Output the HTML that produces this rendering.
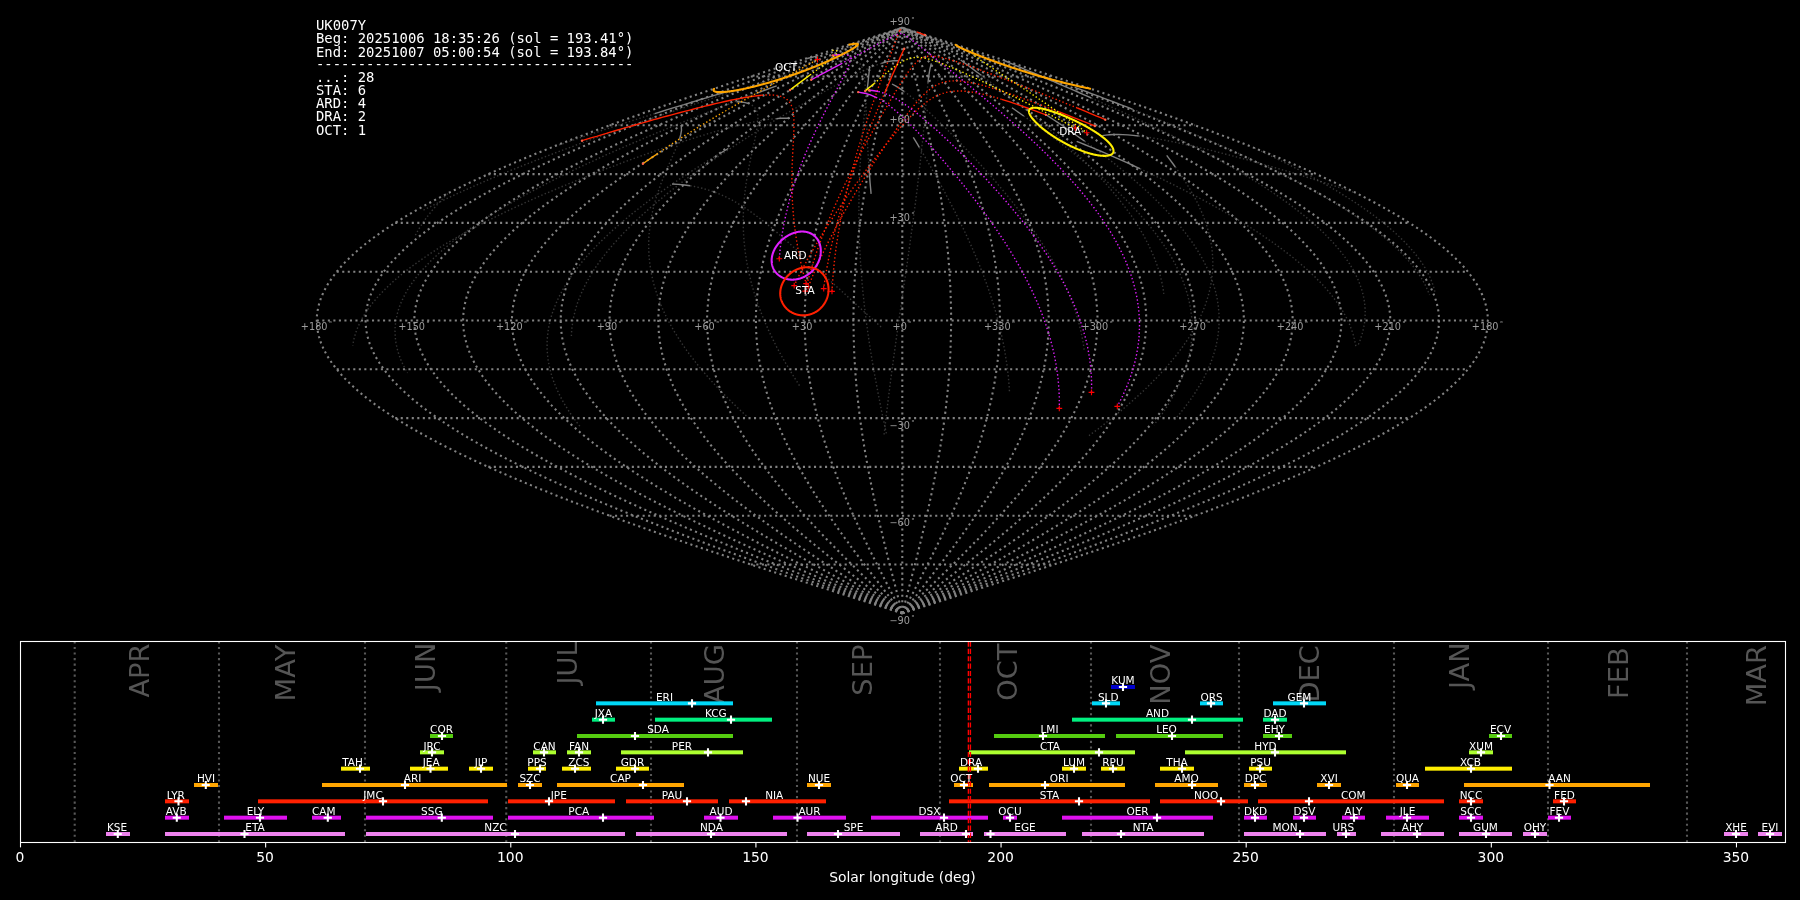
<!DOCTYPE html>
<html lang="en"><head><meta charset="utf-8"><title>UK007Y shower association</title>
<style>html,body{margin:0;padding:0;background:#000;overflow:hidden}svg{display:block;will-change:transform}</style></head>
<body><svg width="1800" height="900" viewBox="0 0 1800 900">
<rect width="1800" height="900" fill="#000"/>
<g id="sky" fill="none">
<g stroke="#828282" stroke-width="2.08" stroke-dasharray="2.08 3.44">
<path d="M902.3,613.3 L912.5,610.0 L922.7,606.8 L932.9,603.5 L943.1,600.3 L953.3,597.0 L963.5,593.8 L973.7,590.5 L983.8,587.2 L993.9,584.0 L1004.0,580.7 L1014.0,577.5 L1024.0,574.2 L1034.0,571.0 L1044.0,567.7 L1053.8,564.5 L1063.7,561.2 L1073.5,558.0 L1083.2,554.7 L1092.9,551.5 L1102.6,548.2 L1112.1,545.0 L1121.6,541.7 L1131.1,538.5 L1140.5,535.2 L1149.8,531.9 L1159.0,528.7 L1168.1,525.4 L1177.2,522.2 L1186.2,518.9 L1195.1,515.7 L1203.9,512.4 L1212.6,509.2 L1221.2,505.9 L1229.7,502.7 L1238.2,499.4 L1246.5,496.2 L1254.7,492.9 L1262.8,489.7 L1270.8,486.4 L1278.7,483.1 L1286.4,479.9 L1294.1,476.6 L1301.6,473.4 L1309.1,470.1 L1316.3,466.9 L1323.5,463.6 L1330.5,460.4 L1337.4,457.1 L1344.2,453.9 L1350.8,450.6 L1357.4,447.4 L1363.7,444.1 L1369.9,440.9 L1376.0,437.6 L1381.9,434.4 L1387.7,431.1 L1393.4,427.8 L1398.9,424.6 L1404.2,421.3 L1409.4,418.1 L1414.4,414.8 L1419.3,411.6 L1424.0,408.3 L1428.6,405.1 L1433.0,401.8 L1437.2,398.6 L1441.3,395.3 L1445.2,392.1 L1448.9,388.8 L1452.5,385.6 L1455.9,382.3 L1459.2,379.1 L1462.3,375.8 L1465.2,372.5 L1467.9,369.3 L1470.4,366.0 L1472.8,362.8 L1475.0,359.5 L1477.1,356.3 L1478.9,353.0 L1480.6,349.8 L1482.1,346.5 L1483.5,343.3 L1484.6,340.0 L1485.6,336.8 L1486.4,333.5 L1487.0,330.3 L1487.5,327.0 L1487.8,323.8 L1487.8,320.5 L1487.8,317.2 L1487.5,314.0 L1487.0,310.7 L1486.4,307.5 L1485.6,304.2 L1484.6,301.0 L1483.5,297.7 L1482.1,294.5 L1480.6,291.2 L1478.9,288.0 L1477.1,284.7 L1475.0,281.5 L1472.8,278.2 L1470.4,275.0 L1467.9,271.7 L1465.2,268.5 L1462.3,265.2 L1459.2,261.9 L1455.9,258.7 L1452.5,255.4 L1448.9,252.2 L1445.2,248.9 L1441.3,245.7 L1437.2,242.4 L1433.0,239.2 L1428.6,235.9 L1424.0,232.7 L1419.3,229.4 L1414.4,226.2 L1409.4,222.9 L1404.2,219.7 L1398.9,216.4 L1393.4,213.2 L1387.7,209.9 L1381.9,206.6 L1376.0,203.4 L1369.9,200.1 L1363.7,196.9 L1357.4,193.6 L1350.8,190.4 L1344.2,187.1 L1337.4,183.9 L1330.5,180.6 L1323.5,177.4 L1316.3,174.1 L1309.1,170.9 L1301.6,167.6 L1294.1,164.4 L1286.4,161.1 L1278.7,157.8 L1270.8,154.6 L1262.8,151.3 L1254.7,148.1 L1246.5,144.8 L1238.2,141.6 L1229.7,138.3 L1221.2,135.1 L1212.6,131.8 L1203.9,128.6 L1195.1,125.3 L1186.2,122.1 L1177.2,118.8 L1168.1,115.6 L1159.0,112.3 L1149.8,109.1 L1140.5,105.8 L1131.1,102.5 L1121.6,99.3 L1112.1,96.0 L1102.6,92.8 L1092.9,89.5 L1083.2,86.3 L1073.5,83.0 L1063.7,79.8 L1053.8,76.5 L1044.0,73.3 L1034.0,70.0 L1024.0,66.8 L1014.0,63.5 L1004.0,60.3 L993.9,57.0 L983.8,53.8 L973.7,50.5 L963.5,47.2 L953.3,44.0 L943.1,40.7 L932.9,37.5 L922.7,34.2 L912.5,31.0 L902.3,27.7"/>
<path d="M902.3,613.3 L911.7,610.0 L921.0,606.8 L930.4,603.5 L939.7,600.3 L949.1,597.0 L958.4,593.8 L967.7,590.5 L977.0,587.2 L986.3,584.0 L995.5,580.7 L1004.7,577.5 L1013.9,574.2 L1023.0,571.0 L1032.2,567.7 L1041.2,564.5 L1050.2,561.2 L1059.2,558.0 L1068.2,554.7 L1077.0,551.5 L1085.9,548.2 L1094.7,545.0 L1103.4,541.7 L1112.0,538.5 L1120.6,535.2 L1129.1,531.9 L1137.6,528.7 L1146.0,525.4 L1154.3,522.2 L1162.5,518.9 L1170.7,515.7 L1178.7,512.4 L1186.7,509.2 L1194.6,505.9 L1202.4,502.7 L1210.2,499.4 L1217.8,496.2 L1225.3,492.9 L1232.8,489.7 L1240.1,486.4 L1247.3,483.1 L1254.4,479.9 L1261.5,476.6 L1268.4,473.4 L1275.2,470.1 L1281.8,466.9 L1288.4,463.6 L1294.9,460.4 L1301.2,457.1 L1307.4,453.9 L1313.5,450.6 L1319.4,447.4 L1325.3,444.1 L1331.0,440.9 L1336.5,437.6 L1342.0,434.4 L1347.3,431.1 L1352.5,427.8 L1357.5,424.6 L1362.4,421.3 L1367.1,418.1 L1371.7,414.8 L1376.2,411.6 L1380.5,408.3 L1384.7,405.1 L1388.8,401.8 L1392.6,398.6 L1396.4,395.3 L1400.0,392.1 L1403.4,388.8 L1406.7,385.6 L1409.8,382.3 L1412.8,379.1 L1415.6,375.8 L1418.3,372.5 L1420.8,369.3 L1423.1,366.0 L1425.3,362.8 L1427.3,359.5 L1429.2,356.3 L1430.9,353.0 L1432.4,349.8 L1433.8,346.5 L1435.0,343.3 L1436.1,340.0 L1437.0,336.8 L1437.7,333.5 L1438.3,330.3 L1438.7,327.0 L1439.0,323.8 L1439.0,320.5 L1439.0,317.2 L1438.7,314.0 L1438.3,310.7 L1437.7,307.5 L1437.0,304.2 L1436.1,301.0 L1435.0,297.7 L1433.8,294.5 L1432.4,291.2 L1430.9,288.0 L1429.2,284.7 L1427.3,281.5 L1425.3,278.2 L1423.1,275.0 L1420.8,271.7 L1418.3,268.5 L1415.6,265.2 L1412.8,261.9 L1409.8,258.7 L1406.7,255.4 L1403.4,252.2 L1400.0,248.9 L1396.4,245.7 L1392.6,242.4 L1388.8,239.2 L1384.7,235.9 L1380.5,232.7 L1376.2,229.4 L1371.7,226.2 L1367.1,222.9 L1362.4,219.7 L1357.5,216.4 L1352.5,213.2 L1347.3,209.9 L1342.0,206.6 L1336.5,203.4 L1331.0,200.1 L1325.3,196.9 L1319.4,193.6 L1313.5,190.4 L1307.4,187.1 L1301.2,183.9 L1294.9,180.6 L1288.4,177.4 L1281.8,174.1 L1275.2,170.9 L1268.4,167.6 L1261.5,164.4 L1254.4,161.1 L1247.3,157.8 L1240.1,154.6 L1232.8,151.3 L1225.3,148.1 L1217.8,144.8 L1210.2,141.6 L1202.4,138.3 L1194.6,135.1 L1186.7,131.8 L1178.7,128.6 L1170.7,125.3 L1162.5,122.1 L1154.3,118.8 L1146.0,115.6 L1137.6,112.3 L1129.1,109.1 L1120.6,105.8 L1112.0,102.5 L1103.4,99.3 L1094.7,96.0 L1085.9,92.8 L1077.0,89.5 L1068.2,86.3 L1059.2,83.0 L1050.2,79.8 L1041.2,76.5 L1032.2,73.3 L1023.0,70.0 L1013.9,66.8 L1004.7,63.5 L995.5,60.3 L986.3,57.0 L977.0,53.8 L967.7,50.5 L958.4,47.2 L949.1,44.0 L939.7,40.7 L930.4,37.5 L921.0,34.2 L911.7,31.0 L902.3,27.7"/>
<path d="M902.3,613.3 L910.8,610.0 L919.3,606.8 L927.8,603.5 L936.3,600.3 L944.8,597.0 L953.3,593.8 L961.8,590.5 L970.2,587.2 L978.6,584.0 L987.0,580.7 L995.4,577.5 L1003.8,574.2 L1012.1,571.0 L1020.3,567.7 L1028.6,564.5 L1036.8,561.2 L1045.0,558.0 L1053.1,554.7 L1061.2,551.5 L1069.2,548.2 L1077.2,545.0 L1085.1,541.7 L1093.0,538.5 L1100.8,535.2 L1108.5,531.9 L1116.2,528.7 L1123.8,525.4 L1131.4,522.2 L1138.9,518.9 L1146.3,515.7 L1153.6,512.4 L1160.9,509.2 L1168.1,505.9 L1175.2,502.7 L1182.2,499.4 L1189.1,496.2 L1196.0,492.9 L1202.7,489.7 L1209.4,486.4 L1215.9,483.1 L1222.4,479.9 L1228.8,476.6 L1235.1,473.4 L1241.3,470.1 L1247.3,466.9 L1253.3,463.6 L1259.2,460.4 L1264.9,457.1 L1270.6,453.9 L1276.1,450.6 L1281.5,447.4 L1286.8,444.1 L1292.0,440.9 L1297.1,437.6 L1302.0,434.4 L1306.8,431.1 L1311.5,427.8 L1316.1,424.6 L1320.6,421.3 L1324.9,418.1 L1329.1,414.8 L1333.1,411.6 L1337.1,408.3 L1340.9,405.1 L1344.5,401.8 L1348.1,398.6 L1351.5,395.3 L1354.7,392.1 L1357.8,388.8 L1360.8,385.6 L1363.7,382.3 L1366.4,379.1 L1368.9,375.8 L1371.3,372.5 L1373.6,369.3 L1375.8,366.0 L1377.7,362.8 L1379.6,359.5 L1381.3,356.3 L1382.8,353.0 L1384.2,349.8 L1385.5,346.5 L1386.6,343.3 L1387.6,340.0 L1388.4,336.8 L1389.1,333.5 L1389.6,330.3 L1390.0,327.0 L1390.2,323.8 L1390.2,320.5 L1390.2,317.2 L1390.0,314.0 L1389.6,310.7 L1389.1,307.5 L1388.4,304.2 L1387.6,301.0 L1386.6,297.7 L1385.5,294.5 L1384.2,291.2 L1382.8,288.0 L1381.3,284.7 L1379.6,281.5 L1377.7,278.2 L1375.8,275.0 L1373.6,271.7 L1371.3,268.5 L1368.9,265.2 L1366.4,261.9 L1363.7,258.7 L1360.8,255.4 L1357.8,252.2 L1354.7,248.9 L1351.5,245.7 L1348.1,242.4 L1344.5,239.2 L1340.9,235.9 L1337.1,232.7 L1333.1,229.4 L1329.1,226.2 L1324.9,222.9 L1320.6,219.7 L1316.1,216.4 L1311.5,213.2 L1306.8,209.9 L1302.0,206.6 L1297.1,203.4 L1292.0,200.1 L1286.8,196.9 L1281.5,193.6 L1276.1,190.4 L1270.6,187.1 L1264.9,183.9 L1259.2,180.6 L1253.3,177.4 L1247.3,174.1 L1241.3,170.9 L1235.1,167.6 L1228.8,164.4 L1222.4,161.1 L1215.9,157.8 L1209.4,154.6 L1202.7,151.3 L1196.0,148.1 L1189.1,144.8 L1182.2,141.6 L1175.2,138.3 L1168.1,135.1 L1160.9,131.8 L1153.6,128.6 L1146.3,125.3 L1138.9,122.1 L1131.4,118.8 L1123.8,115.6 L1116.2,112.3 L1108.5,109.1 L1100.8,105.8 L1093.0,102.5 L1085.1,99.3 L1077.2,96.0 L1069.2,92.8 L1061.2,89.5 L1053.1,86.3 L1045.0,83.0 L1036.8,79.8 L1028.6,76.5 L1020.3,73.3 L1012.1,70.0 L1003.8,66.8 L995.4,63.5 L987.0,60.3 L978.6,57.0 L970.2,53.8 L961.8,50.5 L953.3,47.2 L944.8,44.0 L936.3,40.7 L927.8,37.5 L919.3,34.2 L910.8,31.0 L902.3,27.7"/>
<path d="M902.3,613.3 L910.0,610.0 L917.6,606.8 L925.3,603.5 L932.9,600.3 L940.6,597.0 L948.2,593.8 L955.8,590.5 L963.4,587.2 L971.0,584.0 L978.6,580.7 L986.1,577.5 L993.6,574.2 L1001.1,571.0 L1008.5,567.7 L1016.0,564.5 L1023.3,561.2 L1030.7,558.0 L1038.0,554.7 L1045.3,551.5 L1052.5,548.2 L1059.7,545.0 L1066.8,541.7 L1073.9,538.5 L1080.9,535.2 L1087.9,531.9 L1094.8,528.7 L1101.7,525.4 L1108.5,522.2 L1115.2,518.9 L1121.9,515.7 L1128.5,512.4 L1135.0,509.2 L1141.5,505.9 L1147.9,502.7 L1154.2,499.4 L1160.4,496.2 L1166.6,492.9 L1172.7,489.7 L1178.7,486.4 L1184.6,483.1 L1190.4,479.9 L1196.2,476.6 L1201.8,473.4 L1207.4,470.1 L1212.8,466.9 L1218.2,463.6 L1223.5,460.4 L1228.7,457.1 L1233.7,453.9 L1238.7,450.6 L1243.6,447.4 L1248.4,444.1 L1253.0,440.9 L1257.6,437.6 L1262.0,434.4 L1266.4,431.1 L1270.6,427.8 L1274.7,424.6 L1278.7,421.3 L1282.6,418.1 L1286.4,414.8 L1290.1,411.6 L1293.6,408.3 L1297.0,405.1 L1300.3,401.8 L1303.5,398.6 L1306.5,395.3 L1309.5,392.1 L1312.3,388.8 L1315.0,385.6 L1317.5,382.3 L1320.0,379.1 L1322.3,375.8 L1324.4,372.5 L1326.5,369.3 L1328.4,366.0 L1330.2,362.8 L1331.9,359.5 L1333.4,356.3 L1334.8,353.0 L1336.0,349.8 L1337.2,346.5 L1338.2,343.3 L1339.0,340.0 L1339.8,336.8 L1340.4,333.5 L1340.9,330.3 L1341.2,327.0 L1341.4,323.8 L1341.5,320.5 L1341.4,317.2 L1341.2,314.0 L1340.9,310.7 L1340.4,307.5 L1339.8,304.2 L1339.0,301.0 L1338.2,297.7 L1337.2,294.5 L1336.0,291.2 L1334.8,288.0 L1333.4,284.7 L1331.9,281.5 L1330.2,278.2 L1328.4,275.0 L1326.5,271.7 L1324.4,268.5 L1322.3,265.2 L1320.0,261.9 L1317.5,258.7 L1315.0,255.4 L1312.3,252.2 L1309.5,248.9 L1306.5,245.7 L1303.5,242.4 L1300.3,239.2 L1297.0,235.9 L1293.6,232.7 L1290.1,229.4 L1286.4,226.2 L1282.6,222.9 L1278.7,219.7 L1274.7,216.4 L1270.6,213.2 L1266.4,209.9 L1262.0,206.6 L1257.6,203.4 L1253.0,200.1 L1248.4,196.9 L1243.6,193.6 L1238.7,190.4 L1233.7,187.1 L1228.7,183.9 L1223.5,180.6 L1218.2,177.4 L1212.8,174.1 L1207.4,170.9 L1201.8,167.6 L1196.2,164.4 L1190.4,161.1 L1184.6,157.8 L1178.7,154.6 L1172.7,151.3 L1166.6,148.1 L1160.4,144.8 L1154.2,141.6 L1147.9,138.3 L1141.5,135.1 L1135.0,131.8 L1128.5,128.6 L1121.9,125.3 L1115.2,122.1 L1108.5,118.8 L1101.7,115.6 L1094.8,112.3 L1087.9,109.1 L1080.9,105.8 L1073.9,102.5 L1066.8,99.3 L1059.7,96.0 L1052.5,92.8 L1045.3,89.5 L1038.0,86.3 L1030.7,83.0 L1023.3,79.8 L1016.0,76.5 L1008.5,73.3 L1001.1,70.0 L993.6,66.8 L986.1,63.5 L978.6,60.3 L971.0,57.0 L963.4,53.8 L955.8,50.5 L948.2,47.2 L940.6,44.0 L932.9,40.7 L925.3,37.5 L917.6,34.2 L910.0,31.0 L902.3,27.7"/>
<path d="M902.3,613.3 L909.1,610.0 L915.9,606.8 L922.7,603.5 L929.5,600.3 L936.3,597.0 L943.1,593.8 L949.9,590.5 L956.6,587.2 L963.4,584.0 L970.1,580.7 L976.8,577.5 L983.5,574.2 L990.1,571.0 L996.7,567.7 L1003.3,564.5 L1009.9,561.2 L1016.4,558.0 L1022.9,554.7 L1029.4,551.5 L1035.8,548.2 L1042.2,545.0 L1048.5,541.7 L1054.8,538.5 L1061.1,535.2 L1067.3,531.9 L1073.4,528.7 L1079.5,525.4 L1085.6,522.2 L1091.6,518.9 L1097.5,515.7 L1103.4,512.4 L1109.2,509.2 L1114.9,505.9 L1120.6,502.7 L1126.2,499.4 L1131.7,496.2 L1137.2,492.9 L1142.6,489.7 L1148.0,486.4 L1153.2,483.1 L1158.4,479.9 L1163.5,476.6 L1168.5,473.4 L1173.5,470.1 L1178.3,466.9 L1183.1,463.6 L1187.8,460.4 L1192.4,457.1 L1196.9,453.9 L1201.3,450.6 L1205.7,447.4 L1209.9,444.1 L1214.1,440.9 L1218.1,437.6 L1222.1,434.4 L1225.9,431.1 L1229.7,427.8 L1233.3,424.6 L1236.9,421.3 L1240.4,418.1 L1243.7,414.8 L1247.0,411.6 L1250.1,408.3 L1253.2,405.1 L1256.1,401.8 L1258.9,398.6 L1261.6,395.3 L1264.2,392.1 L1266.7,388.8 L1269.1,385.6 L1271.4,382.3 L1273.6,379.1 L1275.6,375.8 L1277.5,372.5 L1279.4,369.3 L1281.1,366.0 L1282.7,362.8 L1284.1,359.5 L1285.5,356.3 L1286.7,353.0 L1287.9,349.8 L1288.9,346.5 L1289.8,343.3 L1290.5,340.0 L1291.2,336.8 L1291.7,333.5 L1292.1,330.3 L1292.4,327.0 L1292.6,323.8 L1292.7,320.5 L1292.6,317.2 L1292.4,314.0 L1292.1,310.7 L1291.7,307.5 L1291.2,304.2 L1290.5,301.0 L1289.8,297.7 L1288.9,294.5 L1287.9,291.2 L1286.7,288.0 L1285.5,284.7 L1284.1,281.5 L1282.7,278.2 L1281.1,275.0 L1279.4,271.7 L1277.5,268.5 L1275.6,265.2 L1273.6,261.9 L1271.4,258.7 L1269.1,255.4 L1266.7,252.2 L1264.2,248.9 L1261.6,245.7 L1258.9,242.4 L1256.1,239.2 L1253.2,235.9 L1250.1,232.7 L1247.0,229.4 L1243.7,226.2 L1240.4,222.9 L1236.9,219.7 L1233.3,216.4 L1229.7,213.2 L1225.9,209.9 L1222.1,206.6 L1218.1,203.4 L1214.1,200.1 L1209.9,196.9 L1205.7,193.6 L1201.3,190.4 L1196.9,187.1 L1192.4,183.9 L1187.8,180.6 L1183.1,177.4 L1178.3,174.1 L1173.5,170.9 L1168.5,167.6 L1163.5,164.4 L1158.4,161.1 L1153.2,157.8 L1148.0,154.6 L1142.6,151.3 L1137.2,148.1 L1131.7,144.8 L1126.2,141.6 L1120.6,138.3 L1114.9,135.1 L1109.2,131.8 L1103.4,128.6 L1097.5,125.3 L1091.6,122.1 L1085.6,118.8 L1079.5,115.6 L1073.4,112.3 L1067.3,109.1 L1061.1,105.8 L1054.8,102.5 L1048.5,99.3 L1042.2,96.0 L1035.8,92.8 L1029.4,89.5 L1022.9,86.3 L1016.4,83.0 L1009.9,79.8 L1003.3,76.5 L996.7,73.3 L990.1,70.0 L983.5,66.8 L976.8,63.5 L970.1,60.3 L963.4,57.0 L956.6,53.8 L949.9,50.5 L943.1,47.2 L936.3,44.0 L929.5,40.7 L922.7,37.5 L915.9,34.2 L909.1,31.0 L902.3,27.7"/>
<path d="M902.3,613.3 L908.3,610.0 L914.2,606.8 L920.2,603.5 L926.1,600.3 L932.1,597.0 L938.0,593.8 L943.9,590.5 L949.8,587.2 L955.7,584.0 L961.6,580.7 L967.5,577.5 L973.3,574.2 L979.1,571.0 L984.9,567.7 L990.7,564.5 L996.4,561.2 L1002.2,558.0 L1007.8,554.7 L1013.5,551.5 L1019.1,548.2 L1024.7,545.0 L1030.3,541.7 L1035.8,538.5 L1041.2,535.2 L1046.7,531.9 L1052.0,528.7 L1057.4,525.4 L1062.7,522.2 L1067.9,518.9 L1073.1,515.7 L1078.2,512.4 L1083.3,509.2 L1088.3,505.9 L1093.3,502.7 L1098.2,499.4 L1103.1,496.2 L1107.9,492.9 L1112.6,489.7 L1117.3,486.4 L1121.9,483.1 L1126.4,479.9 L1130.9,476.6 L1135.2,473.4 L1139.6,470.1 L1143.8,466.9 L1148.0,463.6 L1152.1,460.4 L1156.1,457.1 L1160.1,453.9 L1164.0,450.6 L1167.7,447.4 L1171.5,444.1 L1175.1,440.9 L1178.6,437.6 L1182.1,434.4 L1185.5,431.1 L1188.8,427.8 L1192.0,424.6 L1195.1,421.3 L1198.1,418.1 L1201.0,414.8 L1203.9,411.6 L1206.6,408.3 L1209.3,405.1 L1211.9,401.8 L1214.3,398.6 L1216.7,395.3 L1219.0,392.1 L1221.2,388.8 L1223.3,385.6 L1225.3,382.3 L1227.1,379.1 L1228.9,375.8 L1230.6,372.5 L1232.2,369.3 L1233.7,366.0 L1235.1,362.8 L1236.4,359.5 L1237.6,356.3 L1238.7,353.0 L1239.7,349.8 L1240.5,346.5 L1241.3,343.3 L1242.0,340.0 L1242.6,336.8 L1243.0,333.5 L1243.4,330.3 L1243.7,327.0 L1243.8,323.8 L1243.9,320.5 L1243.8,317.2 L1243.7,314.0 L1243.4,310.7 L1243.0,307.5 L1242.6,304.2 L1242.0,301.0 L1241.3,297.7 L1240.5,294.5 L1239.7,291.2 L1238.7,288.0 L1237.6,284.7 L1236.4,281.5 L1235.1,278.2 L1233.7,275.0 L1232.2,271.7 L1230.6,268.5 L1228.9,265.2 L1227.1,261.9 L1225.3,258.7 L1223.3,255.4 L1221.2,252.2 L1219.0,248.9 L1216.7,245.7 L1214.3,242.4 L1211.9,239.2 L1209.3,235.9 L1206.6,232.7 L1203.9,229.4 L1201.0,226.2 L1198.1,222.9 L1195.1,219.7 L1192.0,216.4 L1188.8,213.2 L1185.5,209.9 L1182.1,206.6 L1178.6,203.4 L1175.1,200.1 L1171.5,196.9 L1167.7,193.6 L1164.0,190.4 L1160.1,187.1 L1156.1,183.9 L1152.1,180.6 L1148.0,177.4 L1143.8,174.1 L1139.6,170.9 L1135.2,167.6 L1130.9,164.4 L1126.4,161.1 L1121.9,157.8 L1117.3,154.6 L1112.6,151.3 L1107.9,148.1 L1103.1,144.8 L1098.2,141.6 L1093.3,138.3 L1088.3,135.1 L1083.3,131.8 L1078.2,128.6 L1073.1,125.3 L1067.9,122.1 L1062.7,118.8 L1057.4,115.6 L1052.0,112.3 L1046.7,109.1 L1041.2,105.8 L1035.8,102.5 L1030.3,99.3 L1024.7,96.0 L1019.1,92.8 L1013.5,89.5 L1007.8,86.3 L1002.2,83.0 L996.4,79.8 L990.7,76.5 L984.9,73.3 L979.1,70.0 L973.3,66.8 L967.5,63.5 L961.6,60.3 L955.7,57.0 L949.8,53.8 L943.9,50.5 L938.0,47.2 L932.1,44.0 L926.1,40.7 L920.2,37.5 L914.2,34.2 L908.3,31.0 L902.3,27.7"/>
<path d="M902.3,613.3 L907.4,610.0 L912.5,606.8 L917.6,603.5 L922.7,600.3 L927.8,597.0 L932.9,593.8 L938.0,590.5 L943.0,587.2 L948.1,584.0 L953.1,580.7 L958.2,577.5 L963.2,574.2 L968.2,571.0 L973.1,567.7 L978.1,564.5 L983.0,561.2 L987.9,558.0 L992.8,554.7 L997.6,551.5 L1002.4,548.2 L1007.2,545.0 L1012.0,541.7 L1016.7,538.5 L1021.4,535.2 L1026.0,531.9 L1030.6,528.7 L1035.2,525.4 L1039.7,522.2 L1044.2,518.9 L1048.7,515.7 L1053.1,512.4 L1057.4,509.2 L1061.8,505.9 L1066.0,502.7 L1070.2,499.4 L1074.4,496.2 L1078.5,492.9 L1082.5,489.7 L1086.5,486.4 L1090.5,483.1 L1094.4,479.9 L1098.2,476.6 L1102.0,473.4 L1105.7,470.1 L1109.3,466.9 L1112.9,463.6 L1116.4,460.4 L1119.9,457.1 L1123.3,453.9 L1126.6,450.6 L1129.8,447.4 L1133.0,444.1 L1136.1,440.9 L1139.2,437.6 L1142.1,434.4 L1145.0,431.1 L1147.8,427.8 L1150.6,424.6 L1153.3,421.3 L1155.8,418.1 L1158.4,414.8 L1160.8,411.6 L1163.2,408.3 L1165.4,405.1 L1167.6,401.8 L1169.8,398.6 L1171.8,395.3 L1173.8,392.1 L1175.6,388.8 L1177.4,385.6 L1179.1,382.3 L1180.7,379.1 L1182.3,375.8 L1183.7,372.5 L1185.1,369.3 L1186.4,366.0 L1187.6,362.8 L1188.7,359.5 L1189.7,356.3 L1190.6,353.0 L1191.5,349.8 L1192.2,346.5 L1192.9,343.3 L1193.5,340.0 L1194.0,336.8 L1194.4,333.5 L1194.7,330.3 L1194.9,327.0 L1195.0,323.8 L1195.1,320.5 L1195.0,317.2 L1194.9,314.0 L1194.7,310.7 L1194.4,307.5 L1194.0,304.2 L1193.5,301.0 L1192.9,297.7 L1192.2,294.5 L1191.5,291.2 L1190.6,288.0 L1189.7,284.7 L1188.7,281.5 L1187.6,278.2 L1186.4,275.0 L1185.1,271.7 L1183.7,268.5 L1182.3,265.2 L1180.7,261.9 L1179.1,258.7 L1177.4,255.4 L1175.6,252.2 L1173.8,248.9 L1171.8,245.7 L1169.8,242.4 L1167.6,239.2 L1165.4,235.9 L1163.2,232.7 L1160.8,229.4 L1158.4,226.2 L1155.8,222.9 L1153.3,219.7 L1150.6,216.4 L1147.8,213.2 L1145.0,209.9 L1142.1,206.6 L1139.2,203.4 L1136.1,200.1 L1133.0,196.9 L1129.8,193.6 L1126.6,190.4 L1123.3,187.1 L1119.9,183.9 L1116.4,180.6 L1112.9,177.4 L1109.3,174.1 L1105.7,170.9 L1102.0,167.6 L1098.2,164.4 L1094.4,161.1 L1090.5,157.8 L1086.5,154.6 L1082.5,151.3 L1078.5,148.1 L1074.4,144.8 L1070.2,141.6 L1066.0,138.3 L1061.8,135.1 L1057.4,131.8 L1053.1,128.6 L1048.7,125.3 L1044.2,122.1 L1039.7,118.8 L1035.2,115.6 L1030.6,112.3 L1026.0,109.1 L1021.4,105.8 L1016.7,102.5 L1012.0,99.3 L1007.2,96.0 L1002.4,92.8 L997.6,89.5 L992.8,86.3 L987.9,83.0 L983.0,79.8 L978.1,76.5 L973.1,73.3 L968.2,70.0 L963.2,66.8 L958.2,63.5 L953.1,60.3 L948.1,57.0 L943.0,53.8 L938.0,50.5 L932.9,47.2 L927.8,44.0 L922.7,40.7 L917.6,37.5 L912.5,34.2 L907.4,31.0 L902.3,27.7"/>
<path d="M902.3,613.3 L906.6,610.0 L910.8,606.8 L915.1,603.5 L919.3,600.3 L923.6,597.0 L927.8,593.8 L932.0,590.5 L936.3,587.2 L940.5,584.0 L944.7,580.7 L948.9,577.5 L953.0,574.2 L957.2,571.0 L961.3,567.7 L965.4,564.5 L969.5,561.2 L973.6,558.0 L977.7,554.7 L981.7,551.5 L985.7,548.2 L989.7,545.0 L993.7,541.7 L997.6,538.5 L1001.5,535.2 L1005.4,531.9 L1009.3,528.7 L1013.1,525.4 L1016.8,522.2 L1020.6,518.9 L1024.3,515.7 L1028.0,512.4 L1031.6,509.2 L1035.2,505.9 L1038.7,502.7 L1042.2,499.4 L1045.7,496.2 L1049.1,492.9 L1052.5,489.7 L1055.8,486.4 L1059.1,483.1 L1062.4,479.9 L1065.6,476.6 L1068.7,473.4 L1071.8,470.1 L1074.8,466.9 L1077.8,463.6 L1080.7,460.4 L1083.6,457.1 L1086.4,453.9 L1089.2,450.6 L1091.9,447.4 L1094.6,444.1 L1097.1,440.9 L1099.7,437.6 L1102.2,434.4 L1104.6,431.1 L1106.9,427.8 L1109.2,424.6 L1111.4,421.3 L1113.6,418.1 L1115.7,414.8 L1117.7,411.6 L1119.7,408.3 L1121.6,405.1 L1123.4,401.8 L1125.2,398.6 L1126.9,395.3 L1128.5,392.1 L1130.1,388.8 L1131.6,385.6 L1133.0,382.3 L1134.3,379.1 L1135.6,375.8 L1136.8,372.5 L1138.0,369.3 L1139.0,366.0 L1140.0,362.8 L1140.9,359.5 L1141.8,356.3 L1142.6,353.0 L1143.3,349.8 L1143.9,346.5 L1144.5,343.3 L1144.9,340.0 L1145.3,336.8 L1145.7,333.5 L1145.9,330.3 L1146.1,327.0 L1146.2,323.8 L1146.3,320.5 L1146.2,317.2 L1146.1,314.0 L1145.9,310.7 L1145.7,307.5 L1145.3,304.2 L1144.9,301.0 L1144.5,297.7 L1143.9,294.5 L1143.3,291.2 L1142.6,288.0 L1141.8,284.7 L1140.9,281.5 L1140.0,278.2 L1139.0,275.0 L1138.0,271.7 L1136.8,268.5 L1135.6,265.2 L1134.3,261.9 L1133.0,258.7 L1131.6,255.4 L1130.1,252.2 L1128.5,248.9 L1126.9,245.7 L1125.2,242.4 L1123.4,239.2 L1121.6,235.9 L1119.7,232.7 L1117.7,229.4 L1115.7,226.2 L1113.6,222.9 L1111.4,219.7 L1109.2,216.4 L1106.9,213.2 L1104.6,209.9 L1102.2,206.6 L1099.7,203.4 L1097.1,200.1 L1094.6,196.9 L1091.9,193.6 L1089.2,190.4 L1086.4,187.1 L1083.6,183.9 L1080.7,180.6 L1077.8,177.4 L1074.8,174.1 L1071.8,170.9 L1068.7,167.6 L1065.6,164.4 L1062.4,161.1 L1059.1,157.8 L1055.8,154.6 L1052.5,151.3 L1049.1,148.1 L1045.7,144.8 L1042.2,141.6 L1038.7,138.3 L1035.2,135.1 L1031.6,131.8 L1028.0,128.6 L1024.3,125.3 L1020.6,122.1 L1016.8,118.8 L1013.1,115.6 L1009.3,112.3 L1005.4,109.1 L1001.5,105.8 L997.6,102.5 L993.7,99.3 L989.7,96.0 L985.7,92.8 L981.7,89.5 L977.7,86.3 L973.6,83.0 L969.5,79.8 L965.4,76.5 L961.3,73.3 L957.2,70.0 L953.0,66.8 L948.9,63.5 L944.7,60.3 L940.5,57.0 L936.3,53.8 L932.0,50.5 L927.8,47.2 L923.6,44.0 L919.3,40.7 L915.1,37.5 L910.8,34.2 L906.6,31.0 L902.3,27.7"/>
<path d="M902.3,613.3 L905.7,610.0 L909.1,606.8 L912.5,603.5 L915.9,600.3 L919.3,597.0 L922.7,593.8 L926.1,590.5 L929.5,587.2 L932.8,584.0 L936.2,580.7 L939.5,577.5 L942.9,574.2 L946.2,571.0 L949.5,567.7 L952.8,564.5 L956.1,561.2 L959.4,558.0 L962.6,554.7 L965.8,551.5 L969.1,548.2 L972.2,545.0 L975.4,541.7 L978.6,538.5 L981.7,535.2 L984.8,531.9 L987.9,528.7 L990.9,525.4 L993.9,522.2 L996.9,518.9 L999.9,515.7 L1002.8,512.4 L1005.7,509.2 L1008.6,505.9 L1011.4,502.7 L1014.3,499.4 L1017.0,496.2 L1019.8,492.9 L1022.5,489.7 L1025.1,486.4 L1027.8,483.1 L1030.3,479.9 L1032.9,476.6 L1035.4,473.4 L1037.9,470.1 L1040.3,466.9 L1042.7,463.6 L1045.0,460.4 L1047.3,457.1 L1049.6,453.9 L1051.8,450.6 L1054.0,447.4 L1056.1,444.1 L1058.2,440.9 L1060.2,437.6 L1062.2,434.4 L1064.1,431.1 L1066.0,427.8 L1067.8,424.6 L1069.6,421.3 L1071.3,418.1 L1073.0,414.8 L1074.6,411.6 L1076.2,408.3 L1077.7,405.1 L1079.2,401.8 L1080.6,398.6 L1082.0,395.3 L1083.3,392.1 L1084.5,388.8 L1085.7,385.6 L1086.8,382.3 L1087.9,379.1 L1089.0,375.8 L1089.9,372.5 L1090.8,369.3 L1091.7,366.0 L1092.5,362.8 L1093.2,359.5 L1093.9,356.3 L1094.5,353.0 L1095.1,349.8 L1095.6,346.5 L1096.0,343.3 L1096.4,340.0 L1096.7,336.8 L1097.0,333.5 L1097.2,330.3 L1097.4,327.0 L1097.5,323.8 L1097.5,320.5 L1097.5,317.2 L1097.4,314.0 L1097.2,310.7 L1097.0,307.5 L1096.7,304.2 L1096.4,301.0 L1096.0,297.7 L1095.6,294.5 L1095.1,291.2 L1094.5,288.0 L1093.9,284.7 L1093.2,281.5 L1092.5,278.2 L1091.7,275.0 L1090.8,271.7 L1089.9,268.5 L1089.0,265.2 L1087.9,261.9 L1086.8,258.7 L1085.7,255.4 L1084.5,252.2 L1083.3,248.9 L1082.0,245.7 L1080.6,242.4 L1079.2,239.2 L1077.7,235.9 L1076.2,232.7 L1074.6,229.4 L1073.0,226.2 L1071.3,222.9 L1069.6,219.7 L1067.8,216.4 L1066.0,213.2 L1064.1,209.9 L1062.2,206.6 L1060.2,203.4 L1058.2,200.1 L1056.1,196.9 L1054.0,193.6 L1051.8,190.4 L1049.6,187.1 L1047.3,183.9 L1045.0,180.6 L1042.7,177.4 L1040.3,174.1 L1037.9,170.9 L1035.4,167.6 L1032.9,164.4 L1030.3,161.1 L1027.8,157.8 L1025.1,154.6 L1022.5,151.3 L1019.8,148.1 L1017.0,144.8 L1014.3,141.6 L1011.4,138.3 L1008.6,135.1 L1005.7,131.8 L1002.8,128.6 L999.9,125.3 L996.9,122.1 L993.9,118.8 L990.9,115.6 L987.9,112.3 L984.8,109.1 L981.7,105.8 L978.6,102.5 L975.4,99.3 L972.2,96.0 L969.1,92.8 L965.8,89.5 L962.6,86.3 L959.4,83.0 L956.1,79.8 L952.8,76.5 L949.5,73.3 L946.2,70.0 L942.9,66.8 L939.5,63.5 L936.2,60.3 L932.8,57.0 L929.5,53.8 L926.1,50.5 L922.7,47.2 L919.3,44.0 L915.9,40.7 L912.5,37.5 L909.1,34.2 L905.7,31.0 L902.3,27.7"/>
<path d="M902.3,613.3 L904.9,610.0 L907.4,606.8 L910.0,603.5 L912.5,600.3 L915.1,597.0 L917.6,593.8 L920.1,590.5 L922.7,587.2 L925.2,584.0 L927.7,580.7 L930.2,577.5 L932.7,574.2 L935.2,571.0 L937.7,567.7 L940.2,564.5 L942.6,561.2 L945.1,558.0 L947.5,554.7 L950.0,551.5 L952.4,548.2 L954.8,545.0 L957.1,541.7 L959.5,538.5 L961.8,535.2 L964.2,531.9 L966.5,528.7 L968.8,525.4 L971.0,522.2 L973.3,518.9 L975.5,515.7 L977.7,512.4 L979.9,509.2 L982.0,505.9 L984.2,502.7 L986.3,499.4 L988.3,496.2 L990.4,492.9 L992.4,489.7 L994.4,486.4 L996.4,483.1 L998.3,479.9 L1000.3,476.6 L1002.1,473.4 L1004.0,470.1 L1005.8,466.9 L1007.6,463.6 L1009.4,460.4 L1011.1,457.1 L1012.8,453.9 L1014.4,450.6 L1016.1,447.4 L1017.7,444.1 L1019.2,440.9 L1020.7,437.6 L1022.2,434.4 L1023.7,431.1 L1025.1,427.8 L1026.4,424.6 L1027.8,421.3 L1029.1,418.1 L1030.3,414.8 L1031.6,411.6 L1032.7,408.3 L1033.9,405.1 L1035.0,401.8 L1036.0,398.6 L1037.0,395.3 L1038.0,392.1 L1039.0,388.8 L1039.9,385.6 L1040.7,382.3 L1041.5,379.1 L1042.3,375.8 L1043.0,372.5 L1043.7,369.3 L1044.3,366.0 L1044.9,362.8 L1045.5,359.5 L1046.0,356.3 L1046.5,353.0 L1046.9,349.8 L1047.3,346.5 L1047.6,343.3 L1047.9,340.0 L1048.1,336.8 L1048.3,333.5 L1048.5,330.3 L1048.6,327.0 L1048.7,323.8 L1048.7,320.5 L1048.7,317.2 L1048.6,314.0 L1048.5,310.7 L1048.3,307.5 L1048.1,304.2 L1047.9,301.0 L1047.6,297.7 L1047.3,294.5 L1046.9,291.2 L1046.5,288.0 L1046.0,284.7 L1045.5,281.5 L1044.9,278.2 L1044.3,275.0 L1043.7,271.7 L1043.0,268.5 L1042.3,265.2 L1041.5,261.9 L1040.7,258.7 L1039.9,255.4 L1039.0,252.2 L1038.0,248.9 L1037.0,245.7 L1036.0,242.4 L1035.0,239.2 L1033.9,235.9 L1032.7,232.7 L1031.6,229.4 L1030.3,226.2 L1029.1,222.9 L1027.8,219.7 L1026.4,216.4 L1025.1,213.2 L1023.7,209.9 L1022.2,206.6 L1020.7,203.4 L1019.2,200.1 L1017.7,196.9 L1016.1,193.6 L1014.4,190.4 L1012.8,187.1 L1011.1,183.9 L1009.4,180.6 L1007.6,177.4 L1005.8,174.1 L1004.0,170.9 L1002.1,167.6 L1000.3,164.4 L998.3,161.1 L996.4,157.8 L994.4,154.6 L992.4,151.3 L990.4,148.1 L988.3,144.8 L986.3,141.6 L984.2,138.3 L982.0,135.1 L979.9,131.8 L977.7,128.6 L975.5,125.3 L973.3,122.1 L971.0,118.8 L968.8,115.6 L966.5,112.3 L964.2,109.1 L961.8,105.8 L959.5,102.5 L957.1,99.3 L954.8,96.0 L952.4,92.8 L950.0,89.5 L947.5,86.3 L945.1,83.0 L942.6,79.8 L940.2,76.5 L937.7,73.3 L935.2,70.0 L932.7,66.8 L930.2,63.5 L927.7,60.3 L925.2,57.0 L922.7,53.8 L920.1,50.5 L917.6,47.2 L915.1,44.0 L912.5,40.7 L910.0,37.5 L907.4,34.2 L904.9,31.0 L902.3,27.7"/>
<path d="M902.3,613.3 L904.0,610.0 L905.7,606.8 L907.4,603.5 L909.1,600.3 L910.8,597.0 L912.5,593.8 L914.2,590.5 L915.9,587.2 L917.6,584.0 L919.2,580.7 L920.9,577.5 L922.6,574.2 L924.3,571.0 L925.9,567.7 L927.6,564.5 L929.2,561.2 L930.8,558.0 L932.5,554.7 L934.1,551.5 L935.7,548.2 L937.3,545.0 L938.9,541.7 L940.4,538.5 L942.0,535.2 L943.5,531.9 L945.1,528.7 L946.6,525.4 L948.1,522.2 L949.6,518.9 L951.1,515.7 L952.6,512.4 L954.0,509.2 L955.5,505.9 L956.9,502.7 L958.3,499.4 L959.7,496.2 L961.0,492.9 L962.4,489.7 L963.7,486.4 L965.0,483.1 L966.3,479.9 L967.6,476.6 L968.9,473.4 L970.1,470.1 L971.3,466.9 L972.5,463.6 L973.7,460.4 L974.8,457.1 L976.0,453.9 L977.1,450.6 L978.1,447.4 L979.2,444.1 L980.2,440.9 L981.3,437.6 L982.2,434.4 L983.2,431.1 L984.1,427.8 L985.1,424.6 L986.0,421.3 L986.8,418.1 L987.7,414.8 L988.5,411.6 L989.3,408.3 L990.0,405.1 L990.7,401.8 L991.5,398.6 L992.1,395.3 L992.8,392.1 L993.4,388.8 L994.0,385.6 L994.6,382.3 L995.1,379.1 L995.6,375.8 L996.1,372.5 L996.6,369.3 L997.0,366.0 L997.4,362.8 L997.8,359.5 L998.1,356.3 L998.4,353.0 L998.7,349.8 L998.9,346.5 L999.2,343.3 L999.4,340.0 L999.5,336.8 L999.7,333.5 L999.8,330.3 L999.8,327.0 L999.9,323.8 L999.9,320.5 L999.9,317.2 L999.8,314.0 L999.8,310.7 L999.7,307.5 L999.5,304.2 L999.4,301.0 L999.2,297.7 L998.9,294.5 L998.7,291.2 L998.4,288.0 L998.1,284.7 L997.8,281.5 L997.4,278.2 L997.0,275.0 L996.6,271.7 L996.1,268.5 L995.6,265.2 L995.1,261.9 L994.6,258.7 L994.0,255.4 L993.4,252.2 L992.8,248.9 L992.1,245.7 L991.5,242.4 L990.7,239.2 L990.0,235.9 L989.3,232.7 L988.5,229.4 L987.7,226.2 L986.8,222.9 L986.0,219.7 L985.1,216.4 L984.1,213.2 L983.2,209.9 L982.2,206.6 L981.3,203.4 L980.2,200.1 L979.2,196.9 L978.1,193.6 L977.1,190.4 L976.0,187.1 L974.8,183.9 L973.7,180.6 L972.5,177.4 L971.3,174.1 L970.1,170.9 L968.9,167.6 L967.6,164.4 L966.3,161.1 L965.0,157.8 L963.7,154.6 L962.4,151.3 L961.0,148.1 L959.7,144.8 L958.3,141.6 L956.9,138.3 L955.5,135.1 L954.0,131.8 L952.6,128.6 L951.1,125.3 L949.6,122.1 L948.1,118.8 L946.6,115.6 L945.1,112.3 L943.5,109.1 L942.0,105.8 L940.4,102.5 L938.9,99.3 L937.3,96.0 L935.7,92.8 L934.1,89.5 L932.5,86.3 L930.8,83.0 L929.2,79.8 L927.6,76.5 L925.9,73.3 L924.3,70.0 L922.6,66.8 L920.9,63.5 L919.2,60.3 L917.6,57.0 L915.9,53.8 L914.2,50.5 L912.5,47.2 L910.8,44.0 L909.1,40.7 L907.4,37.5 L905.7,34.2 L904.0,31.0 L902.3,27.7"/>
<path d="M902.3,613.3 L903.2,610.0 L904.0,606.8 L904.9,603.5 L905.7,600.3 L906.6,597.0 L907.4,593.8 L908.2,590.5 L909.1,587.2 L909.9,584.0 L910.8,580.7 L911.6,577.5 L912.4,574.2 L913.3,571.0 L914.1,567.7 L914.9,564.5 L915.7,561.2 L916.6,558.0 L917.4,554.7 L918.2,551.5 L919.0,548.2 L919.8,545.0 L920.6,541.7 L921.4,538.5 L922.1,535.2 L922.9,531.9 L923.7,528.7 L924.5,525.4 L925.2,522.2 L926.0,518.9 L926.7,515.7 L927.4,512.4 L928.2,509.2 L928.9,505.9 L929.6,502.7 L930.3,499.4 L931.0,496.2 L931.7,492.9 L932.3,489.7 L933.0,486.4 L933.7,483.1 L934.3,479.9 L935.0,476.6 L935.6,473.4 L936.2,470.1 L936.8,466.9 L937.4,463.6 L938.0,460.4 L938.6,457.1 L939.1,453.9 L939.7,450.6 L940.2,447.4 L940.8,444.1 L941.3,440.9 L941.8,437.6 L942.3,434.4 L942.8,431.1 L943.2,427.8 L943.7,424.6 L944.1,421.3 L944.6,418.1 L945.0,414.8 L945.4,411.6 L945.8,408.3 L946.2,405.1 L946.5,401.8 L946.9,398.6 L947.2,395.3 L947.5,392.1 L947.9,388.8 L948.2,385.6 L948.4,382.3 L948.7,379.1 L949.0,375.8 L949.2,372.5 L949.4,369.3 L949.6,366.0 L949.8,362.8 L950.0,359.5 L950.2,356.3 L950.4,353.0 L950.5,349.8 L950.6,346.5 L950.7,343.3 L950.8,340.0 L950.9,336.8 L951.0,333.5 L951.0,330.3 L951.1,327.0 L951.1,323.8 L951.1,320.5 L951.1,317.2 L951.1,314.0 L951.0,310.7 L951.0,307.5 L950.9,304.2 L950.8,301.0 L950.7,297.7 L950.6,294.5 L950.5,291.2 L950.4,288.0 L950.2,284.7 L950.0,281.5 L949.8,278.2 L949.6,275.0 L949.4,271.7 L949.2,268.5 L949.0,265.2 L948.7,261.9 L948.4,258.7 L948.2,255.4 L947.9,252.2 L947.5,248.9 L947.2,245.7 L946.9,242.4 L946.5,239.2 L946.2,235.9 L945.8,232.7 L945.4,229.4 L945.0,226.2 L944.6,222.9 L944.1,219.7 L943.7,216.4 L943.2,213.2 L942.8,209.9 L942.3,206.6 L941.8,203.4 L941.3,200.1 L940.8,196.9 L940.2,193.6 L939.7,190.4 L939.1,187.1 L938.6,183.9 L938.0,180.6 L937.4,177.4 L936.8,174.1 L936.2,170.9 L935.6,167.6 L935.0,164.4 L934.3,161.1 L933.7,157.8 L933.0,154.6 L932.3,151.3 L931.7,148.1 L931.0,144.8 L930.3,141.6 L929.6,138.3 L928.9,135.1 L928.2,131.8 L927.4,128.6 L926.7,125.3 L926.0,122.1 L925.2,118.8 L924.5,115.6 L923.7,112.3 L922.9,109.1 L922.1,105.8 L921.4,102.5 L920.6,99.3 L919.8,96.0 L919.0,92.8 L918.2,89.5 L917.4,86.3 L916.6,83.0 L915.7,79.8 L914.9,76.5 L914.1,73.3 L913.3,70.0 L912.4,66.8 L911.6,63.5 L910.8,60.3 L909.9,57.0 L909.1,53.8 L908.2,50.5 L907.4,47.2 L906.6,44.0 L905.7,40.7 L904.9,37.5 L904.0,34.2 L903.2,31.0 L902.3,27.7"/>
<path d="M902.3,613.3 L902.3,610.0 L902.3,606.8 L902.3,603.5 L902.3,600.3 L902.3,597.0 L902.3,593.8 L902.3,590.5 L902.3,587.2 L902.3,584.0 L902.3,580.7 L902.3,577.5 L902.3,574.2 L902.3,571.0 L902.3,567.7 L902.3,564.5 L902.3,561.2 L902.3,558.0 L902.3,554.7 L902.3,551.5 L902.3,548.2 L902.3,545.0 L902.3,541.7 L902.3,538.5 L902.3,535.2 L902.3,531.9 L902.3,528.7 L902.3,525.4 L902.3,522.2 L902.3,518.9 L902.3,515.7 L902.3,512.4 L902.3,509.2 L902.3,505.9 L902.3,502.7 L902.3,499.4 L902.3,496.2 L902.3,492.9 L902.3,489.7 L902.3,486.4 L902.3,483.1 L902.3,479.9 L902.3,476.6 L902.3,473.4 L902.3,470.1 L902.3,466.9 L902.3,463.6 L902.3,460.4 L902.3,457.1 L902.3,453.9 L902.3,450.6 L902.3,447.4 L902.3,444.1 L902.3,440.9 L902.3,437.6 L902.3,434.4 L902.3,431.1 L902.3,427.8 L902.3,424.6 L902.3,421.3 L902.3,418.1 L902.3,414.8 L902.3,411.6 L902.3,408.3 L902.3,405.1 L902.3,401.8 L902.3,398.6 L902.3,395.3 L902.3,392.1 L902.3,388.8 L902.3,385.6 L902.3,382.3 L902.3,379.1 L902.3,375.8 L902.3,372.5 L902.3,369.3 L902.3,366.0 L902.3,362.8 L902.3,359.5 L902.3,356.3 L902.3,353.0 L902.3,349.8 L902.3,346.5 L902.3,343.3 L902.3,340.0 L902.3,336.8 L902.3,333.5 L902.3,330.3 L902.3,327.0 L902.3,323.8 L902.3,320.5 L902.3,317.2 L902.3,314.0 L902.3,310.7 L902.3,307.5 L902.3,304.2 L902.3,301.0 L902.3,297.7 L902.3,294.5 L902.3,291.2 L902.3,288.0 L902.3,284.7 L902.3,281.5 L902.3,278.2 L902.3,275.0 L902.3,271.7 L902.3,268.5 L902.3,265.2 L902.3,261.9 L902.3,258.7 L902.3,255.4 L902.3,252.2 L902.3,248.9 L902.3,245.7 L902.3,242.4 L902.3,239.2 L902.3,235.9 L902.3,232.7 L902.3,229.4 L902.3,226.2 L902.3,222.9 L902.3,219.7 L902.3,216.4 L902.3,213.2 L902.3,209.9 L902.3,206.6 L902.3,203.4 L902.3,200.1 L902.3,196.9 L902.3,193.6 L902.3,190.4 L902.3,187.1 L902.3,183.9 L902.3,180.6 L902.3,177.4 L902.3,174.1 L902.3,170.9 L902.3,167.6 L902.3,164.4 L902.3,161.1 L902.3,157.8 L902.3,154.6 L902.3,151.3 L902.3,148.1 L902.3,144.8 L902.3,141.6 L902.3,138.3 L902.3,135.1 L902.3,131.8 L902.3,128.6 L902.3,125.3 L902.3,122.1 L902.3,118.8 L902.3,115.6 L902.3,112.3 L902.3,109.1 L902.3,105.8 L902.3,102.5 L902.3,99.3 L902.3,96.0 L902.3,92.8 L902.3,89.5 L902.3,86.3 L902.3,83.0 L902.3,79.8 L902.3,76.5 L902.3,73.3 L902.3,70.0 L902.3,66.8 L902.3,63.5 L902.3,60.3 L902.3,57.0 L902.3,53.8 L902.3,50.5 L902.3,47.2 L902.3,44.0 L902.3,40.7 L902.3,37.5 L902.3,34.2 L902.3,31.0 L902.3,27.7"/>
<path d="M902.3,613.3 L901.4,610.0 L900.6,606.8 L899.7,603.5 L898.9,600.3 L898.0,597.0 L897.2,593.8 L896.4,590.5 L895.5,587.2 L894.7,584.0 L893.8,580.7 L893.0,577.5 L892.2,574.2 L891.3,571.0 L890.5,567.7 L889.7,564.5 L888.9,561.2 L888.0,558.0 L887.2,554.7 L886.4,551.5 L885.6,548.2 L884.8,545.0 L884.0,541.7 L883.2,538.5 L882.5,535.2 L881.7,531.9 L880.9,528.7 L880.1,525.4 L879.4,522.2 L878.6,518.9 L877.9,515.7 L877.2,512.4 L876.4,509.2 L875.7,505.9 L875.0,502.7 L874.3,499.4 L873.6,496.2 L872.9,492.9 L872.3,489.7 L871.6,486.4 L870.9,483.1 L870.3,479.9 L869.6,476.6 L869.0,473.4 L868.4,470.1 L867.8,466.9 L867.2,463.6 L866.6,460.4 L866.0,457.1 L865.5,453.9 L864.9,450.6 L864.4,447.4 L863.8,444.1 L863.3,440.9 L862.8,437.6 L862.3,434.4 L861.8,431.1 L861.4,427.8 L860.9,424.6 L860.5,421.3 L860.0,418.1 L859.6,414.8 L859.2,411.6 L858.8,408.3 L858.4,405.1 L858.1,401.8 L857.7,398.6 L857.4,395.3 L857.1,392.1 L856.7,388.8 L856.4,385.6 L856.2,382.3 L855.9,379.1 L855.6,375.8 L855.4,372.5 L855.2,369.3 L855.0,366.0 L854.8,362.8 L854.6,359.5 L854.4,356.3 L854.2,353.0 L854.1,349.8 L854.0,346.5 L853.9,343.3 L853.8,340.0 L853.7,336.8 L853.6,333.5 L853.6,330.3 L853.5,327.0 L853.5,323.8 L853.5,320.5 L853.5,317.2 L853.5,314.0 L853.6,310.7 L853.6,307.5 L853.7,304.2 L853.8,301.0 L853.9,297.7 L854.0,294.5 L854.1,291.2 L854.2,288.0 L854.4,284.7 L854.6,281.5 L854.8,278.2 L855.0,275.0 L855.2,271.7 L855.4,268.5 L855.6,265.2 L855.9,261.9 L856.2,258.7 L856.4,255.4 L856.7,252.2 L857.1,248.9 L857.4,245.7 L857.7,242.4 L858.1,239.2 L858.4,235.9 L858.8,232.7 L859.2,229.4 L859.6,226.2 L860.0,222.9 L860.5,219.7 L860.9,216.4 L861.4,213.2 L861.8,209.9 L862.3,206.6 L862.8,203.4 L863.3,200.1 L863.8,196.9 L864.4,193.6 L864.9,190.4 L865.5,187.1 L866.0,183.9 L866.6,180.6 L867.2,177.4 L867.8,174.1 L868.4,170.9 L869.0,167.6 L869.6,164.4 L870.3,161.1 L870.9,157.8 L871.6,154.6 L872.3,151.3 L872.9,148.1 L873.6,144.8 L874.3,141.6 L875.0,138.3 L875.7,135.1 L876.4,131.8 L877.2,128.6 L877.9,125.3 L878.6,122.1 L879.4,118.8 L880.1,115.6 L880.9,112.3 L881.7,109.1 L882.5,105.8 L883.2,102.5 L884.0,99.3 L884.8,96.0 L885.6,92.8 L886.4,89.5 L887.2,86.3 L888.0,83.0 L888.9,79.8 L889.7,76.5 L890.5,73.3 L891.3,70.0 L892.2,66.8 L893.0,63.5 L893.8,60.3 L894.7,57.0 L895.5,53.8 L896.4,50.5 L897.2,47.2 L898.0,44.0 L898.9,40.7 L899.7,37.5 L900.6,34.2 L901.4,31.0 L902.3,27.7"/>
<path d="M902.3,613.3 L900.6,610.0 L898.9,606.8 L897.2,603.5 L895.5,600.3 L893.8,597.0 L892.1,593.8 L890.4,590.5 L888.7,587.2 L887.0,584.0 L885.4,580.7 L883.7,577.5 L882.0,574.2 L880.3,571.0 L878.7,567.7 L877.0,564.5 L875.4,561.2 L873.8,558.0 L872.1,554.7 L870.5,551.5 L868.9,548.2 L867.3,545.0 L865.7,541.7 L864.2,538.5 L862.6,535.2 L861.1,531.9 L859.5,528.7 L858.0,525.4 L856.5,522.2 L855.0,518.9 L853.5,515.7 L852.0,512.4 L850.6,509.2 L849.1,505.9 L847.7,502.7 L846.3,499.4 L844.9,496.2 L843.6,492.9 L842.2,489.7 L840.9,486.4 L839.6,483.1 L838.3,479.9 L837.0,476.6 L835.7,473.4 L834.5,470.1 L833.3,466.9 L832.1,463.6 L830.9,460.4 L829.8,457.1 L828.6,453.9 L827.5,450.6 L826.5,447.4 L825.4,444.1 L824.4,440.9 L823.3,437.6 L822.4,434.4 L821.4,431.1 L820.5,427.8 L819.5,424.6 L818.6,421.3 L817.8,418.1 L816.9,414.8 L816.1,411.6 L815.3,408.3 L814.6,405.1 L813.9,401.8 L813.1,398.6 L812.5,395.3 L811.8,392.1 L811.2,388.8 L810.6,385.6 L810.0,382.3 L809.5,379.1 L809.0,375.8 L808.5,372.5 L808.0,369.3 L807.6,366.0 L807.2,362.8 L806.8,359.5 L806.5,356.3 L806.2,353.0 L805.9,349.8 L805.7,346.5 L805.4,343.3 L805.2,340.0 L805.1,336.8 L804.9,333.5 L804.8,330.3 L804.8,327.0 L804.7,323.8 L804.7,320.5 L804.7,317.2 L804.8,314.0 L804.8,310.7 L804.9,307.5 L805.1,304.2 L805.2,301.0 L805.4,297.7 L805.7,294.5 L805.9,291.2 L806.2,288.0 L806.5,284.7 L806.8,281.5 L807.2,278.2 L807.6,275.0 L808.0,271.7 L808.5,268.5 L809.0,265.2 L809.5,261.9 L810.0,258.7 L810.6,255.4 L811.2,252.2 L811.8,248.9 L812.5,245.7 L813.1,242.4 L813.9,239.2 L814.6,235.9 L815.3,232.7 L816.1,229.4 L816.9,226.2 L817.8,222.9 L818.6,219.7 L819.5,216.4 L820.5,213.2 L821.4,209.9 L822.4,206.6 L823.3,203.4 L824.4,200.1 L825.4,196.9 L826.5,193.6 L827.5,190.4 L828.6,187.1 L829.8,183.9 L830.9,180.6 L832.1,177.4 L833.3,174.1 L834.5,170.9 L835.7,167.6 L837.0,164.4 L838.3,161.1 L839.6,157.8 L840.9,154.6 L842.2,151.3 L843.6,148.1 L844.9,144.8 L846.3,141.6 L847.7,138.3 L849.1,135.1 L850.6,131.8 L852.0,128.6 L853.5,125.3 L855.0,122.1 L856.5,118.8 L858.0,115.6 L859.5,112.3 L861.1,109.1 L862.6,105.8 L864.2,102.5 L865.7,99.3 L867.3,96.0 L868.9,92.8 L870.5,89.5 L872.1,86.3 L873.8,83.0 L875.4,79.8 L877.0,76.5 L878.7,73.3 L880.3,70.0 L882.0,66.8 L883.7,63.5 L885.4,60.3 L887.0,57.0 L888.7,53.8 L890.4,50.5 L892.1,47.2 L893.8,44.0 L895.5,40.7 L897.2,37.5 L898.9,34.2 L900.6,31.0 L902.3,27.7"/>
<path d="M902.3,613.3 L899.7,610.0 L897.2,606.8 L894.6,603.5 L892.1,600.3 L889.5,597.0 L887.0,593.8 L884.5,590.5 L881.9,587.2 L879.4,584.0 L876.9,580.7 L874.4,577.5 L871.9,574.2 L869.4,571.0 L866.9,567.7 L864.4,564.5 L862.0,561.2 L859.5,558.0 L857.1,554.7 L854.6,551.5 L852.2,548.2 L849.8,545.0 L847.5,541.7 L845.1,538.5 L842.8,535.2 L840.4,531.9 L838.1,528.7 L835.8,525.4 L833.6,522.2 L831.3,518.9 L829.1,515.7 L826.9,512.4 L824.7,509.2 L822.6,505.9 L820.4,502.7 L818.3,499.4 L816.3,496.2 L814.2,492.9 L812.2,489.7 L810.2,486.4 L808.2,483.1 L806.3,479.9 L804.3,476.6 L802.5,473.4 L800.6,470.1 L798.8,466.9 L797.0,463.6 L795.2,460.4 L793.5,457.1 L791.8,453.9 L790.2,450.6 L788.5,447.4 L786.9,444.1 L785.4,440.9 L783.9,437.6 L782.4,434.4 L780.9,431.1 L779.5,427.8 L778.2,424.6 L776.8,421.3 L775.5,418.1 L774.3,414.8 L773.0,411.6 L771.9,408.3 L770.7,405.1 L769.6,401.8 L768.6,398.6 L767.6,395.3 L766.6,392.1 L765.6,388.8 L764.7,385.6 L763.9,382.3 L763.1,379.1 L762.3,375.8 L761.6,372.5 L760.9,369.3 L760.3,366.0 L759.7,362.8 L759.1,359.5 L758.6,356.3 L758.1,353.0 L757.7,349.8 L757.3,346.5 L757.0,343.3 L756.7,340.0 L756.5,336.8 L756.3,333.5 L756.1,330.3 L756.0,327.0 L755.9,323.8 L755.9,320.5 L755.9,317.2 L756.0,314.0 L756.1,310.7 L756.3,307.5 L756.5,304.2 L756.7,301.0 L757.0,297.7 L757.3,294.5 L757.7,291.2 L758.1,288.0 L758.6,284.7 L759.1,281.5 L759.7,278.2 L760.3,275.0 L760.9,271.7 L761.6,268.5 L762.3,265.2 L763.1,261.9 L763.9,258.7 L764.7,255.4 L765.6,252.2 L766.6,248.9 L767.6,245.7 L768.6,242.4 L769.6,239.2 L770.7,235.9 L771.9,232.7 L773.0,229.4 L774.3,226.2 L775.5,222.9 L776.8,219.7 L778.2,216.4 L779.5,213.2 L780.9,209.9 L782.4,206.6 L783.9,203.4 L785.4,200.1 L786.9,196.9 L788.5,193.6 L790.2,190.4 L791.8,187.1 L793.5,183.9 L795.2,180.6 L797.0,177.4 L798.8,174.1 L800.6,170.9 L802.5,167.6 L804.3,164.4 L806.3,161.1 L808.2,157.8 L810.2,154.6 L812.2,151.3 L814.2,148.1 L816.3,144.8 L818.3,141.6 L820.4,138.3 L822.6,135.1 L824.7,131.8 L826.9,128.6 L829.1,125.3 L831.3,122.1 L833.6,118.8 L835.8,115.6 L838.1,112.3 L840.4,109.1 L842.8,105.8 L845.1,102.5 L847.5,99.3 L849.8,96.0 L852.2,92.8 L854.6,89.5 L857.1,86.3 L859.5,83.0 L862.0,79.8 L864.4,76.5 L866.9,73.3 L869.4,70.0 L871.9,66.8 L874.4,63.5 L876.9,60.3 L879.4,57.0 L881.9,53.8 L884.5,50.5 L887.0,47.2 L889.5,44.0 L892.1,40.7 L894.6,37.5 L897.2,34.2 L899.7,31.0 L902.3,27.7"/>
<path d="M902.3,613.3 L898.9,610.0 L895.5,606.8 L892.1,603.5 L888.7,600.3 L885.3,597.0 L881.9,593.8 L878.5,590.5 L875.1,587.2 L871.8,584.0 L868.4,580.7 L865.1,577.5 L861.7,574.2 L858.4,571.0 L855.1,567.7 L851.8,564.5 L848.5,561.2 L845.2,558.0 L842.0,554.7 L838.8,551.5 L835.5,548.2 L832.4,545.0 L829.2,541.7 L826.0,538.5 L822.9,535.2 L819.8,531.9 L816.7,528.7 L813.7,525.4 L810.7,522.2 L807.7,518.9 L804.7,515.7 L801.8,512.4 L798.9,509.2 L796.0,505.9 L793.2,502.7 L790.3,499.4 L787.6,496.2 L784.8,492.9 L782.1,489.7 L779.5,486.4 L776.8,483.1 L774.3,479.9 L771.7,476.6 L769.2,473.4 L766.7,470.1 L764.3,466.9 L761.9,463.6 L759.6,460.4 L757.3,457.1 L755.0,453.9 L752.8,450.6 L750.6,447.4 L748.5,444.1 L746.4,440.9 L744.4,437.6 L742.4,434.4 L740.5,431.1 L738.6,427.8 L736.8,424.6 L735.0,421.3 L733.3,418.1 L731.6,414.8 L730.0,411.6 L728.4,408.3 L726.9,405.1 L725.4,401.8 L724.0,398.6 L722.6,395.3 L721.3,392.1 L720.1,388.8 L718.9,385.6 L717.8,382.3 L716.7,379.1 L715.6,375.8 L714.7,372.5 L713.8,369.3 L712.9,366.0 L712.1,362.8 L711.4,359.5 L710.7,356.3 L710.1,353.0 L709.5,349.8 L709.0,346.5 L708.6,343.3 L708.2,340.0 L707.9,336.8 L707.6,333.5 L707.4,330.3 L707.2,327.0 L707.1,323.8 L707.1,320.5 L707.1,317.2 L707.2,314.0 L707.4,310.7 L707.6,307.5 L707.9,304.2 L708.2,301.0 L708.6,297.7 L709.0,294.5 L709.5,291.2 L710.1,288.0 L710.7,284.7 L711.4,281.5 L712.1,278.2 L712.9,275.0 L713.8,271.7 L714.7,268.5 L715.6,265.2 L716.7,261.9 L717.8,258.7 L718.9,255.4 L720.1,252.2 L721.3,248.9 L722.6,245.7 L724.0,242.4 L725.4,239.2 L726.9,235.9 L728.4,232.7 L730.0,229.4 L731.6,226.2 L733.3,222.9 L735.0,219.7 L736.8,216.4 L738.6,213.2 L740.5,209.9 L742.4,206.6 L744.4,203.4 L746.4,200.1 L748.5,196.9 L750.6,193.6 L752.8,190.4 L755.0,187.1 L757.3,183.9 L759.6,180.6 L761.9,177.4 L764.3,174.1 L766.7,170.9 L769.2,167.6 L771.7,164.4 L774.3,161.1 L776.8,157.8 L779.5,154.6 L782.1,151.3 L784.8,148.1 L787.6,144.8 L790.3,141.6 L793.2,138.3 L796.0,135.1 L798.9,131.8 L801.8,128.6 L804.7,125.3 L807.7,122.1 L810.7,118.8 L813.7,115.6 L816.7,112.3 L819.8,109.1 L822.9,105.8 L826.0,102.5 L829.2,99.3 L832.4,96.0 L835.5,92.8 L838.8,89.5 L842.0,86.3 L845.2,83.0 L848.5,79.8 L851.8,76.5 L855.1,73.3 L858.4,70.0 L861.7,66.8 L865.1,63.5 L868.4,60.3 L871.8,57.0 L875.1,53.8 L878.5,50.5 L881.9,47.2 L885.3,44.0 L888.7,40.7 L892.1,37.5 L895.5,34.2 L898.9,31.0 L902.3,27.7"/>
<path d="M902.3,613.3 L898.0,610.0 L893.8,606.8 L889.5,603.5 L885.3,600.3 L881.0,597.0 L876.8,593.8 L872.6,590.5 L868.3,587.2 L864.1,584.0 L859.9,580.7 L855.7,577.5 L851.6,574.2 L847.4,571.0 L843.3,567.7 L839.2,564.5 L835.1,561.2 L831.0,558.0 L826.9,554.7 L822.9,551.5 L818.9,548.2 L814.9,545.0 L810.9,541.7 L807.0,538.5 L803.1,535.2 L799.2,531.9 L795.3,528.7 L791.5,525.4 L787.8,522.2 L784.0,518.9 L780.3,515.7 L776.6,512.4 L773.0,509.2 L769.4,505.9 L765.9,502.7 L762.4,499.4 L758.9,496.2 L755.5,492.9 L752.1,489.7 L748.8,486.4 L745.5,483.1 L742.2,479.9 L739.0,476.6 L735.9,473.4 L732.8,470.1 L729.8,466.9 L726.8,463.6 L723.9,460.4 L721.0,457.1 L718.2,453.9 L715.4,450.6 L712.7,447.4 L710.0,444.1 L707.5,440.9 L704.9,437.6 L702.4,434.4 L700.0,431.1 L697.7,427.8 L695.4,424.6 L693.2,421.3 L691.0,418.1 L688.9,414.8 L686.9,411.6 L684.9,408.3 L683.0,405.1 L681.2,401.8 L679.4,398.6 L677.7,395.3 L676.1,392.1 L674.5,388.8 L673.0,385.6 L671.6,382.3 L670.3,379.1 L669.0,375.8 L667.8,372.5 L666.6,369.3 L665.6,366.0 L664.6,362.8 L663.7,359.5 L662.8,356.3 L662.0,353.0 L661.3,349.8 L660.7,346.5 L660.1,343.3 L659.7,340.0 L659.3,336.8 L658.9,333.5 L658.7,330.3 L658.5,327.0 L658.4,323.8 L658.3,320.5 L658.4,317.2 L658.5,314.0 L658.7,310.7 L658.9,307.5 L659.3,304.2 L659.7,301.0 L660.1,297.7 L660.7,294.5 L661.3,291.2 L662.0,288.0 L662.8,284.7 L663.7,281.5 L664.6,278.2 L665.6,275.0 L666.6,271.7 L667.8,268.5 L669.0,265.2 L670.3,261.9 L671.6,258.7 L673.0,255.4 L674.5,252.2 L676.1,248.9 L677.7,245.7 L679.4,242.4 L681.2,239.2 L683.0,235.9 L684.9,232.7 L686.9,229.4 L688.9,226.2 L691.0,222.9 L693.2,219.7 L695.4,216.4 L697.7,213.2 L700.0,209.9 L702.4,206.6 L704.9,203.4 L707.5,200.1 L710.0,196.9 L712.7,193.6 L715.4,190.4 L718.2,187.1 L721.0,183.9 L723.9,180.6 L726.8,177.4 L729.8,174.1 L732.8,170.9 L735.9,167.6 L739.0,164.4 L742.2,161.1 L745.5,157.8 L748.8,154.6 L752.1,151.3 L755.5,148.1 L758.9,144.8 L762.4,141.6 L765.9,138.3 L769.4,135.1 L773.0,131.8 L776.6,128.6 L780.3,125.3 L784.0,122.1 L787.8,118.8 L791.5,115.6 L795.3,112.3 L799.2,109.1 L803.1,105.8 L807.0,102.5 L810.9,99.3 L814.9,96.0 L818.9,92.8 L822.9,89.5 L826.9,86.3 L831.0,83.0 L835.1,79.8 L839.2,76.5 L843.3,73.3 L847.4,70.0 L851.6,66.8 L855.7,63.5 L859.9,60.3 L864.1,57.0 L868.3,53.8 L872.6,50.5 L876.8,47.2 L881.0,44.0 L885.3,40.7 L889.5,37.5 L893.8,34.2 L898.0,31.0 L902.3,27.7"/>
<path d="M902.3,613.3 L897.2,610.0 L892.1,606.8 L887.0,603.5 L881.9,600.3 L876.8,597.0 L871.7,593.8 L866.6,590.5 L861.6,587.2 L856.5,584.0 L851.5,580.7 L846.4,577.5 L841.4,574.2 L836.4,571.0 L831.5,567.7 L826.5,564.5 L821.6,561.2 L816.7,558.0 L811.8,554.7 L807.0,551.5 L802.2,548.2 L797.4,545.0 L792.6,541.7 L787.9,538.5 L783.2,535.2 L778.6,531.9 L774.0,528.7 L769.4,525.4 L764.9,522.2 L760.4,518.9 L755.9,515.7 L751.5,512.4 L747.2,509.2 L742.8,505.9 L738.6,502.7 L734.4,499.4 L730.2,496.2 L726.1,492.9 L722.1,489.7 L718.1,486.4 L714.1,483.1 L710.2,479.9 L706.4,476.6 L702.6,473.4 L698.9,470.1 L695.3,466.9 L691.7,463.6 L688.2,460.4 L684.7,457.1 L681.3,453.9 L678.0,450.6 L674.8,447.4 L671.6,444.1 L668.5,440.9 L665.4,437.6 L662.5,434.4 L659.6,431.1 L656.8,427.8 L654.0,424.6 L651.3,421.3 L648.8,418.1 L646.2,414.8 L643.8,411.6 L641.4,408.3 L639.2,405.1 L637.0,401.8 L634.8,398.6 L632.8,395.3 L630.8,392.1 L629.0,388.8 L627.2,385.6 L625.5,382.3 L623.9,379.1 L622.3,375.8 L620.9,372.5 L619.5,369.3 L618.2,366.0 L617.0,362.8 L615.9,359.5 L614.9,356.3 L614.0,353.0 L613.1,349.8 L612.4,346.5 L611.7,343.3 L611.1,340.0 L610.6,336.8 L610.2,333.5 L609.9,330.3 L609.7,327.0 L609.6,323.8 L609.5,320.5 L609.6,317.2 L609.7,314.0 L609.9,310.7 L610.2,307.5 L610.6,304.2 L611.1,301.0 L611.7,297.7 L612.4,294.5 L613.1,291.2 L614.0,288.0 L614.9,284.7 L615.9,281.5 L617.0,278.2 L618.2,275.0 L619.5,271.7 L620.9,268.5 L622.3,265.2 L623.9,261.9 L625.5,258.7 L627.2,255.4 L629.0,252.2 L630.8,248.9 L632.8,245.7 L634.8,242.4 L637.0,239.2 L639.2,235.9 L641.4,232.7 L643.8,229.4 L646.2,226.2 L648.8,222.9 L651.3,219.7 L654.0,216.4 L656.8,213.2 L659.6,209.9 L662.5,206.6 L665.4,203.4 L668.5,200.1 L671.6,196.9 L674.8,193.6 L678.0,190.4 L681.3,187.1 L684.7,183.9 L688.2,180.6 L691.7,177.4 L695.3,174.1 L698.9,170.9 L702.6,167.6 L706.4,164.4 L710.2,161.1 L714.1,157.8 L718.1,154.6 L722.1,151.3 L726.1,148.1 L730.2,144.8 L734.4,141.6 L738.6,138.3 L742.8,135.1 L747.2,131.8 L751.5,128.6 L755.9,125.3 L760.4,122.1 L764.9,118.8 L769.4,115.6 L774.0,112.3 L778.6,109.1 L783.2,105.8 L787.9,102.5 L792.6,99.3 L797.4,96.0 L802.2,92.8 L807.0,89.5 L811.8,86.3 L816.7,83.0 L821.6,79.8 L826.5,76.5 L831.5,73.3 L836.4,70.0 L841.4,66.8 L846.4,63.5 L851.5,60.3 L856.5,57.0 L861.6,53.8 L866.6,50.5 L871.7,47.2 L876.8,44.0 L881.9,40.7 L887.0,37.5 L892.1,34.2 L897.2,31.0 L902.3,27.7"/>
<path d="M902.3,613.3 L896.3,610.0 L890.4,606.8 L884.4,603.5 L878.5,600.3 L872.5,597.0 L866.6,593.8 L860.7,590.5 L854.8,587.2 L848.9,584.0 L843.0,580.7 L837.1,577.5 L831.3,574.2 L825.5,571.0 L819.7,567.7 L813.9,564.5 L808.2,561.2 L802.4,558.0 L796.8,554.7 L791.1,551.5 L785.5,548.2 L779.9,545.0 L774.3,541.7 L768.8,538.5 L763.4,535.2 L757.9,531.9 L752.6,528.7 L747.2,525.4 L741.9,522.2 L736.7,518.9 L731.5,515.7 L726.4,512.4 L721.3,509.2 L716.3,505.9 L711.3,502.7 L706.4,499.4 L701.5,496.2 L696.7,492.9 L692.0,489.7 L687.3,486.4 L682.7,483.1 L678.2,479.9 L673.7,476.6 L669.4,473.4 L665.0,470.1 L660.8,466.9 L656.6,463.6 L652.5,460.4 L648.5,457.1 L644.5,453.9 L640.6,450.6 L636.9,447.4 L633.1,444.1 L629.5,440.9 L626.0,437.6 L622.5,434.4 L619.1,431.1 L615.8,427.8 L612.6,424.6 L609.5,421.3 L606.5,418.1 L603.6,414.8 L600.7,411.6 L598.0,408.3 L595.3,405.1 L592.7,401.8 L590.3,398.6 L587.9,395.3 L585.6,392.1 L583.4,388.8 L581.3,385.6 L579.3,382.3 L577.5,379.1 L575.7,375.8 L574.0,372.5 L572.4,369.3 L570.9,366.0 L569.5,362.8 L568.2,359.5 L567.0,356.3 L565.9,353.0 L564.9,349.8 L564.1,346.5 L563.3,343.3 L562.6,340.0 L562.0,336.8 L561.6,333.5 L561.2,330.3 L560.9,327.0 L560.8,323.8 L560.7,320.5 L560.8,317.2 L560.9,314.0 L561.2,310.7 L561.6,307.5 L562.0,304.2 L562.6,301.0 L563.3,297.7 L564.1,294.5 L564.9,291.2 L565.9,288.0 L567.0,284.7 L568.2,281.5 L569.5,278.2 L570.9,275.0 L572.4,271.7 L574.0,268.5 L575.7,265.2 L577.5,261.9 L579.3,258.7 L581.3,255.4 L583.4,252.2 L585.6,248.9 L587.9,245.7 L590.3,242.4 L592.7,239.2 L595.3,235.9 L598.0,232.7 L600.7,229.4 L603.6,226.2 L606.5,222.9 L609.5,219.7 L612.6,216.4 L615.8,213.2 L619.1,209.9 L622.5,206.6 L626.0,203.4 L629.5,200.1 L633.1,196.9 L636.9,193.6 L640.6,190.4 L644.5,187.1 L648.5,183.9 L652.5,180.6 L656.6,177.4 L660.8,174.1 L665.0,170.9 L669.4,167.6 L673.7,164.4 L678.2,161.1 L682.7,157.8 L687.3,154.6 L692.0,151.3 L696.7,148.1 L701.5,144.8 L706.4,141.6 L711.3,138.3 L716.3,135.1 L721.3,131.8 L726.4,128.6 L731.5,125.3 L736.7,122.1 L741.9,118.8 L747.2,115.6 L752.6,112.3 L757.9,109.1 L763.4,105.8 L768.8,102.5 L774.3,99.3 L779.9,96.0 L785.5,92.8 L791.1,89.5 L796.8,86.3 L802.4,83.0 L808.2,79.8 L813.9,76.5 L819.7,73.3 L825.5,70.0 L831.3,66.8 L837.1,63.5 L843.0,60.3 L848.9,57.0 L854.8,53.8 L860.7,50.5 L866.6,47.2 L872.5,44.0 L878.5,40.7 L884.4,37.5 L890.4,34.2 L896.3,31.0 L902.3,27.7"/>
<path d="M902.3,613.3 L895.5,610.0 L888.7,606.8 L881.9,603.5 L875.1,600.3 L868.3,597.0 L861.5,593.8 L854.7,590.5 L848.0,587.2 L841.2,584.0 L834.5,580.7 L827.8,577.5 L821.1,574.2 L814.5,571.0 L807.9,567.7 L801.3,564.5 L794.7,561.2 L788.2,558.0 L781.7,554.7 L775.2,551.5 L768.8,548.2 L762.4,545.0 L756.1,541.7 L749.8,538.5 L743.5,535.2 L737.3,531.9 L731.2,528.7 L725.1,525.4 L719.0,522.2 L713.0,518.9 L707.1,515.7 L701.2,512.4 L695.4,509.2 L689.7,505.9 L684.0,502.7 L678.4,499.4 L672.9,496.2 L667.4,492.9 L662.0,489.7 L656.6,486.4 L651.4,483.1 L646.2,479.9 L641.1,476.6 L636.1,473.4 L631.1,470.1 L626.3,466.9 L621.5,463.6 L616.8,460.4 L612.2,457.1 L607.7,453.9 L603.3,450.6 L598.9,447.4 L594.7,444.1 L590.5,440.9 L586.5,437.6 L582.5,434.4 L578.7,431.1 L574.9,427.8 L571.3,424.6 L567.7,421.3 L564.2,418.1 L560.9,414.8 L557.6,411.6 L554.5,408.3 L551.4,405.1 L548.5,401.8 L545.7,398.6 L543.0,395.3 L540.4,392.1 L537.9,388.8 L535.5,385.6 L533.2,382.3 L531.0,379.1 L529.0,375.8 L527.1,372.5 L525.2,369.3 L523.5,366.0 L521.9,362.8 L520.5,359.5 L519.1,356.3 L517.9,353.0 L516.7,349.8 L515.7,346.5 L514.8,343.3 L514.1,340.0 L513.4,336.8 L512.9,333.5 L512.5,330.3 L512.2,327.0 L512.0,323.8 L511.9,320.5 L512.0,317.2 L512.2,314.0 L512.5,310.7 L512.9,307.5 L513.4,304.2 L514.1,301.0 L514.8,297.7 L515.7,294.5 L516.7,291.2 L517.9,288.0 L519.1,284.7 L520.5,281.5 L521.9,278.2 L523.5,275.0 L525.2,271.7 L527.1,268.5 L529.0,265.2 L531.0,261.9 L533.2,258.7 L535.5,255.4 L537.9,252.2 L540.4,248.9 L543.0,245.7 L545.7,242.4 L548.5,239.2 L551.4,235.9 L554.5,232.7 L557.6,229.4 L560.9,226.2 L564.2,222.9 L567.7,219.7 L571.3,216.4 L574.9,213.2 L578.7,209.9 L582.5,206.6 L586.5,203.4 L590.5,200.1 L594.7,196.9 L598.9,193.6 L603.3,190.4 L607.7,187.1 L612.2,183.9 L616.8,180.6 L621.5,177.4 L626.3,174.1 L631.1,170.9 L636.1,167.6 L641.1,164.4 L646.2,161.1 L651.4,157.8 L656.6,154.6 L662.0,151.3 L667.4,148.1 L672.9,144.8 L678.4,141.6 L684.0,138.3 L689.7,135.1 L695.4,131.8 L701.2,128.6 L707.1,125.3 L713.0,122.1 L719.0,118.8 L725.1,115.6 L731.2,112.3 L737.3,109.1 L743.5,105.8 L749.8,102.5 L756.1,99.3 L762.4,96.0 L768.8,92.8 L775.2,89.5 L781.7,86.3 L788.2,83.0 L794.7,79.8 L801.3,76.5 L807.9,73.3 L814.5,70.0 L821.1,66.8 L827.8,63.5 L834.5,60.3 L841.2,57.0 L848.0,53.8 L854.7,50.5 L861.5,47.2 L868.3,44.0 L875.1,40.7 L881.9,37.5 L888.7,34.2 L895.5,31.0 L902.3,27.7"/>
<path d="M902.3,613.3 L894.6,610.0 L887.0,606.8 L879.3,603.5 L871.7,600.3 L864.0,597.0 L856.4,593.8 L848.8,590.5 L841.2,587.2 L833.6,584.0 L826.0,580.7 L818.5,577.5 L811.0,574.2 L803.5,571.0 L796.1,567.7 L788.6,564.5 L781.3,561.2 L773.9,558.0 L766.6,554.7 L759.3,551.5 L752.1,548.2 L744.9,545.0 L737.8,541.7 L730.7,538.5 L723.7,535.2 L716.7,531.9 L709.8,528.7 L702.9,525.4 L696.1,522.2 L689.4,518.9 L682.7,515.7 L676.1,512.4 L669.6,509.2 L663.1,505.9 L656.7,502.7 L650.4,499.4 L644.2,496.2 L638.0,492.9 L631.9,489.7 L625.9,486.4 L620.0,483.1 L614.2,479.9 L608.4,476.6 L602.8,473.4 L597.2,470.1 L591.8,466.9 L586.4,463.6 L581.1,460.4 L575.9,457.1 L570.9,453.9 L565.9,450.6 L561.0,447.4 L556.2,444.1 L551.6,440.9 L547.0,437.6 L542.6,434.4 L538.2,431.1 L534.0,427.8 L529.9,424.6 L525.9,421.3 L522.0,418.1 L518.2,414.8 L514.5,411.6 L511.0,408.3 L507.6,405.1 L504.3,401.8 L501.1,398.6 L498.1,395.3 L495.1,392.1 L492.3,388.8 L489.6,385.6 L487.1,382.3 L484.6,379.1 L482.3,375.8 L480.2,372.5 L478.1,369.3 L476.2,366.0 L474.4,362.8 L472.7,359.5 L471.2,356.3 L469.8,353.0 L468.6,349.8 L467.4,346.5 L466.4,343.3 L465.6,340.0 L464.8,336.8 L464.2,333.5 L463.7,330.3 L463.4,327.0 L463.2,323.8 L463.1,320.5 L463.2,317.2 L463.4,314.0 L463.7,310.7 L464.2,307.5 L464.8,304.2 L465.6,301.0 L466.4,297.7 L467.4,294.5 L468.6,291.2 L469.8,288.0 L471.2,284.7 L472.7,281.5 L474.4,278.2 L476.2,275.0 L478.1,271.7 L480.2,268.5 L482.3,265.2 L484.6,261.9 L487.1,258.7 L489.6,255.4 L492.3,252.2 L495.1,248.9 L498.1,245.7 L501.1,242.4 L504.3,239.2 L507.6,235.9 L511.0,232.7 L514.5,229.4 L518.2,226.2 L522.0,222.9 L525.9,219.7 L529.9,216.4 L534.0,213.2 L538.2,209.9 L542.6,206.6 L547.0,203.4 L551.6,200.1 L556.2,196.9 L561.0,193.6 L565.9,190.4 L570.9,187.1 L575.9,183.9 L581.1,180.6 L586.4,177.4 L591.8,174.1 L597.2,170.9 L602.8,167.6 L608.4,164.4 L614.2,161.1 L620.0,157.8 L625.9,154.6 L631.9,151.3 L638.0,148.1 L644.2,144.8 L650.4,141.6 L656.7,138.3 L663.1,135.1 L669.6,131.8 L676.1,128.6 L682.7,125.3 L689.4,122.1 L696.1,118.8 L702.9,115.6 L709.8,112.3 L716.7,109.1 L723.7,105.8 L730.7,102.5 L737.8,99.3 L744.9,96.0 L752.1,92.8 L759.3,89.5 L766.6,86.3 L773.9,83.0 L781.3,79.8 L788.6,76.5 L796.1,73.3 L803.5,70.0 L811.0,66.8 L818.5,63.5 L826.0,60.3 L833.6,57.0 L841.2,53.8 L848.8,50.5 L856.4,47.2 L864.0,44.0 L871.7,40.7 L879.3,37.5 L887.0,34.2 L894.6,31.0 L902.3,27.7"/>
<path d="M902.3,613.3 L893.8,610.0 L885.3,606.8 L876.8,603.5 L868.3,600.3 L859.8,597.0 L851.3,593.8 L842.8,590.5 L834.4,587.2 L826.0,584.0 L817.6,580.7 L809.2,577.5 L800.8,574.2 L792.5,571.0 L784.3,567.7 L776.0,564.5 L767.8,561.2 L759.6,558.0 L751.5,554.7 L743.4,551.5 L735.4,548.2 L727.4,545.0 L719.5,541.7 L711.6,538.5 L703.8,535.2 L696.1,531.9 L688.4,528.7 L680.8,525.4 L673.2,522.2 L665.7,518.9 L658.3,515.7 L651.0,512.4 L643.7,509.2 L636.5,505.9 L629.4,502.7 L622.4,499.4 L615.5,496.2 L608.6,492.9 L601.9,489.7 L595.2,486.4 L588.7,483.1 L582.2,479.9 L575.8,476.6 L569.5,473.4 L563.3,470.1 L557.3,466.9 L551.3,463.6 L545.4,460.4 L539.7,457.1 L534.0,453.9 L528.5,450.6 L523.1,447.4 L517.8,444.1 L512.6,440.9 L507.5,437.6 L502.6,434.4 L497.8,431.1 L493.1,427.8 L488.5,424.6 L484.0,421.3 L479.7,418.1 L475.5,414.8 L471.5,411.6 L467.5,408.3 L463.7,405.1 L460.1,401.8 L456.5,398.6 L453.1,395.3 L449.9,392.1 L446.8,388.8 L443.8,385.6 L440.9,382.3 L438.2,379.1 L435.7,375.8 L433.3,372.5 L431.0,369.3 L428.8,366.0 L426.9,362.8 L425.0,359.5 L423.3,356.3 L421.8,353.0 L420.4,349.8 L419.1,346.5 L418.0,343.3 L417.0,340.0 L416.2,336.8 L415.5,333.5 L415.0,330.3 L414.6,327.0 L414.4,323.8 L414.3,320.5 L414.4,317.2 L414.6,314.0 L415.0,310.7 L415.5,307.5 L416.2,304.2 L417.0,301.0 L418.0,297.7 L419.1,294.5 L420.4,291.2 L421.8,288.0 L423.3,284.7 L425.0,281.5 L426.9,278.2 L428.8,275.0 L431.0,271.7 L433.3,268.5 L435.7,265.2 L438.2,261.9 L440.9,258.7 L443.8,255.4 L446.8,252.2 L449.9,248.9 L453.1,245.7 L456.5,242.4 L460.1,239.2 L463.7,235.9 L467.5,232.7 L471.5,229.4 L475.5,226.2 L479.7,222.9 L484.0,219.7 L488.5,216.4 L493.1,213.2 L497.8,209.9 L502.6,206.6 L507.5,203.4 L512.6,200.1 L517.8,196.9 L523.1,193.6 L528.5,190.4 L534.0,187.1 L539.7,183.9 L545.4,180.6 L551.3,177.4 L557.3,174.1 L563.3,170.9 L569.5,167.6 L575.8,164.4 L582.2,161.1 L588.7,157.8 L595.2,154.6 L601.9,151.3 L608.6,148.1 L615.5,144.8 L622.4,141.6 L629.4,138.3 L636.5,135.1 L643.7,131.8 L651.0,128.6 L658.3,125.3 L665.7,122.1 L673.2,118.8 L680.8,115.6 L688.4,112.3 L696.1,109.1 L703.8,105.8 L711.6,102.5 L719.5,99.3 L727.4,96.0 L735.4,92.8 L743.4,89.5 L751.5,86.3 L759.6,83.0 L767.8,79.8 L776.0,76.5 L784.3,73.3 L792.5,70.0 L800.8,66.8 L809.2,63.5 L817.6,60.3 L826.0,57.0 L834.4,53.8 L842.8,50.5 L851.3,47.2 L859.8,44.0 L868.3,40.7 L876.8,37.5 L885.3,34.2 L893.8,31.0 L902.3,27.7"/>
<path d="M902.3,613.3 L892.9,610.0 L883.6,606.8 L874.2,603.5 L864.9,600.3 L855.5,597.0 L846.2,593.8 L836.9,590.5 L827.6,587.2 L818.3,584.0 L809.1,580.7 L799.9,577.5 L790.7,574.2 L781.6,571.0 L772.4,567.7 L763.4,564.5 L754.4,561.2 L745.4,558.0 L736.4,554.7 L727.6,551.5 L718.7,548.2 L709.9,545.0 L701.2,541.7 L692.6,538.5 L684.0,535.2 L675.5,531.9 L667.0,528.7 L658.6,525.4 L650.3,522.2 L642.1,518.9 L633.9,515.7 L625.9,512.4 L617.9,509.2 L610.0,505.9 L602.2,502.7 L594.4,499.4 L586.8,496.2 L579.3,492.9 L571.8,489.7 L564.5,486.4 L557.3,483.1 L550.2,479.9 L543.1,476.6 L536.2,473.4 L529.4,470.1 L522.8,466.9 L516.2,463.6 L509.7,460.4 L503.4,457.1 L497.2,453.9 L491.1,450.6 L485.2,447.4 L479.3,444.1 L473.6,440.9 L468.1,437.6 L462.6,434.4 L457.3,431.1 L452.1,427.8 L447.1,424.6 L442.2,421.3 L437.5,418.1 L432.9,414.8 L428.4,411.6 L424.1,408.3 L419.9,405.1 L415.8,401.8 L412.0,398.6 L408.2,395.3 L404.6,392.1 L401.2,388.8 L397.9,385.6 L394.8,382.3 L391.8,379.1 L389.0,375.8 L386.3,372.5 L383.8,369.3 L381.5,366.0 L379.3,362.8 L377.3,359.5 L375.4,356.3 L373.7,353.0 L372.2,349.8 L370.8,346.5 L369.6,343.3 L368.5,340.0 L367.6,336.8 L366.9,333.5 L366.3,330.3 L365.9,327.0 L365.6,323.8 L365.6,320.5 L365.6,317.2 L365.9,314.0 L366.3,310.7 L366.9,307.5 L367.6,304.2 L368.5,301.0 L369.6,297.7 L370.8,294.5 L372.2,291.2 L373.7,288.0 L375.4,284.7 L377.3,281.5 L379.3,278.2 L381.5,275.0 L383.8,271.7 L386.3,268.5 L389.0,265.2 L391.8,261.9 L394.8,258.7 L397.9,255.4 L401.2,252.2 L404.6,248.9 L408.2,245.7 L412.0,242.4 L415.8,239.2 L419.9,235.9 L424.1,232.7 L428.4,229.4 L432.9,226.2 L437.5,222.9 L442.2,219.7 L447.1,216.4 L452.1,213.2 L457.3,209.9 L462.6,206.6 L468.1,203.4 L473.6,200.1 L479.3,196.9 L485.2,193.6 L491.1,190.4 L497.2,187.1 L503.4,183.9 L509.7,180.6 L516.2,177.4 L522.8,174.1 L529.4,170.9 L536.2,167.6 L543.1,164.4 L550.2,161.1 L557.3,157.8 L564.5,154.6 L571.8,151.3 L579.3,148.1 L586.8,144.8 L594.4,141.6 L602.2,138.3 L610.0,135.1 L617.9,131.8 L625.9,128.6 L633.9,125.3 L642.1,122.1 L650.3,118.8 L658.6,115.6 L667.0,112.3 L675.5,109.1 L684.0,105.8 L692.6,102.5 L701.2,99.3 L709.9,96.0 L718.7,92.8 L727.6,89.5 L736.4,86.3 L745.4,83.0 L754.4,79.8 L763.4,76.5 L772.4,73.3 L781.6,70.0 L790.7,66.8 L799.9,63.5 L809.1,60.3 L818.3,57.0 L827.6,53.8 L836.9,50.5 L846.2,47.2 L855.5,44.0 L864.9,40.7 L874.2,37.5 L883.6,34.2 L892.9,31.0 L902.3,27.7"/>
<path d="M902.3,613.3 L892.1,610.0 L881.9,606.8 L871.7,603.5 L861.5,600.3 L851.3,597.0 L841.1,593.8 L830.9,590.5 L820.8,587.2 L810.7,584.0 L800.6,580.7 L790.6,577.5 L780.6,574.2 L770.6,571.0 L760.6,567.7 L750.8,564.5 L740.9,561.2 L731.1,558.0 L721.4,554.7 L711.7,551.5 L702.0,548.2 L692.5,545.0 L683.0,541.7 L673.5,538.5 L664.1,535.2 L654.8,531.9 L645.6,528.7 L636.5,525.4 L627.4,522.2 L618.4,518.9 L609.5,515.7 L600.7,512.4 L592.0,509.2 L583.4,505.9 L574.9,502.7 L566.4,499.4 L558.1,496.2 L549.9,492.9 L541.8,489.7 L533.8,486.4 L525.9,483.1 L518.2,479.9 L510.5,476.6 L503.0,473.4 L495.5,470.1 L488.3,466.9 L481.1,463.6 L474.1,460.4 L467.2,457.1 L460.4,453.9 L453.8,450.6 L447.2,447.4 L440.9,444.1 L434.7,440.9 L428.6,437.6 L422.7,434.4 L416.9,431.1 L411.2,427.8 L405.7,424.6 L400.4,421.3 L395.2,418.1 L390.2,414.8 L385.3,411.6 L380.6,408.3 L376.0,405.1 L371.6,401.8 L367.4,398.6 L363.3,395.3 L359.4,392.1 L355.7,388.8 L352.1,385.6 L348.7,382.3 L345.4,379.1 L342.3,375.8 L339.4,372.5 L336.7,369.3 L334.2,366.0 L331.8,362.8 L329.6,359.5 L327.5,356.3 L325.7,353.0 L324.0,349.8 L322.5,346.5 L321.1,343.3 L320.0,340.0 L319.0,336.8 L318.2,333.5 L317.6,330.3 L317.1,327.0 L316.8,323.8 L316.8,320.5 L316.8,317.2 L317.1,314.0 L317.6,310.7 L318.2,307.5 L319.0,304.2 L320.0,301.0 L321.1,297.7 L322.5,294.5 L324.0,291.2 L325.7,288.0 L327.5,284.7 L329.6,281.5 L331.8,278.2 L334.2,275.0 L336.7,271.7 L339.4,268.5 L342.3,265.2 L345.4,261.9 L348.7,258.7 L352.1,255.4 L355.7,252.2 L359.4,248.9 L363.3,245.7 L367.4,242.4 L371.6,239.2 L376.0,235.9 L380.6,232.7 L385.3,229.4 L390.2,226.2 L395.2,222.9 L400.4,219.7 L405.7,216.4 L411.2,213.2 L416.9,209.9 L422.7,206.6 L428.6,203.4 L434.7,200.1 L440.9,196.9 L447.2,193.6 L453.8,190.4 L460.4,187.1 L467.2,183.9 L474.1,180.6 L481.1,177.4 L488.3,174.1 L495.5,170.9 L503.0,167.6 L510.5,164.4 L518.2,161.1 L525.9,157.8 L533.8,154.6 L541.8,151.3 L549.9,148.1 L558.1,144.8 L566.4,141.6 L574.9,138.3 L583.4,135.1 L592.0,131.8 L600.7,128.6 L609.5,125.3 L618.4,122.1 L627.4,118.8 L636.5,115.6 L645.6,112.3 L654.8,109.1 L664.1,105.8 L673.5,102.5 L683.0,99.3 L692.5,96.0 L702.0,92.8 L711.7,89.5 L721.4,86.3 L731.1,83.0 L740.9,79.8 L750.8,76.5 L760.6,73.3 L770.6,70.0 L780.6,66.8 L790.6,63.5 L800.6,60.3 L810.7,57.0 L820.8,53.8 L830.9,50.5 L841.1,47.2 L851.3,44.0 L861.5,40.7 L871.7,37.5 L881.9,34.2 L892.1,31.0 L902.3,27.7"/>
<path d="M750.8,564.5 L1053.8,564.5"/>
<path d="M609.5,515.7 L1195.1,515.7"/>
<path d="M488.3,466.9 L1316.3,466.9"/>
<path d="M395.2,418.1 L1409.4,418.1"/>
<path d="M336.7,369.3 L1467.9,369.3"/>
<path d="M316.8,320.5 L1487.8,320.5"/>
<path d="M336.7,271.7 L1467.9,271.7"/>
<path d="M395.2,222.9 L1409.4,222.9"/>
<path d="M488.3,174.1 L1316.3,174.1"/>
<path d="M609.5,125.3 L1195.1,125.3"/>
<path d="M750.8,76.5 L1053.8,76.5"/>
</g>
<g id="spor">
<path d="M654.7,113.6 L650.1,115.1 L645.4,116.5 L640.8,118.0 L636.2,119.4 L631.6,120.9 L627.0,122.4 L622.3,123.9 L617.7,125.4 L613.1,126.8 L608.6,128.3 L604.0,129.8 L599.4,131.3 L594.8,132.8 L590.3,134.3 L585.8,135.9 L581.2,137.4 L576.7,138.9 L572.2,140.4 L567.7,141.9 L563.3,143.5 L558.8,145.0 L554.4,146.5" stroke="#808080" stroke-opacity="0.42" stroke-width="1.39" stroke-dasharray="1.39 2.29"/>
<path d="M1254.5,148.0 L1257.8,149.6 L1261.1,151.1 L1264.3,152.7 L1267.5,154.2 L1270.7,155.7 L1273.9,157.3 L1277.1,158.8 L1280.2,160.4 L1283.3,161.9 L1286.4,163.5 L1289.5,165.0 L1292.6,166.6 L1295.6,168.1 L1298.6,169.7 L1301.6,171.3 L1304.5,172.8 L1307.4,174.4 L1310.3,175.9 L1313.2,177.5 L1316.1,179.1 L1318.9,180.6 L1321.7,182.2 L1324.4,183.8 L1327.2,185.3 L1329.9,186.9 L1332.6,188.5 L1335.2,190.0 L1337.8,191.6 L1340.4,193.2 L1343.0,194.8 L1345.5,196.3 L1348.0,197.9 L1350.5,199.5 L1352.9,201.1 L1355.3,202.6 L1357.7,204.2 L1360.1,205.8 L1362.4,207.4 L1364.7,209.0 L1366.9,210.5 L1369.1,212.1 L1371.3,213.7 L1373.5,215.3 L1375.6,216.9 L1377.7,218.4 L1379.7,220.0 L1381.8,221.6 L1383.7,223.2 L1385.7,224.8 L1387.6,226.4 L1389.5,228.0 L1391.3,229.5 L1393.2,231.1 L1394.9,232.7 L1396.7,234.3 L1398.4,235.9 L1400.1,237.5 L1401.7,239.1 L1403.3,240.7 L1404.9,242.2 L1406.4,243.8 L1407.9,245.4 L1409.3,247.0 L1410.8,248.6 L1412.1,250.2 L1413.5,251.8 L1414.8,253.4 L1416.1,255.0 L1417.3,256.6 L1418.5,258.2 L1419.7,259.8 L1420.8,261.3 L1421.9,262.9 L1422.9,264.5 L1423.9,266.1 L1424.9,267.7 L1425.8,269.3 L1426.7,270.9 L1427.6,272.5 L1428.4,274.1 L1429.2,275.7 L1429.9,277.3 L1430.6,278.9 L1431.3,280.5 L1431.9,282.1 L1432.5,283.7 L1433.0,285.3 L1433.6,286.9 L1434.0,288.4 L1434.5,290.0 L1434.8,291.6" stroke="#808080" stroke-opacity="0.42" stroke-width="1.39" stroke-dasharray="1.39 2.29"/>
<path d="M756.7,93.3 L752.9,94.8 L749.0,96.2 L745.2,97.7 L741.3,99.2 L737.5,100.6 L733.6,102.1 L729.7,103.6 L725.9,105.1 L722.0,106.6 L718.2,108.1 L714.3,109.7 L710.4,111.2 L706.6,112.7 L702.8,114.2 L698.9,115.7 L695.1,117.3 L691.3,118.8 L687.4,120.3 L683.6,121.9 L679.8,123.4 L676.0,125.0 L672.3,126.5 L668.5,128.1 L664.7,129.6 L661.0,131.2 L657.3,132.7 L653.6,134.3 L649.8,135.9 L646.2,137.4 L642.5,139.0 L638.8,140.6 L635.2,142.1 L631.5,143.7 L627.9,145.3 L624.3,146.8 L620.8,148.4 L617.2,150.0 L613.6,151.6 L610.1,153.1 L606.6,154.7 L603.1,156.3 L599.7,157.9 L596.2,159.5 L592.8,161.1 L589.4,162.6 L586.0,164.2 L582.6,165.8 L579.3,167.4 L575.9,169.0 L572.6,170.6 L569.4,172.2 L566.1,173.7 L562.9,175.3 L559.7,176.9 L556.5,178.5 L553.3,180.1 L550.2,181.7 L547.1,183.3 L544.0,184.9 L540.9,186.5 L537.9,188.1 L534.9,189.7 L531.9,191.3 L528.9,192.9 L526.0,194.5 L523.1,196.1 L520.2,197.7 L517.4,199.3 L514.6,200.9 L511.8,202.5 L509.0,204.1 L506.3,205.7 L503.5,207.3 L500.9,208.9 L498.2,210.5 L495.6,212.1 L493.0,213.7 L490.4,215.3 L487.9,216.9 L485.4,218.5 L482.9,220.1 L480.5,221.7 L478.1,223.3 L475.7,224.9 L473.4,226.5 L471.0,228.1 L468.8,229.7 L466.5,231.3 L464.3,232.9 L462.1,234.5 L459.9,236.1 L457.8,237.7 L455.7,239.3 L453.7,241.0 L451.6,242.6 L449.7,244.2 L447.7,245.8 L445.8,247.4 L443.9,249.0 L442.0,250.6 L440.2,252.2 L438.4,253.8 L436.7,255.4 L434.9,257.0 L433.3,258.6 L431.6,260.2 L430.0,261.9 L428.4,263.5 L426.9,265.1 L425.4,266.7 L423.9,268.3 L422.4,269.9 L421.0,271.5 L419.7,273.1 L418.3,274.7 L417.1,276.3 L415.8,277.9 L414.6,279.6 L413.4,281.2 L412.2,282.8 L411.1,284.4 L410.0,286.0 L409.0,287.6 L408.0,289.2 L407.0,290.8 L406.1,292.4 L405.2,294.0 L404.4,295.7 L403.5,297.3 L402.8,298.9 L402.0,300.5 L401.3,302.1 L400.6,303.7 L400.0,305.3 L399.4,306.9 L398.9,308.5 L398.3,310.2 L397.9,311.8 L397.4,313.4 L397.0,315.0 L396.7,316.6 L396.3,318.2 L396.0,319.8 L395.8,321.4 L395.6,323.0 L395.4,324.7 L395.2,326.3 L395.1,327.9 L395.1,329.5 L395.0,331.1 L395.1,332.7 L395.1,334.3 L395.2,335.9 L395.3,337.5 L395.5,339.2 L395.7,340.8 L395.9,342.4 L396.2,344.0 L396.5,345.6 L396.9,347.2 L397.2,348.8 L397.7,350.4 L398.1,352.0 L398.6,353.6 L399.2,355.3 L399.8,356.9 L400.4,358.5 L401.0,360.1 L401.7,361.7 L402.4,363.3 L403.2,364.9 L404.0,366.5 L404.8,368.1 L405.7,369.7 L406.6,371.4 L407.6,373.0" stroke="#808080" stroke-opacity="0.42" stroke-width="1.39" stroke-dasharray="1.39 2.29"/>
<path d="M748.5,103.5 L749.4,103.9 L750.3,104.2 L751.1,104.6 L751.9,105.1 L752.6,105.6 L753.2,106.1 L753.8,106.6 L754.3,107.2 L754.8,107.7 L755.3,108.4 L755.7,109.0 L756.1,109.7 L756.4,110.4 L756.7,111.1 L757.0,111.8 L757.2,112.6 L757.4,113.4 L757.5,114.2 L757.7,115.0 L757.8,115.8 L757.8,116.7 L757.9,117.6 L757.9,118.5 L757.9,119.4 L757.9,120.4 L757.8,121.3 L757.7,122.3 L757.7,123.3 L757.6,124.3 L757.4,125.3 L757.3,126.4 L757.2,127.4 L757.0,128.5 L756.8,129.6 L756.6,130.7 L756.4,131.8 L756.2,132.9 L756.0,134.1 L755.8,135.2 L755.5,136.3 L755.3,137.5 L755.0,138.7 L754.8,139.9 L754.5,141.1 L754.3,142.3 L754.0,143.5 L753.7,144.7 L753.5,145.9 L753.2,147.2 L752.9,148.4 L752.6,149.7 L752.3,150.9 L752.1,152.2 L751.8,153.5 L751.5,154.8 L751.2,156.1 L750.9,157.4 L750.6,158.7 L750.4,160.0 L750.1,161.3 L749.8,162.6 L749.6,163.9 L749.3,165.3 L749.0,166.6 L748.8,168.0 L748.5,169.3 L748.2,170.7 L748.0,172.0 L747.8,173.4 L747.5,174.7 L747.3,176.1 L747.0,177.5 L746.8,178.9 L746.6,180.2 L746.4,181.6 L746.2,183.0 L746.0,184.4 L745.8,185.8 L745.6,187.2 L745.4,188.6 L745.2,190.0 L745.1,191.4 L744.9,192.8 L744.7,194.2 L744.6,195.7 L744.4,197.1 L744.3,198.5 L744.2,199.9 L744.1,201.3 L744.0,202.8 L743.9,204.2 L743.8,205.6 L743.7,207.1 L743.6,208.5 L743.5,210.0 L743.5,211.4 L743.4,212.9 L743.4,214.3 L743.3,215.8 L743.3,217.2 L743.3,218.7 L743.3,220.1 L743.3,221.6 L743.3,223.0 L743.3,224.5 L743.3,226.0 L743.3,227.4 L743.4,228.9 L743.4,230.3 L743.5,231.8 L743.6,233.3 L743.6,234.8 L743.7,236.2 L743.8,237.7 L743.9,239.2 L744.0,240.6 L744.2,242.1 L744.3,243.6 L744.5,245.1 L744.6,246.6 L744.8,248.0 L744.9,249.5 L745.1,251.0 L745.3,252.5 L745.5,254.0 L745.7,255.5 L746.0,257.0 L746.2,258.4 L746.4,259.9 L746.7,261.4 L747.0,262.9 L747.2,264.4 L747.5,265.9 L747.8,267.4 L748.1,268.9 L748.4,270.4 L748.7,271.9 L749.1,273.4 L749.4,274.9 L749.7,276.4 L750.1,277.8 L750.5,279.3 L750.8,280.8 L751.2,282.3 L751.6,283.8 L752.0,285.3 L752.5,286.8 L752.9,288.3 L753.3,289.8 L753.8,291.3 L754.2,292.8 L754.7,294.3 L755.2,295.8 L755.6,297.3 L756.1,298.8 L756.6,300.4 L757.1,301.9 L757.7,303.4 L758.2,304.9 L758.7,306.4 L759.3,307.9 L759.9,309.4 L760.4,310.9 L761.0,312.4 L761.6,313.9 L762.2,315.4 L762.8,316.9 L763.4,318.4 L764.0,319.9 L764.7,321.4 L765.3,322.9 L765.9,324.4 L766.6,325.9 L767.3,327.4 L767.9,328.9 L768.6,330.4 L769.3,331.9 L770.0,333.4 L770.7,334.9 L771.5,336.4 L772.2,337.9 L772.9,339.4 L773.7,341.0 L774.4,342.5 L775.2,344.0 L776.0,345.5 L776.7,347.0 L777.5,348.5 L778.3,350.0 L779.1,351.5 L779.9,353.0 L780.7,354.5 L781.6,356.0 L782.4,357.5 L783.3,359.0 L784.1,360.5 L785.0,362.0 L785.8,363.5 L786.7,364.9 L787.6,366.4 L788.5,367.9 L789.4,369.4 L790.3,370.9 L791.2,372.4 L792.1,373.9 L793.0,375.4 L793.9,376.9 L794.9,378.4 L795.8,379.9 L796.8,381.4 L797.7,382.9 L798.7,384.3 L799.6,385.8 L800.6,387.3" stroke="#808080" stroke-opacity="0.42" stroke-width="1.39" stroke-dasharray="1.39 2.29"/>
<path d="M679.6,138.9 L679.3,139.8 L679.0,140.8 L678.6,141.8 L678.2,142.7 L677.9,143.7 L677.5,144.7 L677.1,145.8 L676.7,146.8 L676.2,147.8 L675.8,148.9 L675.3,149.9 L674.9,151.0 L674.4,152.1 L673.9,153.2 L673.4,154.3 L672.9,155.4 L672.4,156.5 L671.9,157.7 L671.4,158.8 L670.9,159.9 L670.4,161.1 L669.9,162.3 L669.4,163.4 L668.9,164.6 L668.3,165.8 L667.8,167.0 L667.3,168.2 L666.8,169.4 L666.3,170.6 L665.7,171.8 L665.2,173.1 L664.7,174.3 L664.2,175.5 L663.7,176.8 L663.2,178.0 L662.7,179.3 L662.2,180.6 L661.7,181.8 L661.2,183.1 L660.7,184.4 L660.3,185.7 L659.8,187.0 L659.3,188.3 L658.9,189.6 L658.4,190.9 L658.0,192.2 L657.5,193.5 L657.1,194.8 L656.7,196.1 L656.3,197.4 L655.9,198.8 L655.5,200.1 L655.1,201.4 L654.7,202.8 L654.4,204.1 L654.0,205.4 L653.7,206.8 L653.3,208.1 L653.0,209.5 L652.7,210.9 L652.4,212.2 L652.1,213.6 L651.8,214.9 L651.6,216.3 L651.3,217.7 L651.0,219.0 L650.8,220.4 L650.6,221.8 L650.4,223.2 L650.2,224.6 L650.0,226.0 L649.8,227.3 L649.6,228.7 L649.5,230.1 L649.4,231.5 L649.2,232.9 L649.1,234.3 L649.0,235.7 L648.9,237.1 L648.9,238.5 L648.8,239.9 L648.7,241.3 L648.7,242.7 L648.7,244.1 L648.7,245.5 L648.7,247.0 L648.7,248.4 L648.7,249.8 L648.8,251.2 L648.9,252.6 L648.9,254.0 L649.0,255.5 L649.1,256.9 L649.2,258.3 L649.4,259.7 L649.5,261.2 L649.7,262.6 L649.9,264.0 L650.1,265.4 L650.3,266.9 L650.5,268.3 L650.7,269.7 L651.0,271.2 L651.2,272.6 L651.5,274.0 L651.8,275.5 L652.1,276.9 L652.4,278.3 L652.8,279.8 L653.1,281.2 L653.5,282.7 L653.8,284.1 L654.2,285.5 L654.7,287.0 L655.1,288.4 L655.5,289.9 L656.0,291.3 L656.4,292.8 L656.9,294.2 L657.4,295.6 L657.9,297.1 L658.4,298.5 L659.0,300.0 L659.5,301.4 L660.1,302.9 L660.7,304.3 L661.3,305.8 L661.9,307.2 L662.5,308.6 L663.2,310.1 L663.8,311.5 L664.5,313.0 L665.2,314.4 L665.9,315.9 L666.6,317.3 L667.3,318.8 L668.1,320.2 L668.8,321.7 L669.6,323.1 L670.4,324.6 L671.2,326.0 L672.0,327.5 L672.8,328.9 L673.7,330.4 L674.5,331.8 L675.4,333.3 L676.3,334.7 L677.2,336.1 L678.1,337.6 L679.0,339.0 L679.9,340.5 L680.9,341.9 L681.8,343.4 L682.8,344.8 L683.8,346.3 L684.8,347.7 L685.8,349.1 L686.8,350.6 L687.9,352.0 L688.9,353.5 L690.0,354.9 L691.1,356.4 L692.2,357.8 L693.3,359.2 L694.4,360.7 L695.5,362.1 L696.7,363.5 L697.8,365.0 L699.0,366.4 L700.1,367.9 L701.3,369.3 L702.5,370.7 L703.7,372.2 L705.0,373.6 L706.2,375.0 L707.4,376.4 L708.7,377.9 L710.0,379.3 L711.2,380.7 L712.5,382.2 L713.8,383.6 L715.1,385.0 L716.5,386.4 L717.8,387.8 L719.1,389.3 L720.5,390.7 L721.8,392.1 L723.2,393.5 L724.6,394.9 L726.0,396.3 L727.4,397.7 L728.8,399.2 L730.2,400.6 L731.6,402.0 L733.1,403.4 L734.5,404.8 L736.0,406.2 L737.4,407.6 L738.9,409.0 L740.4,410.4 L741.9,411.7 L743.3,413.1 L744.8,414.5 L746.4,415.9 L747.9,417.3" stroke="#808080" stroke-opacity="0.42" stroke-width="1.39" stroke-dasharray="1.39 2.29"/>
<path d="M776.3,118.6 L774.5,118.8 L772.6,119.0 L770.7,119.2 L768.7,119.4 L766.7,119.7 L764.7,120.0 L762.7,120.4 L760.6,120.7 L758.5,121.1 L756.3,121.5 L754.1,121.9 L751.9,122.4 L749.7,122.8 L747.4,123.3 L745.1,123.9 L742.7,124.4 L740.3,125.0 L737.9,125.6 L735.5,126.2 L733.0,126.8 L730.5,127.4 L728.0,128.1 L725.4,128.8 L722.8,129.5 L720.2,130.2 L717.6,131.0 L714.9,131.7 L712.2,132.5 L709.5,133.3 L706.7,134.1 L704.0,135.0 L701.2,135.8 L698.4,136.7 L695.5,137.6 L692.7,138.5 L689.8,139.4 L686.9,140.3 L684.0,141.2 L681.1,142.2 L678.2,143.2 L675.2,144.1 L672.2,145.1 L669.2,146.1 L666.2,147.1 L663.2,148.2 L660.2,149.2 L657.2,150.3 L654.1,151.3 L651.1,152.4 L648.0,153.5 L644.9,154.6 L641.8,155.7 L638.8,156.8 L635.7,157.9 L632.6,159.0 L629.5,160.1 L626.3,161.3 L623.2,162.4 L620.1,163.6 L617.0,164.8 L613.9,166.0 L610.8,167.1 L607.6,168.3 L604.5,169.5 L601.4,170.7 L598.3,171.9 L595.2,173.2 L592.1,174.4 L588.9,175.6 L585.8,176.9 L582.7,178.1 L579.6,179.3 L576.5,180.6 L573.5,181.9 L570.4,183.1 L567.3,184.4 L564.2,185.7 L561.2,186.9 L558.1,188.2 L555.1,189.5 L552.1,190.8 L549.1,192.1 L546.0,193.4 L543.0,194.7 L540.1,196.0 L537.1,197.3 L534.1,198.7 L531.2,200.0 L528.2,201.3 L525.3,202.6 L522.4,204.0 L519.5,205.3 L516.6,206.7 L513.8,208.0 L510.9,209.3 L508.1,210.7 L505.3,212.0 L502.5,213.4 L499.7,214.8 L496.9,216.1 L494.2,217.5 L491.5,218.8 L488.7,220.2 L486.1,221.6 L483.4,223.0 L480.7,224.3 L478.1,225.7 L475.5,227.1 L472.9,228.5 L470.3,229.9 L467.8,231.2 L465.3,232.6 L462.8,234.0 L460.3,235.4 L457.8,236.8 L455.4,238.2 L453.0,239.6 L450.6,241.0 L448.2,242.4 L445.9,243.8 L443.5,245.2 L441.3,246.6 L439.0,248.0 L436.7,249.4 L434.5,250.9 L432.3,252.3 L430.2,253.7 L428.0,255.1 L425.9,256.5 L423.8,257.9 L421.7,259.4 L419.7,260.8 L417.7,262.2 L415.7,263.6 L413.8,265.0 L411.8,266.5 L409.9,267.9 L408.1,269.3 L406.2,270.7 L404.4,272.2 L402.6,273.6 L400.9,275.0 L399.2,276.5 L397.5,277.9 L395.8,279.3 L394.1,280.8 L392.5,282.2 L391.0,283.6 L389.4,285.1 L387.9,286.5 L386.4,287.9 L384.9,289.4 L383.5,290.8 L382.1,292.3 L380.7,293.7 L379.4,295.1 L378.1,296.6 L376.8,298.0 L375.6,299.5 L374.4,300.9 L373.2,302.3 L372.0,303.8 L370.9,305.2 L369.8,306.7 L368.8,308.1 L367.8,309.5 L366.8,311.0 L365.8,312.4 L364.9,313.9 L364.0,315.3 L363.1,316.8 L362.3,318.2 L361.5,319.6 L360.8,321.1 L360.0,322.5 L359.3,324.0 L358.7,325.4 L358.0,326.9 L357.4,328.3 L356.9,329.7 L356.3,331.2 L355.8,332.6 L355.3,334.1 L354.9,335.5 L354.5,337.0 L354.1,338.4 L353.8,339.8 L353.5,341.3 L353.2,342.7 L353.0,344.2 L352.8,345.6" stroke="#808080" stroke-opacity="0.42" stroke-width="1.39" stroke-dasharray="1.39 2.29"/>
<path d="M720.7,153.0 L718.2,154.5 L715.8,156.0 L713.3,157.5 L710.9,159.0 L708.4,160.5 L706.0,162.0 L703.6,163.6 L701.2,165.1 L698.8,166.6 L696.4,168.1 L694.0,169.6 L691.6,171.2 L689.3,172.7 L687.0,174.2 L684.6,175.8 L682.3,177.3 L680.0,178.8 L677.7,180.4 L675.5,181.9 L673.2,183.4 L671.0,185.0 L668.7,186.5 L666.5,188.1 L664.3,189.6 L662.1,191.1 L659.9,192.7 L657.8,194.2 L655.7,195.8 L653.5,197.3 L651.4,198.9 L649.3,200.4 L647.3,202.0 L645.2,203.5 L643.2,205.1 L641.1,206.7 L639.1,208.2 L637.1,209.8 L635.2,211.3 L633.2,212.9 L631.3,214.4 L629.3,216.0 L627.5,217.6 L625.6,219.1 L623.7,220.7 L621.9,222.3 L620.0,223.8 L618.2,225.4 L616.5,227.0 L614.7,228.5 L612.9,230.1 L611.2,231.7 L609.5,233.2 L607.8,234.8 L606.2,236.4 L604.5,237.9 L602.9,239.5 L601.3,241.1 L599.7,242.6 L598.2,244.2 L596.6,245.8 L595.1,247.4 L593.6,248.9 L592.1,250.5 L590.7,252.1 L589.2,253.6 L587.8,255.2 L586.4,256.8 L585.1,258.4 L583.7,259.9 L582.4,261.5 L581.1,263.1 L579.9,264.7 L578.6,266.3 L577.4,267.8 L576.2,269.4 L575.0,271.0 L573.8,272.6 L572.7,274.1 L571.6,275.7 L570.5,277.3 L569.4,278.9 L568.4,280.5 L567.4,282.0 L566.4,283.6 L565.4,285.2 L564.5,286.8 L563.6,288.4 L562.7,289.9 L561.8,291.5 L561.0,293.1 L560.1,294.7 L559.3,296.3 L558.6,297.8 L557.8,299.4 L557.1,301.0 L556.4,302.6 L555.7,304.2 L555.1,305.7 L554.5,307.3 L553.9,308.9 L553.3,310.5 L552.7,312.1 L552.2,313.6 L551.7,315.2 L551.2,316.8 L550.8,318.4 L550.4,320.0 L550.0,321.5 L549.6,323.1 L549.3,324.7 L548.9,326.3 L548.6,327.9 L548.4,329.5 L548.1,331.0 L547.9,332.6 L547.7,334.2 L547.6,335.8 L547.4,337.4 L547.3,338.9 L547.2,340.5 L547.1,342.1 L547.1,343.7 L547.1,345.3 L547.1,346.8 L547.1,348.4 L547.2,350.0 L547.3,351.6 L547.4,353.2 L547.5,354.7 L547.7,356.3 L547.9,357.9 L548.1,359.5 L548.3,361.1 L548.6,362.6 L548.9,364.2 L549.2,365.8 L549.6,367.4 L549.9,369.0 L550.3,370.5 L550.7,372.1 L551.2,373.7 L551.6,375.3 L552.1,376.8 L552.6,378.4 L553.2,380.0 L553.7,381.6 L554.3,383.1 L555.0,384.7 L555.6,386.3 L556.3,387.9 L556.9,389.4 L557.7,391.0 L558.4,392.6 L559.2,394.2 L559.9,395.7 L560.8,397.3 L561.6,398.9 L562.4,400.4 L563.3,402.0 L564.2,403.6 L565.2,405.2 L566.1,406.7 L567.1,408.3 L568.1,409.9 L569.1,411.4 L570.1,413.0 L571.2,414.6 L572.3,416.1 L573.4,417.7 L574.6,419.3 L575.7,420.8 L576.9,422.4 L578.1,423.9 L579.3,425.5 L580.6,427.1" stroke="#808080" stroke-opacity="0.42" stroke-width="1.39" stroke-dasharray="1.39 2.29"/>
<path d="M690.2,185.8 L691.6,186.0 L693.0,186.3 L694.3,186.5 L695.7,186.8 L697.0,187.1 L698.3,187.4 L699.7,187.7 L701.0,188.0 L702.3,188.3 L703.6,188.6 L704.8,189.0 L706.1,189.3 L707.4,189.7 L708.6,190.1 L709.8,190.5 L711.1,190.9 L712.3,191.3 L713.5,191.8 L714.7,192.2 L715.9,192.6 L717.1,193.1 L718.3,193.6 L719.5,194.1 L720.6,194.6 L721.8,195.1 L722.9,195.6 L724.1,196.1 L725.2,196.6 L726.4,197.2 L727.5,197.7 L728.6,198.3 L729.7,198.9 L730.8,199.4 L732.0,200.0 L733.1,200.6 L734.2,201.2 L735.3,201.9 L736.3,202.5 L737.4,203.1 L738.5,203.8 L739.6,204.4 L740.7,205.1 L741.7,205.8 L742.8,206.4 L743.9,207.1 L745.0,207.8 L746.0,208.5 L747.1,209.3 L748.1,210.0 L749.2,210.7 L750.2,211.4 L751.3,212.2 L752.4,212.9 L753.4,213.7 L754.5,214.5 L755.5,215.2 L756.5,216.0 L757.6,216.8 L758.6,217.6 L759.7,218.4 L760.7,219.2 L761.8,220.0 L762.8,220.8 L763.9,221.7 L764.9,222.5 L765.9,223.3 L767.0,224.2 L768.0,225.0 L769.1,225.9 L770.1,226.7 L771.2,227.6 L772.2,228.5 L773.3,229.4 L774.3,230.2 L775.4,231.1 L776.4,232.0 L777.5,232.9 L778.5,233.8 L779.6,234.7 L780.6,235.6 L781.7,236.6 L782.8,237.5 L783.8,238.4 L784.9,239.4 L785.9,240.3 L787.0,241.2 L788.1,242.2 L789.1,243.1 L790.2,244.1 L791.3,245.0 L792.4,246.0 L793.4,247.0 L794.5,247.9 L795.6,248.9 L796.7,249.9 L797.8,250.9 L798.8,251.9 L799.9,252.8 L801.0,253.8 L802.1,254.8 L803.2,255.8 L804.3,256.8 L805.4,257.8 L806.5,258.8 L807.6,259.9 L808.7,260.9 L809.8,261.9 L810.9,262.9 L812.1,263.9 L813.2,265.0 L814.3,266.0 L815.4,267.0 L816.5,268.0 L817.7,269.1 L818.8,270.1 L819.9,271.2 L821.1,272.2 L822.2,273.2 L823.3,274.3 L824.5,275.3 L825.6,276.4 L826.7,277.4 L827.9,278.5 L829.0,279.6 L830.2,280.6 L831.3,281.7 L832.5,282.7 L833.7,283.8 L834.8,284.9 L836.0,285.9 L837.1,287.0 L838.3,288.1 L839.5,289.1 L840.6,290.2 L841.8,291.3 L843.0,292.4 L844.2,293.4 L845.3,294.5 L846.5,295.6 L847.7,296.7 L848.9,297.8 L850.1,298.8 L851.2,299.9 L852.4,301.0 L853.6,302.1 L854.8,303.2 L856.0,304.3 L857.2,305.4 L858.4,306.4 L859.6,307.5 L860.8,308.6 L862.0,309.7 L863.2,310.8 L864.4,311.9 L865.6,313.0 L866.8,314.1 L868.0,315.2 L869.2,316.3 L870.4,317.3 L871.6,318.4 L872.8,319.5 L874.1,320.6 L875.3,321.7 L876.5,322.8 L877.7,323.9 L878.9,325.0 L880.1,326.1 L881.3,327.2 L882.6,328.3" stroke="#808080" stroke-opacity="0.42" stroke-width="1.39" stroke-dasharray="1.39 2.29"/>
<path d="M867.3,88.7 L867.1,90.2 L866.9,91.7 L866.8,93.2 L866.6,94.7 L866.4,96.3 L866.2,97.8 L866.0,99.3 L865.9,100.8 L865.7,102.4 L865.5,103.9 L865.3,105.5 L865.2,107.0 L865.0,108.6 L864.8,110.1 L864.6,111.7 L864.5,113.2 L864.3,114.8 L864.1,116.4 L864.0,117.9 L863.8,119.5 L863.6,121.1 L863.5,122.7 L863.3,124.2 L863.2,125.8 L863.0,127.4 L862.9,129.0 L862.7,130.5 L862.6,132.1 L862.4,133.7 L862.3,135.3 L862.1,136.9 L862.0,138.5 L861.9,140.1 L861.7,141.6 L861.6,143.2 L861.5,144.8 L861.4,146.4 L861.2,148.0 L861.1,149.6 L861.0,151.2 L860.9,152.8 L860.8,154.4 L860.7,156.0 L860.6,157.6 L860.5,159.2 L860.4,160.8 L860.3,162.4 L860.2,164.0 L860.1,165.6 L860.0,167.2 L859.9,168.8 L859.9,170.4 L859.8,172.0 L859.7,173.6 L859.6,175.2 L859.6,176.8 L859.5,178.4 L859.5,180.0 L859.4,181.6 L859.3,183.2 L859.3,184.8 L859.2,186.5 L859.2,188.1 L859.2,189.7 L859.1,191.3 L859.1,192.9 L859.0,194.5 L859.0,196.1 L859.0,197.7 L859.0,199.3 L858.9,200.9 L858.9,202.5 L858.9,204.2 L858.9,205.8 L858.9,207.4 L858.9,209.0 L858.9,210.6 L858.9,212.2 L858.9,213.8 L858.9,215.4 L858.9,217.1 L858.9,218.7 L858.9,220.3 L859.0,221.9 L859.0,223.5 L859.0,225.1 L859.1,226.7 L859.1,228.3 L859.1,230.0 L859.2,231.6 L859.2,233.2 L859.3,234.8 L859.3,236.4 L859.4,238.0 L859.4,239.6 L859.5,241.3 L859.5,242.9 L859.6,244.5 L859.7,246.1 L859.7,247.7 L859.8,249.3 L859.9,251.0 L860.0,252.6 L860.1,254.2 L860.2,255.8 L860.3,257.4 L860.3,259.0 L860.4,260.6 L860.5,262.3 L860.7,263.9 L860.8,265.5 L860.9,267.1 L861.0,268.7 L861.1,270.3 L861.2,272.0 L861.3,273.6 L861.5,275.2 L861.6,276.8 L861.7,278.4 L861.9,280.1 L862.0,281.7 L862.1,283.3 L862.3,284.9 L862.4,286.5 L862.6,288.1 L862.7,289.8 L862.9,291.4 L863.1,293.0 L863.2,294.6 L863.4,296.2 L863.6,297.8 L863.7,299.5 L863.9,301.1 L864.1,302.7 L864.3,304.3 L864.4,305.9 L864.6,307.5 L864.8,309.2 L865.0,310.8 L865.2,312.4 L865.4,314.0 L865.6,315.6 L865.8,317.3 L866.0,318.9 L866.2,320.5 L866.4,322.1 L866.6,323.7 L866.8,325.3 L867.1,327.0 L867.3,328.6 L867.5,330.2 L867.7,331.8 L868.0,333.4 L868.2,335.1 L868.4,336.7 L868.7,338.3 L868.9,339.9 L869.1,341.5 L869.4,343.1 L869.6,344.8 L869.9,346.4 L870.1,348.0 L870.4,349.6 L870.6,351.2 L870.9,352.8 L871.2,354.5 L871.4,356.1 L871.7,357.7 L872.0,359.3 L872.2,360.9 L872.5,362.5 L872.8,364.2 L873.1,365.8 L873.3,367.4 L873.6,369.0 L873.9,370.6 L874.2,372.3 L874.5,373.9 L874.8,375.5 L875.1,377.1 L875.4,378.7 L875.7,380.3 L876.0,381.9 L876.3,383.6 L876.6,385.2 L876.9,386.8 L877.2,388.4 L877.5,390.0 L877.8,391.6 L878.1,393.3 L878.4,394.9 L878.7,396.5 L879.0,398.1 L879.4,399.7 L879.7,401.3 L880.0,403.0 L880.3,404.6 L880.6,406.2 L881.0,407.8 L881.3,409.4 L881.6,411.0 L882.0,412.6 L882.3,414.3 L882.6,415.9 L883.0,417.5 L883.3,419.1 L883.6,420.7 L884.0,422.3 L884.3,423.9 L884.7,425.5 L885.0,427.2 L885.4,428.8 L885.7,430.4 L886.1,432.0 L886.4,433.6" stroke="#808080" stroke-opacity="0.42" stroke-width="1.39" stroke-dasharray="1.39 2.29"/>
<path d="M881.3,63.3 L879.4,64.0 L877.5,64.7 L875.5,65.4 L873.5,66.3 L871.5,67.1 L869.4,68.0 L867.3,69.0 L865.2,70.0 L863.0,71.1 L860.8,72.1 L858.6,73.2 L856.3,74.4 L854.0,75.5 L851.7,76.7 L849.4,77.9 L847.1,79.2 L844.7,80.4 L842.3,81.7 L839.9,83.0 L837.5,84.3 L835.1,85.7 L832.6,87.0 L830.2,88.4 L827.7,89.7 L825.2,91.1 L822.8,92.5 L820.3,93.9 L817.8,95.3 L815.3,96.8 L812.8,98.2 L810.2,99.6 L807.7,101.1 L805.2,102.5 L802.7,104.0 L800.2,105.5 L797.6,106.9 L795.1,108.4 L792.6,109.9 L790.1,111.4 L787.5,112.9 L785.0,114.4 L782.5,115.9 L780.0,117.4 L777.5,118.9 L774.9,120.4 L772.4,121.9 L769.9,123.5 L767.4,125.0 L764.9,126.5 L762.5,128.0 L760.0,129.6 L757.5,131.1 L755.0,132.6 L752.6,134.2 L750.1,135.7 L747.7,137.3 L745.2,138.8 L742.8,140.4 L740.4,141.9 L738.0,143.5 L735.6,145.0 L733.2,146.6 L730.8,148.2 L728.4,149.7 L726.0,151.3 L723.7,152.8 L721.3,154.4 L719.0,156.0 L716.7,157.6 L714.4,159.1 L712.1,160.7 L709.8,162.3 L707.5,163.8 L705.3,165.4 L703.0,167.0 L700.8,168.6 L698.6,170.1 L696.4,171.7 L694.2,173.3 L692.0,174.9 L689.8,176.5 L687.7,178.0 L685.5,179.6 L683.4,181.2 L681.3,182.8 L679.2,184.4 L677.1,186.0 L675.1,187.6 L673.0,189.1 L671.0,190.7 L669.0,192.3 L667.0,193.9 L665.0,195.5 L663.1,197.1 L661.1,198.7 L659.2,200.3 L657.3,201.9 L655.4,203.4 L653.5,205.0 L651.6,206.6 L649.8,208.2 L648.0,209.8 L646.2,211.4 L644.4,213.0 L642.6,214.6 L640.9,216.2 L639.1,217.8 L637.4,219.4 L635.7,221.0 L634.1,222.6 L632.4,224.2 L630.8,225.8 L629.2,227.4 L627.6,229.0 L626.0,230.6 L624.4,232.2 L622.9,233.8 L621.4,235.4 L619.9,237.0 L618.4,238.6 L617.0,240.2 L615.6,241.8 L614.1,243.4 L612.8,245.0 L611.4,246.6 L610.0,248.2 L608.7,249.8 L607.4,251.4 L606.1,253.0 L604.9,254.6 L603.6,256.2 L602.4,257.8 L601.2,259.4 L600.0,261.0 L598.9,262.6 L597.8,264.2 L596.7,265.8 L595.6,267.4 L594.5,269.0 L593.5,270.6 L592.5,272.2 L591.5,273.8 L590.5,275.4 L589.6,277.0 L588.7,278.7 L587.8,280.3 L586.9,281.9 L586.0,283.5 L585.2,285.1 L584.4,286.7 L583.6,288.3 L582.9,289.9 L582.1,291.5 L581.4,293.1 L580.7,294.7 L580.1,296.3 L579.4,297.9 L578.8,299.5 L578.2,301.1 L577.6,302.7 L577.1,304.3 L576.6,305.9 L576.1,307.5 L575.6,309.2 L575.2,310.8 L574.8,312.4 L574.4,314.0 L574.0,315.6 L573.6,317.2 L573.3,318.8 L573.0,320.4 L572.7,322.0 L572.5,323.6 L572.3,325.2 L572.1,326.8 L571.9,328.4 L571.7,330.0 L571.6,331.6 L571.5,333.2 L571.4,334.9 L571.4,336.5 L571.3,338.1" stroke="#808080" stroke-opacity="0.42" stroke-width="1.39" stroke-dasharray="1.39 2.29"/>
<path d="M928.0,82.7 L927.8,84.1 L927.7,85.6 L927.6,87.0 L927.4,88.5 L927.3,89.9 L927.1,91.4 L927.0,92.9 L926.9,94.4 L926.7,95.9 L926.6,97.4 L926.4,98.9 L926.3,100.4 L926.2,101.9 L926.0,103.4 L925.9,104.9 L925.8,106.5 L925.6,108.0 L925.5,109.5 L925.4,111.1 L925.2,112.6 L925.1,114.2 L924.9,115.7 L924.8,117.3 L924.6,118.8 L924.5,120.4 L924.4,121.9 L924.2,123.5 L924.1,125.1 L923.9,126.6 L923.8,128.2 L923.6,129.8 L923.5,131.3 L923.3,132.9 L923.2,134.5 L923.0,136.0 L922.8,137.6 L922.7,139.2 L922.5,140.8 L922.4,142.4 L922.2,143.9 L922.0,145.5 L921.9,147.1 L921.7,148.7 L921.5,150.3 L921.4,151.9 L921.2,153.5 L921.0,155.0 L920.9,156.6 L920.7,158.2 L920.5,159.8 L920.3,161.4 L920.2,163.0 L920.0,164.6 L919.8,166.2 L919.6,167.8 L919.4,169.4 L919.3,171.0 L919.1,172.6 L918.9,174.2 L918.7,175.8 L918.5,177.4 L918.3,179.0 L918.1,180.6 L917.9,182.2 L917.8,183.8 L917.6,185.4 L917.4,187.0 L917.2,188.6 L917.0,190.2 L916.8,191.8 L916.6,193.4 L916.4,195.0 L916.2,196.6 L916.0,198.2 L915.8,199.8 L915.6,201.4 L915.4,203.0 L915.2,204.6 L915.0,206.2 L914.8,207.8 L914.5,209.4 L914.3,211.0 L914.1,212.7 L913.9,214.3 L913.7,215.9 L913.5,217.5 L913.3,219.1 L913.1,220.7 L912.8,222.3 L912.6,223.9 L912.4,225.5 L912.2,227.1 L912.0,228.7 L911.8,230.4 L911.5,232.0 L911.3,233.6 L911.1,235.2 L910.9,236.8 L910.7,238.4 L910.4,240.0 L910.2,241.6 L910.0,243.2 L909.8,244.9 L909.5,246.5 L909.3,248.1 L909.1,249.7 L908.9,251.3 L908.6,252.9 L908.4,254.5 L908.2,256.1 L907.9,257.7 L907.7,259.4 L907.5,261.0 L907.3,262.6 L907.0,264.2 L906.8,265.8 L906.6,267.4 L906.3,269.0 L906.1,270.7 L905.9,272.3 L905.6,273.9 L905.4,275.5 L905.2,277.1 L904.9,278.7 L904.7,280.3 L904.5,281.9 L904.2,283.6 L904.0,285.2 L903.8,286.8 L903.5,288.4 L903.3,290.0 L903.1,291.6 L902.8,293.2 L902.6,294.9 L902.4,296.5 L902.1,298.1 L901.9,299.7 L901.7,301.3 L901.4,302.9 L901.2,304.5 L901.0,306.2 L900.7,307.8 L900.5,309.4 L900.3,311.0 L900.0,312.6 L899.8,314.2 L899.6,315.9 L899.3,317.5 L899.1,319.1 L898.9,320.7 L898.6,322.3 L898.4,323.9 L898.2,325.5 L898.0,327.2 L897.7,328.8 L897.5,330.4 L897.3,332.0 L897.0,333.6 L896.8,335.2 L896.6,336.8 L896.3,338.5 L896.1,340.1 L895.9,341.7 L895.7,343.3 L895.4,344.9 L895.2,346.5 L895.0,348.1 L894.8,349.8 L894.5,351.4 L894.3,353.0 L894.1,354.6 L893.9,356.2 L893.6,357.8 L893.4,359.4 L893.2,361.1 L893.0,362.7 L892.8,364.3 L892.5,365.9 L892.3,367.5 L892.1,369.1 L891.9,370.7 L891.7,372.4 L891.5,374.0 L891.3,375.6 L891.0,377.2 L890.8,378.8 L890.6,380.4 L890.4,382.0 L890.2,383.6 L890.0,385.3 L889.8,386.9 L889.6,388.5 L889.4,390.1 L889.2,391.7 L889.0,393.3 L888.8,394.9 L888.6,396.5 L888.4,398.2 L888.2,399.8 L888.0,401.4 L887.8,403.0 L887.6,404.6 L887.4,406.2 L887.2,407.8 L887.0,409.4 L886.8,411.0 L886.6,412.6 L886.4,414.3 L886.2,415.9 L886.0,417.5 L885.8,419.1 L885.7,420.7 L885.5,422.3 L885.3,423.9 L885.1,425.5 L884.9,427.1 L884.7,428.7 L884.6,430.3 L884.4,432.0 L884.2,433.6 L884.0,435.2" stroke="#808080" stroke-opacity="0.42" stroke-width="1.39" stroke-dasharray="1.39 2.29"/>
<path d="M904.0,91.3 L905.3,92.3 L906.7,93.3 L908.0,94.3 L909.4,95.3 L910.7,96.4 L912.1,97.5 L913.5,98.6 L914.8,99.7 L916.2,100.8 L917.5,102.0 L918.9,103.2 L920.3,104.4 L921.7,105.6 L923.0,106.8 L924.4,108.0 L925.8,109.3 L927.2,110.5 L928.6,111.8 L929.9,113.1 L931.3,114.4 L932.7,115.7 L934.1,117.0 L935.5,118.3 L936.9,119.7 L938.3,121.0 L939.7,122.4 L941.1,123.7 L942.5,125.1 L943.9,126.5 L945.3,127.8 L946.7,129.2 L948.1,130.6 L949.5,132.0 L950.9,133.4 L952.3,134.8 L953.7,136.2 L955.1,137.7 L956.5,139.1 L957.9,140.5 L959.3,142.0 L960.7,143.4 L962.1,144.8 L963.5,146.3 L964.8,147.8 L966.2,149.2 L967.6,150.7 L969.0,152.1 L970.4,153.6 L971.7,155.1 L973.1,156.6 L974.5,158.0 L975.9,159.5 L977.2,161.0 L978.6,162.5 L979.9,164.0 L981.3,165.5 L982.6,167.0 L984.0,168.5 L985.3,170.0 L986.7,171.5 L988.0,173.0 L989.3,174.5 L990.6,176.0 L992.0,177.5 L993.3,179.0 L994.6,180.5 L995.9,182.0 L997.2,183.5 L998.5,185.1 L999.8,186.6 L1001.0,188.1 L1002.3,189.6 L1003.6,191.2 L1004.8,192.7 L1006.1,194.2 L1007.4,195.7 L1008.6,197.3 L1009.8,198.8 L1011.1,200.3 L1012.3,201.9 L1013.5,203.4 L1014.7,205.0 L1015.9,206.5 L1017.1,208.0 L1018.3,209.6 L1019.5,211.1 L1020.6,212.7 L1021.8,214.2 L1023.0,215.7 L1024.1,217.3 L1025.3,218.8 L1026.4,220.4 L1027.5,221.9 L1028.6,223.5 L1029.7,225.0 L1030.8,226.6 L1031.9,228.1 L1033.0,229.7 L1034.1,231.2 L1035.1,232.8 L1036.2,234.3 L1037.2,235.9 L1038.3,237.5 L1039.3,239.0 L1040.3,240.6 L1041.3,242.1 L1042.3,243.7 L1043.3,245.2 L1044.3,246.8 L1045.3,248.4 L1046.2,249.9 L1047.2,251.5 L1048.1,253.0 L1049.1,254.6 L1050.0,256.2 L1050.9,257.7 L1051.8,259.3 L1052.7,260.9 L1053.6,262.4 L1054.4,264.0 L1055.3,265.6 L1056.1,267.1 L1057.0,268.7 L1057.8,270.2 L1058.6,271.8 L1059.4,273.4 L1060.2,274.9 L1061.0,276.5 L1061.7,278.1 L1062.5,279.6 L1063.3,281.2 L1064.0,282.8 L1064.7,284.3 L1065.4,285.9 L1066.1,287.5 L1066.8,289.1 L1067.5,290.6 L1068.2,292.2 L1068.8,293.8 L1069.5,295.3 L1070.1,296.9 L1070.7,298.5 L1071.3,300.0 L1071.9,301.6 L1072.5,303.2 L1073.1,304.7 L1073.6,306.3 L1074.2,307.9 L1074.7,309.5 L1075.2,311.0 L1075.7,312.6 L1076.2,314.2 L1076.7,315.7 L1077.2,317.3 L1077.7,318.9 L1078.1,320.4 L1078.6,322.0 L1079.0,323.6 L1079.4,325.2 L1079.8,326.7 L1080.2,328.3 L1080.5,329.9 L1080.9,331.4 L1081.3,333.0 L1081.6,334.6 L1081.9,336.1 L1082.2,337.7 L1082.5,339.3 L1082.8,340.9 L1083.1,342.4 L1083.3,344.0 L1083.6,345.6 L1083.8,347.1 L1084.0,348.7 L1084.2,350.3" stroke="#808080" stroke-opacity="0.42" stroke-width="1.39" stroke-dasharray="1.39 2.29"/>
<path d="M919.3,147.3 L920.2,148.8 L921.1,150.3 L921.9,151.7 L922.8,153.2 L923.7,154.7 L924.5,156.2 L925.4,157.7 L926.3,159.2 L927.1,160.7 L928.0,162.2 L928.9,163.7 L929.7,165.2 L930.6,166.7 L931.5,168.2 L932.3,169.8 L933.2,171.3 L934.0,172.8 L934.9,174.3 L935.8,175.8 L936.6,177.4 L937.4,178.9 L938.3,180.4 L939.1,181.9 L940.0,183.5 L940.8,185.0 L941.7,186.5 L942.5,188.1 L943.3,189.6 L944.2,191.2 L945.0,192.7 L945.8,194.2 L946.6,195.8 L947.5,197.3 L948.3,198.9 L949.1,200.4 L949.9,202.0 L950.7,203.5 L951.5,205.1 L952.3,206.6 L953.1,208.2 L953.9,209.7 L954.7,211.3 L955.5,212.8 L956.3,214.4 L957.0,215.9 L957.8,217.5 L958.6,219.0 L959.4,220.6 L960.1,222.1 L960.9,223.7 L961.6,225.3 L962.4,226.8 L963.2,228.4 L963.9,229.9 L964.6,231.5 L965.4,233.1 L966.1,234.6 L966.8,236.2 L967.6,237.8 L968.3,239.3 L969.0,240.9 L969.7,242.5 L970.4,244.0 L971.1,245.6 L971.8,247.2 L972.5,248.7 L973.2,250.3 L973.9,251.9 L974.5,253.4 L975.2,255.0 L975.9,256.6 L976.5,258.1 L977.2,259.7 L977.8,261.3 L978.5,262.9 L979.1,264.4 L979.8,266.0 L980.4,267.6 L981.0,269.2 L981.6,270.7 L982.2,272.3 L982.9,273.9 L983.5,275.4 L984.0,277.0 L984.6,278.6 L985.2,280.2 L985.8,281.7 L986.4,283.3 L986.9,284.9 L987.5,286.5 L988.0,288.0 L988.6,289.6 L989.1,291.2 L989.7,292.8 L990.2,294.3 L990.7,295.9 L991.2,297.5 L991.7,299.1 L992.2,300.7 L992.7,302.2 L993.2,303.8 L993.7,305.4 L994.2,307.0 L994.7,308.5 L995.1,310.1 L995.6,311.7 L996.0,313.3 L996.5,314.8 L996.9,316.4 L997.3,318.0 L997.8,319.6 L998.2,321.2 L998.6,322.7 L999.0,324.3 L999.4,325.9 L999.8,327.5 L1000.2,329.0 L1000.5,330.6 L1000.9,332.2 L1001.3,333.8 L1001.6,335.4 L1002.0,336.9 L1002.3,338.5 L1002.6,340.1 L1003.0,341.7 L1003.3,343.2 L1003.6,344.8 L1003.9,346.4 L1004.2,348.0 L1004.5,349.5 L1004.8,351.1 L1005.0,352.7 L1005.3,354.3 L1005.6,355.8 L1005.8,357.4 L1006.1,359.0 L1006.3,360.6 L1006.5,362.1 L1006.8,363.7 L1007.0,365.3 L1007.2,366.9 L1007.4,368.4 L1007.6,370.0 L1007.8,371.6 L1007.9,373.2 L1008.1,374.7 L1008.3,376.3 L1008.4,377.9 L1008.6,379.4 L1008.7,381.0 L1008.9,382.6 L1009.0,384.2 L1009.1,385.7 L1009.2,387.3 L1009.3,388.9 L1009.4,390.4 L1009.5,392.0" stroke="#808080" stroke-opacity="0.42" stroke-width="1.39" stroke-dasharray="1.39 2.29"/>
<path d="M981.3,75.3 L983.4,76.9 L985.5,78.4 L987.6,80.0 L989.7,81.6 L991.8,83.2 L993.9,84.8 L996.0,86.4 L998.0,87.9 L1000.1,89.5 L1002.2,91.1 L1004.3,92.7 L1006.3,94.3 L1008.4,95.9 L1010.5,97.5 L1012.5,99.1 L1014.6,100.7 L1016.6,102.3 L1018.6,103.9 L1020.7,105.6 L1022.7,107.2 L1024.7,108.8 L1026.7,110.4 L1028.7,112.0 L1030.7,113.6 L1032.6,115.2 L1034.6,116.8 L1036.6,118.4 L1038.5,120.0 L1040.4,121.7 L1042.4,123.3 L1044.3,124.9 L1046.2,126.5 L1048.1,128.1 L1050.0,129.7 L1051.9,131.4 L1053.7,133.0 L1055.6,134.6 L1057.4,136.2 L1059.3,137.8 L1061.1,139.4 L1062.9,141.1 L1064.7,142.7 L1066.5,144.3 L1068.3,145.9 L1070.0,147.5 L1071.8,149.2 L1073.5,150.8 L1075.2,152.4 L1077.0,154.0 L1078.7,155.6 L1080.3,157.3 L1082.0,158.9 L1083.7,160.5 L1085.3,162.1 L1087.0,163.8 L1088.6,165.4 L1090.2,167.0 L1091.8,168.6 L1093.3,170.2 L1094.9,171.9 L1096.5,173.5 L1098.0,175.1 L1099.5,176.7 L1101.0,178.4 L1102.5,180.0 L1104.0,181.6 L1105.4,183.2 L1106.9,184.9 L1108.3,186.5 L1109.7,188.1 L1111.1,189.7 L1112.5,191.4 L1113.9,193.0 L1115.2,194.6 L1116.5,196.2 L1117.9,197.9 L1119.2,199.5 L1120.4,201.1 L1121.7,202.7 L1123.0,204.4 L1124.2,206.0 L1125.4,207.6 L1126.6,209.2 L1127.8,210.9 L1129.0,212.5 L1130.1,214.1 L1131.3,215.7 L1132.4,217.4 L1133.5,219.0 L1134.5,220.6 L1135.6,222.2 L1136.6,223.9 L1137.7,225.5 L1138.7,227.1 L1139.7,228.7 L1140.6,230.4 L1141.6,232.0 L1142.5,233.6 L1143.5,235.2 L1144.4,236.9 L1145.2,238.5 L1146.1,240.1 L1146.9,241.8 L1147.8,243.4 L1148.6,245.0 L1149.4,246.6 L1150.1,248.3 L1150.9,249.9 L1151.6,251.5 L1152.3,253.1 L1153.0,254.8 L1153.7,256.4 L1154.4,258.0 L1155.0,259.6 L1155.6,261.3 L1156.2,262.9 L1156.8,264.5 L1157.3,266.2 L1157.9,267.8 L1158.4,269.4 L1158.9,271.0 L1159.4,272.7 L1159.8,274.3 L1160.3,275.9 L1160.7,277.5 L1161.1,279.2 L1161.5,280.8 L1161.9,282.4 L1162.2,284.1 L1162.5,285.7 L1162.8,287.3 L1163.1,288.9 L1163.4,290.6 L1163.6,292.2 L1163.8,293.8" stroke="#808080" stroke-opacity="0.42" stroke-width="1.39" stroke-dasharray="1.39 2.29"/>
<path d="M1023.7,116.0 L1026.0,117.6 L1028.2,119.2 L1030.5,120.8 L1032.8,122.5 L1035.0,124.1 L1037.2,125.7 L1039.5,127.3 L1041.7,128.9 L1043.9,130.6 L1046.1,132.2 L1048.2,133.8 L1050.4,135.4 L1052.6,137.0 L1054.7,138.7 L1056.9,140.3 L1059.0,141.9 L1061.1,143.5 L1063.2,145.1 L1065.3,146.8 L1067.4,148.4 L1069.5,150.0 L1071.5,151.6 L1073.5,153.2 L1075.6,154.9 L1077.6,156.5 L1079.6,158.1 L1081.6,159.7 L1083.6,161.4 L1085.5,163.0 L1087.5,164.6 L1089.4,166.2 L1091.3,167.9 L1093.2,169.5 L1095.1,171.1 L1097.0,172.7 L1098.9,174.4 L1100.7,176.0 L1102.6,177.6 L1104.4,179.2 L1106.2,180.9 L1108.0,182.5 L1109.7,184.1 L1111.5,185.7 L1113.2,187.4 L1115.0,189.0 L1116.7,190.6 L1118.4,192.2 L1120.1,193.9 L1121.7,195.5 L1123.4,197.1 L1125.0,198.7 L1126.6,200.4 L1128.2,202.0 L1129.8,203.6 L1131.3,205.2 L1132.9,206.9 L1134.4,208.5 L1135.9,210.1 L1137.4,211.7 L1138.9,213.4 L1140.3,215.0 L1141.7,216.6 L1143.2,218.3 L1144.6,219.9 L1145.9,221.5 L1147.3,223.1 L1148.6,224.8 L1150.0,226.4 L1151.3,228.0 L1152.5,229.6 L1153.8,231.3 L1155.1,232.9 L1156.3,234.5 L1157.5,236.2 L1158.7,237.8 L1159.9,239.4 L1161.0,241.0 L1162.1,242.7 L1163.3,244.3 L1164.3,245.9 L1165.4,247.5 L1166.5,249.2 L1167.5,250.8 L1168.5,252.4 L1169.5,254.1 L1170.5,255.7 L1171.4,257.3 L1172.4,258.9 L1173.3,260.6 L1174.1,262.2 L1175.0,263.8 L1175.9,265.4 L1176.7,267.1 L1177.5,268.7 L1178.3,270.3 L1179.0,272.0 L1179.8,273.6 L1180.5,275.2 L1181.2,276.8 L1181.9,278.5 L1182.5,280.1 L1183.2,281.7 L1183.8,283.3 L1184.4,285.0 L1184.9,286.6 L1185.5,288.2 L1186.0,289.9 L1186.5,291.5 L1187.0,293.1 L1187.5,294.7 L1187.9,296.4 L1188.3,298.0 L1188.7,299.6 L1189.1,301.3 L1189.5,302.9 L1189.8,304.5 L1190.1,306.1 L1190.4,307.8 L1190.7,309.4 L1190.9,311.0 L1191.1,312.7 L1191.3,314.3 L1191.5,315.9 L1191.7,317.5 L1191.8,319.2 L1191.9,320.8 L1192.0,322.4 L1192.1,324.0 L1192.1,325.7 L1192.1,327.3 L1192.1,328.9 L1192.1,330.6 L1192.1,332.2 L1192.0,333.8 L1191.9,335.4 L1191.8,337.1 L1191.7,338.7 L1191.5,340.3 L1191.3,342.0 L1191.1,343.6 L1190.9,345.2 L1190.7,346.8 L1190.4,348.5 L1190.1,350.1 L1189.8,351.7 L1189.5,353.3 L1189.1,355.0 L1188.8,356.6 L1188.4,358.2 L1188.0,359.9 L1187.5,361.5 L1187.1,363.1 L1186.6,364.7 L1186.1,366.4 L1185.6,368.0 L1185.0,369.6 L1184.4,371.3 L1183.8,372.9 L1183.2,374.5 L1182.6,376.1 L1181.9,377.8 L1181.3,379.4 L1180.6,381.0 L1179.9,382.6 L1179.1,384.3 L1178.4,385.9 L1177.6,387.5 L1176.8,389.2 L1175.9,390.8 L1175.1,392.4 L1174.2,394.0 L1173.4,395.7 L1172.4,397.3 L1171.5,398.9 L1170.6,400.5 L1169.6,402.2 L1168.6,403.8 L1167.6,405.4 L1166.6,407.1 L1165.5,408.7 L1164.5,410.3 L1163.4,411.9 L1162.3,413.6 L1161.1,415.2 L1160.0,416.8 L1158.8,418.4 L1157.6,420.1 L1156.4,421.7 L1155.2,423.3 L1154.0,425.0" stroke="#808080" stroke-opacity="0.42" stroke-width="1.39" stroke-dasharray="1.39 2.29"/>
<path d="M1091.3,98.0 L1094.8,99.6 L1098.3,101.1 L1101.9,102.7 L1105.4,104.3 L1108.9,105.8 L1112.3,107.4 L1115.8,109.0 L1119.3,110.6 L1122.7,112.2 L1126.2,113.7 L1129.6,115.3 L1133.0,116.9 L1136.4,118.5 L1139.8,120.1 L1143.2,121.7 L1146.6,123.3 L1149.9,124.9 L1153.3,126.5 L1156.6,128.1 L1159.9,129.7 L1163.2,131.3 L1166.4,132.8 L1169.7,134.4 L1172.9,136.0 L1176.1,137.6 L1179.3,139.3 L1182.5,140.9 L1185.6,142.5 L1188.8,144.1 L1191.9,145.7 L1195.0,147.3 L1198.1,148.9 L1201.1,150.5 L1204.2,152.1 L1207.2,153.7 L1210.2,155.3 L1213.1,156.9 L1216.1,158.5 L1219.0,160.1 L1221.9,161.7 L1224.8,163.3 L1227.6,165.0 L1230.5,166.6 L1233.3,168.2 L1236.1,169.8 L1238.8,171.4 L1241.6,173.0 L1244.3,174.6 L1247.0,176.2 L1249.6,177.9 L1252.3,179.5 L1254.9,181.1 L1257.5,182.7 L1260.0,184.3 L1262.5,185.9 L1265.1,187.5 L1267.5,189.2 L1270.0,190.8 L1272.4,192.4 L1274.8,194.0 L1277.2,195.6 L1279.5,197.2 L1281.8,198.9 L1284.1,200.5 L1286.4,202.1 L1288.6,203.7 L1290.8,205.3 L1293.0,206.9 L1295.1,208.6 L1297.2,210.2 L1299.3,211.8 L1301.3,213.4 L1303.4,215.0 L1305.4,216.6 L1307.3,218.3 L1309.2,219.9 L1311.1,221.5 L1313.0,223.1 L1314.9,224.7 L1316.7,226.4 L1318.4,228.0 L1320.2,229.6 L1321.9,231.2 L1323.6,232.8 L1325.2,234.5 L1326.8,236.1 L1328.4,237.7 L1330.0,239.3 L1331.5,240.9 L1333.0,242.6 L1334.5,244.2 L1335.9,245.8 L1337.3,247.4 L1338.6,249.0 L1340.0,250.7 L1341.3,252.3 L1342.5,253.9 L1343.8,255.5 L1344.9,257.1 L1346.1,258.8 L1347.2,260.4 L1348.3,262.0 L1349.4,263.6 L1350.4,265.3 L1351.4,266.9 L1352.4,268.5 L1353.3,270.1 L1354.2,271.7 L1355.0,273.4 L1355.9,275.0 L1356.6,276.6 L1357.4,278.2 L1358.1,279.8 L1358.8,281.5 L1359.4,283.1 L1360.1,284.7 L1360.6,286.3 L1361.2,288.0 L1361.7,289.6 L1362.2,291.2 L1362.6,292.8 L1363.0,294.4 L1363.4,296.1 L1363.7,297.7 L1364.0,299.3 L1364.3,300.9 L1364.5,302.5 L1364.7,304.2 L1364.9,305.8 L1365.0,307.4 L1365.1,309.0 L1365.2,310.7 L1365.2,312.3 L1365.2,313.9 L1365.1,315.5 L1365.0,317.1 L1364.9,318.8 L1364.8,320.4 L1364.6,322.0 L1364.4,323.6 L1364.1,325.3 L1363.8,326.9 L1363.5,328.5 L1363.1,330.1 L1362.7,331.7 L1362.3,333.4 L1361.8,335.0 L1361.3,336.6 L1360.8,338.2 L1360.2,339.9 L1359.6,341.5 L1359.0,343.1 L1358.3,344.7 L1357.6,346.3" stroke="#808080" stroke-opacity="0.42" stroke-width="1.39" stroke-dasharray="1.39 2.29"/>
<path d="M1132.7,109.3 L1136.9,110.9 L1141.0,112.6 L1145.2,114.2 L1149.3,115.8 L1153.4,117.4 L1157.5,119.1 L1161.5,120.7 L1165.6,122.3 L1169.6,123.9 L1173.6,125.6 L1177.6,127.2 L1181.5,128.8 L1185.5,130.5 L1189.4,132.1 L1193.3,133.7 L1197.2,135.3 L1201.0,137.0 L1204.9,138.6 L1208.7,140.2 L1212.4,141.9 L1216.2,143.5 L1219.9,145.1 L1223.7,146.8 L1227.3,148.4 L1231.0,150.0 L1234.6,151.6 L1238.3,153.3 L1241.8,154.9 L1245.4,156.5 L1248.9,158.2 L1252.4,159.8 L1255.9,161.4 L1259.4,163.0 L1262.8,164.7 L1266.2,166.3 L1269.6,167.9 L1272.9,169.6 L1276.2,171.2 L1279.5,172.8 L1282.8,174.5 L1286.0,176.1 L1289.2,177.7 L1292.4,179.3 L1295.5,181.0 L1298.6,182.6 L1301.7,184.2 L1304.8,185.9 L1307.8,187.5 L1310.8,189.1 L1313.7,190.8 L1316.7,192.4 L1319.6,194.0 L1322.4,195.6 L1325.3,197.3 L1328.1,198.9 L1330.8,200.5 L1333.6,202.2 L1336.3,203.8 L1338.9,205.4 L1341.6,207.1 L1344.2,208.7 L1346.7,210.3 L1349.3,211.9 L1351.8,213.6 L1354.2,215.2 L1356.6,216.8 L1359.0,218.5 L1361.4,220.1 L1363.7,221.7 L1366.0,223.4 L1368.3,225.0 L1370.5,226.6 L1372.7,228.2 L1374.8,229.9 L1376.9,231.5 L1379.0,233.1 L1381.0,234.8 L1383.0,236.4 L1385.0,238.0 L1386.9,239.7 L1388.8,241.3 L1390.7,242.9 L1392.5,244.5 L1394.3,246.2 L1396.0,247.8 L1397.7,249.4 L1399.4,251.1 L1401.0,252.7 L1402.6,254.3 L1404.1,256.0 L1405.6,257.6 L1407.1,259.2 L1408.6,260.9 L1410.0,262.5 L1411.3,264.1 L1412.6,265.7 L1413.9,267.4 L1415.1,269.0 L1416.3,270.6 L1417.5,272.3 L1418.6,273.9 L1419.7,275.5 L1420.8,277.2 L1421.8,278.8 L1422.7,280.4 L1423.6,282.0 L1424.5,283.7 L1425.4,285.3 L1426.2,286.9 L1426.9,288.6 L1427.7,290.2 L1428.3,291.8 L1429.0,293.5 L1429.6,295.1" stroke="#808080" stroke-opacity="0.42" stroke-width="1.39" stroke-dasharray="1.39 2.29"/>
<path d="M1138.7,136.0 L1140.8,136.3 L1143.0,136.6 L1145.2,136.9 L1147.4,137.2 L1149.7,137.5 L1152.1,137.9 L1154.4,138.3 L1156.8,138.7 L1159.3,139.1 L1161.8,139.6 L1164.3,140.1 L1166.8,140.5 L1169.4,141.1 L1172.0,141.6 L1174.7,142.1 L1177.4,142.7 L1180.1,143.3 L1182.9,143.9 L1185.7,144.5 L1188.5,145.1 L1191.4,145.7 L1194.3,146.4 L1197.2,147.1 L1200.2,147.8 L1203.1,148.5 L1206.2,149.2 L1209.2,150.0 L1212.3,150.7 L1215.3,151.5 L1218.5,152.3 L1221.6,153.1 L1224.8,153.9 L1227.9,154.7 L1231.1,155.5 L1234.4,156.4 L1237.6,157.3 L1240.9,158.1 L1244.2,159.0 L1247.5,159.9 L1250.8,160.8 L1254.1,161.7 L1257.5,162.7 L1260.8,163.6 L1264.2,164.6 L1267.6,165.5 L1271.0,166.5 L1274.4,167.5 L1277.8,168.5 L1281.3,169.5 L1284.7,170.5 L1288.1,171.5 L1291.6,172.6 L1295.1,173.6 L1298.5,174.6 L1302.0,175.7 L1305.5,176.8 L1309.0,177.8 L1312.4,178.9 L1315.9,180.0 L1319.4,181.1 L1322.9,182.2 L1326.4,183.3 L1329.9,184.4 L1333.4,185.6 L1336.8,186.7 L1340.3,187.8 L1343.8,189.0 L1347.3,190.1 L1350.7,191.3 L1354.2,192.4" stroke="#808080" stroke-opacity="0.42" stroke-width="1.39" stroke-dasharray="1.39 2.29"/>
<path d="M447.7,193.6 L446.6,194.8 L445.4,195.9 L444.2,197.1 L443.1,198.3 L442.0,199.5 L440.8,200.7 L439.7,201.9 L438.6,203.1 L437.5,204.3 L436.4,205.5 L435.4,206.8 L434.3,208.0 L433.3,209.2 L432.2,210.4 L431.2,211.7 L430.2,212.9 L429.2,214.2 L428.2,215.4 L427.3,216.7 L426.3,217.9 L425.4,219.2 L424.5,220.5 L423.6,221.7 L422.7,223.0 L421.9,224.3 L421.0,225.6 L420.2,226.8 L419.4,228.1 L418.6,229.4 L417.9,230.7 L417.1,232.0 L416.4,233.3 L415.7,234.6 L415.0,235.9 L414.3,237.2" stroke="#808080" stroke-opacity="0.42" stroke-width="1.39" stroke-dasharray="1.39 2.29"/>
<path d="M1084.7,141.3 L1087.0,142.9 L1089.2,144.6 L1091.4,146.2 L1093.7,147.8 L1095.9,149.5 L1098.0,151.1 L1100.2,152.7 L1102.4,154.3 L1104.5,156.0 L1106.6,157.6 L1108.8,159.2 L1110.9,160.9 L1112.9,162.5 L1115.0,164.1 L1117.0,165.8 L1119.1,167.4 L1121.1,169.0 L1123.1,170.7 L1125.1,172.3 L1127.0,173.9 L1129.0,175.6 L1130.9,177.2 L1132.8,178.8 L1134.7,180.4 L1136.6,182.1 L1138.4,183.7 L1140.3,185.3 L1142.1,187.0 L1143.9,188.6 L1145.7,190.2 L1147.5,191.9 L1149.2,193.5 L1150.9,195.1 L1152.6,196.8 L1154.3,198.4 L1156.0,200.0 L1157.6,201.7 L1159.3,203.3 L1160.9,204.9 L1162.5,206.5 L1164.1,208.2 L1165.6,209.8 L1167.1,211.4 L1168.7,213.1 L1170.1,214.7 L1171.6,216.3 L1173.1,218.0 L1174.5,219.6 L1175.9,221.2 L1177.3,222.9 L1178.7,224.5 L1180.0,226.1 L1181.3,227.8 L1182.6,229.4 L1183.9,231.0 L1185.2,232.6 L1186.4,234.3 L1187.6,235.9 L1188.8,237.5 L1190.0,239.2 L1191.1,240.8 L1192.3,242.4 L1193.4,244.1 L1194.5,245.7 L1195.5,247.3 L1196.6,249.0 L1197.6,250.6 L1198.6,252.2 L1199.5,253.9 L1200.5,255.5 L1201.4,257.1 L1202.3,258.7 L1203.2,260.4 L1204.1,262.0 L1204.9,263.6 L1205.7,265.3 L1206.5,266.9 L1207.2,268.5 L1208.0,270.2 L1208.7,271.8 L1209.4,273.4 L1210.1,275.1 L1210.7,276.7 L1211.3,278.3 L1211.9,280.0 L1212.5,281.6 L1213.1,283.2 L1213.6,284.8 L1214.1,286.5 L1214.6,288.1 L1215.0,289.7 L1215.5,291.4 L1215.9,293.0 L1216.3,294.6 L1216.6,296.3 L1217.0,297.9 L1217.3,299.5 L1217.6,301.2 L1217.8,302.8 L1218.1,304.4 L1218.3,306.1 L1218.5,307.7 L1218.6,309.3 L1218.8,310.9 L1218.9,312.6 L1219.0,314.2 L1219.1,315.8 L1219.1,317.5 L1219.1,319.1 L1219.1,320.7 L1219.1,322.4 L1219.0,324.0 L1219.0,325.6 L1218.9,327.3 L1218.7,328.9 L1218.6,330.5 L1218.4,332.2 L1218.2,333.8 L1218.0,335.4 L1217.8,337.0 L1217.5,338.7 L1217.2,340.3 L1216.9,341.9 L1216.5,343.6 L1216.2,345.2 L1215.8,346.8 L1215.4,348.5 L1214.9,350.1 L1214.5,351.7 L1214.0,353.4 L1213.5,355.0 L1212.9,356.6 L1212.4,358.3 L1211.8,359.9 L1211.2,361.5 L1210.6,363.1 L1209.9,364.8 L1209.2,366.4 L1208.5,368.0 L1207.8,369.7 L1207.1,371.3 L1206.3,372.9 L1205.5,374.6 L1204.7,376.2 L1203.9,377.8 L1203.0,379.5 L1202.1,381.1 L1201.2,382.7 L1200.3,384.4 L1199.3,386.0 L1198.3,387.6 L1197.3,389.2 L1196.3,390.9 L1195.3,392.5 L1194.2,394.1 L1193.1,395.8 L1192.0,397.4 L1190.9,399.0 L1189.7,400.7 L1188.5,402.3 L1187.3,403.9 L1186.1,405.6 L1184.9,407.2 L1183.6,408.8 L1182.3,410.5 L1181.0,412.1 L1179.7,413.7 L1178.3,415.3 L1177.0,417.0 L1175.6,418.6 L1174.2,420.2" stroke="#808080" stroke-opacity="0.42" stroke-width="1.39" stroke-dasharray="1.39 2.29"/>
<path d="M1140.0,168.7 L1142.7,170.0 L1145.5,171.2 L1148.2,172.5 L1150.9,173.8 L1153.7,175.1 L1156.4,176.4 L1159.1,177.7 L1161.8,179.0 L1164.5,180.3 L1167.2,181.7 L1169.9,183.0 L1172.5,184.3 L1175.2,185.6 L1177.9,187.0 L1180.5,188.3 L1183.2,189.7 L1185.8,191.0 L1188.4,192.4 L1191.0,193.7 L1193.6,195.1 L1196.2,196.4 L1198.8,197.8 L1201.4,199.2 L1203.9,200.5 L1206.5,201.9 L1209.0,203.3 L1211.5,204.7 L1214.0,206.1 L1216.5,207.4 L1219.0,208.8 L1221.4,210.2 L1223.9,211.6 L1226.3,213.0 L1228.7,214.4 L1231.1,215.8 L1233.5,217.2 L1235.9,218.6 L1238.2,220.0 L1240.5,221.5 L1242.8,222.9 L1245.1,224.3 L1247.4,225.7 L1249.7,227.1 L1251.9,228.5 L1254.2,230.0 L1256.4,231.4 L1258.5,232.8 L1260.7,234.2 L1262.9,235.7 L1265.0,237.1 L1267.1,238.5 L1269.2,240.0 L1271.3,241.4 L1273.3,242.8 L1275.3,244.3 L1277.3,245.7 L1279.3,247.2 L1281.3,248.6 L1283.2,250.1 L1285.1,251.5 L1287.0,252.9 L1288.9,254.4 L1290.8,255.8 L1292.6,257.3 L1294.4,258.7 L1296.2,260.2 L1297.9,261.6 L1299.7,263.1 L1301.4,264.6 L1303.1,266.0 L1304.7,267.5 L1306.4,268.9 L1308.0,270.4 L1309.6,271.8 L1311.2,273.3 L1312.7,274.8 L1314.2,276.2 L1315.7,277.7 L1317.2,279.2 L1318.6,280.6 L1320.0,282.1 L1321.4,283.5 L1322.8,285.0 L1324.1,286.5 L1325.5,287.9 L1326.8,289.4 L1328.0,290.9 L1329.3,292.3 L1330.5,293.8 L1331.6,295.3 L1332.8,296.7 L1333.9,298.2 L1335.0,299.7 L1336.1,301.2 L1337.2,302.6 L1338.2,304.1 L1339.2,305.6 L1340.2,307.0 L1341.1,308.5 L1342.0,310.0 L1342.9,311.4 L1343.8,312.9 L1344.6,314.4 L1345.4,315.9 L1346.2,317.3 L1346.9,318.8 L1347.7,320.3 L1348.3,321.7 L1349.0,323.2 L1349.7,324.7 L1350.3,326.2 L1350.8,327.6 L1351.4,329.1 L1351.9,330.6 L1352.4,332.0 L1352.9,333.5 L1353.3,335.0 L1353.8,336.5 L1354.1,337.9 L1354.5,339.4 L1354.8,340.9 L1355.1,342.3 L1355.4,343.8 L1355.7,345.3 L1355.9,346.7 L1356.1,348.2" stroke="#808080" stroke-opacity="0.42" stroke-width="1.39" stroke-dasharray="1.39 2.29"/>
<path d="M1175.3,167.0 L1176.2,168.2 L1177.1,169.5 L1177.9,170.7 L1178.8,172.0 L1179.7,173.2 L1180.6,174.5 L1181.4,175.8 L1182.3,177.1 L1183.1,178.3 L1184.0,179.6 L1184.8,180.9 L1185.6,182.2 L1186.5,183.5 L1187.3,184.8 L1188.1,186.2 L1188.9,187.5 L1189.7,188.8 L1190.5,190.1 L1191.2,191.4 L1192.0,192.8 L1192.8,194.1 L1193.5,195.5 L1194.2,196.8 L1195.0,198.2 L1195.7,199.5 L1196.4,200.9 L1197.1,202.2 L1197.7,203.6 L1198.4,204.9 L1199.1,206.3 L1199.7,207.7 L1200.3,209.1 L1200.9,210.4 L1201.5,211.8 L1202.1,213.2 L1202.7,214.6 L1203.3,216.0 L1203.8,217.4 L1204.3,218.7 L1204.8,220.1 L1205.3,221.5 L1205.8,222.9 L1206.3,224.3 L1206.8,225.7 L1207.2,227.1 L1207.6,228.6 L1208.0,230.0 L1208.4,231.4 L1208.8,232.8 L1209.2,234.2 L1209.5,235.6 L1209.8,237.0 L1210.1,238.5 L1210.4,239.9 L1210.7,241.3 L1211.0,242.7 L1211.2,244.1 L1211.4,245.6 L1211.7,247.0 L1211.8,248.4 L1212.0,249.9 L1212.2,251.3 L1212.3,252.7 L1212.4,254.2 L1212.6,255.6 L1212.6,257.0 L1212.7,258.5 L1212.8,259.9 L1212.8,261.4 L1212.8,262.8 L1212.8,264.2 L1212.8,265.7 L1212.8,267.1 L1212.7,268.6 L1212.6,270.0 L1212.5,271.5 L1212.4,272.9 L1212.3,274.4 L1212.1,275.8 L1212.0,277.3 L1211.8,278.7 L1211.6,280.2 L1211.4,281.6 L1211.1,283.1 L1210.9,284.5 L1210.6,286.0 L1210.3,287.4 L1210.0,288.9 L1209.6,290.4 L1209.3,291.8 L1208.9,293.3 L1208.5,294.7 L1208.1,296.2 L1207.7,297.6 L1207.2,299.1 L1206.8,300.6 L1206.3,302.0 L1205.8,303.5 L1205.3,304.9 L1204.7,306.4 L1204.2,307.9 L1203.6,309.3 L1203.0,310.8 L1202.4,312.2 L1201.8,313.7 L1201.1,315.2 L1200.4,316.6 L1199.8,318.1 L1199.1,319.5 L1198.3,321.0 L1197.6,322.5 L1196.8,323.9 L1196.1,325.4 L1195.3,326.9 L1194.4,328.3 L1193.6,329.8 L1192.8,331.2 L1191.9,332.7 L1191.0,334.2 L1190.1,335.6 L1189.2,337.1 L1188.3,338.5 L1187.3,340.0 L1186.3,341.5 L1185.3,342.9 L1184.3,344.4 L1183.3,345.8 L1182.3,347.3 L1181.2,348.7 L1180.1,350.2 L1179.0,351.7 L1177.9,353.1 L1176.8,354.6 L1175.7,356.0 L1174.5,357.5 L1173.3,358.9 L1172.1,360.4 L1170.9,361.8 L1169.7,363.3 L1168.5,364.7 L1167.2,366.2 L1165.9,367.6 L1164.7,369.1 L1163.3,370.5 L1162.0,372.0 L1160.7,373.4 L1159.4,374.9 L1158.0,376.3 L1156.6,377.8 L1155.2,379.2 L1153.8,380.6 L1152.4,382.1 L1150.9,383.5 L1149.5,385.0 L1148.0,386.4 L1146.6,387.8 L1145.1,389.3 L1143.6,390.7 L1142.0,392.1 L1140.5,393.6 L1139.0,395.0 L1137.4,396.4 L1135.8,397.8 L1134.2,399.3 L1132.6,400.7 L1131.0,402.1 L1129.4,403.5 L1127.8,405.0 L1126.1,406.4 L1124.5,407.8 L1122.8,409.2 L1121.1,410.6 L1119.4,412.0 L1117.7,413.4 L1116.0,414.8 L1114.3,416.2 L1112.5,417.6 L1110.8,419.0 L1109.0,420.4 L1107.2,421.8 L1105.5,423.2 L1103.7,424.6 L1101.9,426.0 L1100.1,427.4 L1098.3,428.8 L1096.4,430.2 L1094.6,431.5 L1092.7,432.9 L1090.9,434.3 L1089.0,435.6" stroke="#808080" stroke-opacity="0.42" stroke-width="1.39" stroke-dasharray="1.39 2.29"/>
<path d="M868.9,166.7 L868.8,165.1 L868.7,163.5 L868.6,162.0 L868.5,160.4 L868.4,158.8 L868.3,157.3 L868.2,155.7 L868.1,154.1 L868.0,152.5 L867.9,151.0 L867.8,149.4 L867.7,147.9 L867.7,146.3 L867.6,144.7 L867.5,143.2 L867.4,141.6 L867.4,140.1 L867.3,138.5 L867.2,137.0 L867.1,135.4 L867.1,133.9 L867.0,132.3 L866.9,130.8 L866.9,129.2 L866.8,127.7 L866.8,126.2 L866.7,124.6 L866.6,123.1 L866.6,121.6 L866.5,120.1 L866.5,118.5 L866.4,117.0 L866.4,115.5 L866.3,114.0 L866.3,112.5 L866.2,111.0 L866.2,109.5 L866.1,108.0 L866.1,106.5 L866.0,105.1 L866.0,103.6 L865.9,102.1 L865.9,100.7 L865.8,99.2 L865.8,97.8 L865.7,96.3 L865.7,94.9 L865.6,93.5 L865.6,92.1 L865.5,90.7 L865.4,89.3 L865.4,87.9 L865.3,86.6 L865.2,85.2 L865.1,83.9 L865.0,82.6 L864.9,81.3 L864.8,80.0 L864.6,78.7 L864.5,77.5 L864.3,76.3 L864.1,75.1 L863.9,73.9 L863.7,72.7 L863.5,71.6 L863.2,70.6 L862.9,69.5 L862.6,68.5 L862.2,67.5 L861.8,66.6 L861.3,65.7 L860.8,64.9 L860.3,64.1 L859.6,63.4 L858.9,62.8 L858.1,62.2 L857.3,61.7 L856.3,61.2 L855.2,60.8 L854.1,60.5 L852.8,60.3 L851.4,60.2 L849.8,60.1 L848.2,60.1 L846.4,60.2 L844.5,60.4 L842.4,60.6 L840.2,61.0 L837.8,61.4 L835.3,61.9 L832.7,62.4 L830.0,63.0 L827.1,63.7 L824.1,64.5 L821.0,65.3 L817.8,66.1 L814.5,67.0 L811.0,67.9 L807.5,68.9 L803.9,70.0 L800.2,71.0 L796.5,72.1 L792.6,73.2 L788.8,74.4 L784.8,75.6 L780.8,76.8 L776.7,78.0 L772.6,79.3 L768.5,80.5 L764.3,81.8 L760.1,83.1 L755.8,84.5 L751.5,85.8 L747.2,87.2 L742.8,88.5 L738.5,89.9 L734.1,91.3 L729.7,92.7 L725.3,94.1 L720.8,95.5 L716.4,97.0 L711.9,98.4 L707.5,99.9 L703.0,101.3 L698.5,102.8 L694.1,104.2 L689.6,105.7 L685.1,107.2 L680.6,108.7 L676.1,110.2 L671.6,111.7 L667.2,113.2 L662.7,114.7 L658.2,116.2 L653.7,117.7 L649.3,119.2 L644.8,120.7 L640.4,122.2 L636.0,123.8 L631.5,125.3 L627.1,126.8 L622.7,128.4 L618.3,129.9 L614.0,131.4 L609.6,133.0 L605.3,134.5 L600.9,136.1 L596.6,137.6 L592.3,139.2 L588.0,140.7 L583.8,142.3 L579.5,143.8 L575.3,145.4 L571.1,147.0 L566.9,148.5 L562.7,150.1 L558.6,151.7 L554.4,153.2 L550.3,154.8 L546.2,156.4 L542.2,157.9 L538.1,159.5 L534.1,161.1 L530.1,162.7 L526.2,164.2 L522.2,165.8 L518.3,167.4 L514.4,169.0 L510.5,170.5 L506.7,172.1 L502.9,173.7 L499.1,175.3 L495.3,176.9 L491.6,178.4 L487.9,180.0 L484.2,181.6 L480.5,183.2 L476.9,184.8 L473.3,186.4 L469.8,188.0 L466.2,189.6 L462.7,191.1 L459.3,192.7 L455.8,194.3 L452.4,195.9 L449.0,197.5 L445.7,199.1 L442.4,200.7 L439.1,202.3 L435.8,203.9 L432.6,205.5 L429.5,207.1 L426.3,208.7 L423.2,210.3" stroke="#808080" stroke-opacity="0.42" stroke-width="1.39" stroke-dasharray="1.39 2.29"/>
<path d="M654.7,113.6 L658.9,112.3 L663.1,111.0 L667.3,109.7 L671.5,108.4 L675.6,107.1 L679.8,105.8 L684.0,104.6 L688.1,103.3 L692.3,102.0 L696.4,100.8 L700.5,99.5 L704.6,98.3 L708.7,97.1 L712.8,95.9 L716.9,94.7 L720.9,93.5 L724.9,92.3 L728.9,91.1" stroke="#808080" stroke-width="1.39" stroke-opacity="1.0"/>
<path d="M756.7,93.3 L761.7,91.4 L766.7,89.5 L771.7,87.6 L776.7,85.8" stroke="#808080" stroke-width="1.39" stroke-opacity="1.0"/>
<path d="M748.5,103.5 L745.2,102.6 L741.2,102.0 L736.5,101.8" stroke="#808080" stroke-width="1.39" stroke-opacity="1.0"/>
<path d="M679.6,138.9 L680.8,134.4 L681.5,130.3 L681.3,126.7" stroke="#808080" stroke-width="1.39" stroke-opacity="1.0"/>
<path d="M776.3,118.6 L781.1,118.3 L785.7,118.1 L790.0,118.2" stroke="#808080" stroke-width="1.39" stroke-opacity="1.0"/>
<path d="M720.7,153.0 L723.2,151.5 L725.7,150.0 L728.2,148.5" stroke="#808080" stroke-width="1.39" stroke-opacity="1.0"/>
<path d="M690.2,185.8 L684.4,185.0 L678.3,184.4 L672.0,184.0" stroke="#808080" stroke-width="1.39" stroke-opacity="1.0"/>
<path d="M867.3,88.7 L868.0,82.7 L868.6,76.9 L869.2,71.3 L869.5,66.0" stroke="#808080" stroke-width="1.39" stroke-opacity="1.0"/>
<path d="M881.3,63.3 L887.4,61.6 L893.2,60.7 L898.7,60.7" stroke="#808080" stroke-width="1.39" stroke-opacity="1.0"/>
<path d="M928.0,82.7 L928.8,75.7 L929.9,69.2 L931.3,63.3" stroke="#808080" stroke-width="1.39" stroke-opacity="1.0"/>
<path d="M904.0,91.3 L900.0,88.6 L896.0,86.1 L892.0,84.0" stroke="#808080" stroke-width="1.39" stroke-opacity="1.0"/>
<path d="M919.3,147.3 L917.3,143.9 L915.3,140.6 L913.3,137.3" stroke="#808080" stroke-width="1.39" stroke-opacity="1.0"/>
<path d="M981.3,75.3 L977.1,72.2 L973.0,69.1 L968.8,66.0 L964.7,63.0 L960.7,60.0" stroke="#808080" stroke-width="1.39" stroke-opacity="1.0"/>
<path d="M1023.7,116.0 L1019.8,113.3 L1015.9,110.5 L1012.0,107.8" stroke="#808080" stroke-width="1.39" stroke-opacity="1.0"/>
<path d="M1091.3,98.0 L1087.2,96.2 L1083.0,94.3 L1078.9,92.5 L1074.7,90.7 L1070.6,88.9 L1066.4,87.1 L1062.3,85.3 L1058.1,83.5 L1054.0,81.7 L1049.8,80.0 L1045.7,78.2 L1041.6,76.5 L1037.6,74.7 L1033.5,73.0 L1029.5,71.3 L1025.5,69.6 L1021.6,67.9 L1017.8,66.3 L1013.9,64.7 L1010.2,63.1 L1006.6,61.5 L1003.0,60.0" stroke="#808080" stroke-width="1.39" stroke-opacity="1.0"/>
<path d="M807.1,58.5 L812.8,57.1 L818.2,55.7" stroke="#808080" stroke-width="1.39" stroke-opacity="1.0"/>
<path d="M1132.7,109.3 L1128.7,107.7 L1124.6,106.2 L1120.5,104.6 L1116.4,103.0 L1112.3,101.4 L1108.2,99.9 L1104.0,98.3 L1099.9,96.7 L1095.7,95.2 L1091.5,93.6 L1087.3,92.0 L1083.1,90.4 L1078.9,88.9 L1074.7,87.3" stroke="#808080" stroke-width="1.39" stroke-opacity="1.0"/>
<path d="M1138.7,136.0 L1133.1,135.4 L1127.8,134.9 L1122.8,134.6 L1118.2,134.5 L1113.8,134.5 L1109.7,134.7 L1105.8,135.1 L1102.3,135.6" stroke="#808080" stroke-width="1.39" stroke-opacity="1.0"/>
<path d="M1084.7,141.3 L1081.0,138.6 L1077.2,136.0 L1073.4,133.3 L1069.6,130.7 L1065.8,128.0 L1061.9,125.3 L1058.0,122.7 L1054.0,120.0 L1050.0,117.4 L1046.0,114.7" stroke="#808080" stroke-width="1.39" stroke-opacity="1.0"/>
<path d="M1140.0,168.7 L1136.0,166.9 L1132.0,165.0 L1128.1,163.2 L1124.1,161.4 L1120.1,159.7 L1116.1,157.9 L1112.1,156.2 L1108.1,154.4 L1104.2,152.7 L1100.2,151.0 L1096.3,149.4 L1092.3,147.7 L1088.4,146.1 L1084.5,144.5 L1080.6,142.9 L1076.7,141.3" stroke="#808080" stroke-width="1.39" stroke-opacity="1.0"/>
<path d="M1175.3,167.0 L1172.4,163.0 L1169.5,159.1 L1166.7,155.3" stroke="#808080" stroke-width="1.39" stroke-opacity="1.0"/>
<path d="M868.9,166.7 L869.3,172.1 L869.7,177.6 L870.1,183.0 L870.6,188.4 L871.1,193.9" stroke="#808080" stroke-width="1.39" stroke-opacity="1.0"/>
</g>
<g id="shw">
<path d="M761.7,95.3 L763.2,95.2 L764.7,95.1 L766.2,95.0 L767.6,95.0 L768.9,95.0 L770.2,95.0 L771.5,95.0 L772.7,95.0 L773.8,95.1 L775.0,95.2 L776.0,95.3 L777.1,95.5 L778.1,95.7 L779.0,95.9 L779.9,96.1 L780.8,96.3 L781.6,96.6 L782.4,96.9 L783.2,97.2 L783.9,97.5 L784.6,97.9 L785.3,98.2 L785.9,98.6 L786.5,99.1 L787.0,99.5 L787.6,100.0 L788.1,100.4 L788.5,100.9 L789.0,101.4 L789.4,102.0 L789.8,102.5 L790.2,103.1 L790.5,103.7 L790.9,104.3 L791.2,104.9 L791.4,105.5 L791.7,106.2 L792.0,106.9 L792.2,107.5 L792.4,108.2 L792.6,109.0 L792.8,109.7 L792.9,110.4 L793.1,111.2 L793.2,111.9 L793.3,112.7 L793.4,113.5 L793.5,114.3 L793.6,115.1 L793.7,115.9 L793.8,116.8 L793.8,117.6 L793.9,118.5 L793.9,119.3 L793.9,120.2 L794.0,121.1 L794.0,122.0 L794.0,122.9 L794.0,123.8 L794.0,124.7 L794.0,125.6 L794.0,126.6 L793.9,127.5 L793.9,128.4 L793.9,129.4 L793.9,130.4 L793.8,131.3 L793.8,132.3 L793.8,133.3 L793.7,134.3 L793.7,135.3 L793.6,136.3 L793.6,137.3 L793.5,138.3 L793.5,139.3 L793.4,140.3 L793.4,141.3 L793.3,142.4 L793.2,143.4 L793.2,144.5 L793.1,145.5 L793.1,146.6 L793.0,147.6 L793.0,148.7 L792.9,149.7 L792.8,150.8 L792.8,151.9 L792.7,153.0 L792.7,154.0 L792.6,155.1 L792.6,156.2 L792.5,157.3 L792.5,158.4 L792.4,159.5 L792.4,160.6 L792.3,161.7 L792.3,162.8 L792.2,163.9 L792.2,165.0 L792.2,166.1 L792.1,167.2 L792.1,168.4 L792.1,169.5 L792.0,170.6 L792.0,171.7 L792.0,172.9 L792.0,174.0 L792.0,175.1 L791.9,176.3 L791.9,177.4 L791.9,178.5 L791.9,179.7 L791.9,180.8 L791.9,182.0 L791.9,183.1 L791.9,184.3 L791.9,185.4 L792.0,186.6 L792.0,187.7 L792.0,188.9 L792.0,190.1 L792.0,191.2 L792.1,192.4 L792.1,193.5 L792.1,194.7 L792.2,195.9 L792.2,197.0 L792.3,198.2 L792.3,199.4 L792.4,200.6 L792.4,201.7 L792.5,202.9 L792.6,204.1 L792.6,205.3 L792.7,206.4 L792.8,207.6 L792.9,208.8 L793.0,210.0 L793.1,211.2 L793.2,212.4 L793.3,213.5 L793.4,214.7 L793.5,215.9 L793.6,217.1 L793.7,218.3 L793.8,219.5 L793.9,220.7 L794.1,221.9 L794.2,223.1 L794.3,224.3 L794.5,225.5 L794.6,226.7 L794.8,227.9 L794.9,229.0 L795.1,230.2 L795.2,231.4 L795.4,232.6 L795.6,233.8 L795.7,235.1 L795.9,236.3 L796.1,237.5 L796.3,238.7 L796.5,239.9 L796.7,241.1 L796.9,242.3 L797.1,243.5 L797.3,244.7 L797.5,245.9 L797.7,247.1 L797.9,248.3 L798.1,249.5 L798.4,250.7 L798.6,251.9 L798.8,253.2 L799.1,254.4 L799.3,255.6 L799.6,256.8 L799.8,258.0 L800.1,259.2 L800.4,260.4 L800.6,261.6 L800.9,262.9 L801.2,264.1 L801.4,265.3 L801.7,266.5 L802.0,267.7 L802.3,268.9 L802.6,270.2 L802.9,271.4 L803.2,272.6 L803.5,273.8 L803.8,275.0 L804.2,276.2 L804.5,277.5 L804.8,278.7 L805.1,279.9 L805.5,281.1 L805.8,282.3 L806.1,283.6" stroke="#ff2000" stroke-opacity="1.0" stroke-width="1.39" stroke-dasharray="1.39 2.29"/>
<path d="M761.7,95.3 L759.4,95.5 L756.9,95.8 L754.4,96.1 L751.8,96.5 L749.1,96.9 L746.2,97.3 L743.3,97.8 L740.3,98.4 L737.2,99.0 L733.9,99.6 L730.6,100.3 L727.2,101.0 L723.7,101.8 L720.2,102.6 L716.5,103.4 L712.8,104.3 L709.0,105.2 L705.1,106.2 L701.1,107.2 L697.1,108.2 L693.0,109.2 L688.9,110.3 L684.6,111.4 L680.4,112.5 L676.0,113.6 L671.7,114.8 L667.2,116.0 L662.8,117.2 L658.2,118.5 L653.7,119.7 L649.1,121.0 L644.4,122.3 L639.8,123.6 L635.1,125.0 L630.4,126.3 L625.6,127.7 L620.8,129.1 L616.0,130.5 L611.2,131.9 L606.4,133.4 L601.5,134.8 L596.7,136.3 L591.8,137.7 L586.9,139.2 L582.0,140.7" stroke="#ff2000" stroke-width="1.39" stroke-opacity="1.0"/>
<circle cx="582.0" cy="140.7" r="1.2" fill="#ff6347" stroke="none"/>
<path d="M1001.6,99.3 L999.4,98.6 L997.3,98.0 L995.2,97.4 L993.1,96.8 L991.1,96.2 L989.1,95.7 L987.1,95.2 L985.1,94.7 L983.2,94.3 L981.3,93.8 L979.5,93.4 L977.6,93.1 L975.9,92.7 L974.1,92.4 L972.4,92.1 L970.7,91.9 L969.0,91.6 L967.4,91.4 L965.8,91.3 L964.2,91.2 L962.6,91.1 L961.1,91.0 L959.7,91.0 L958.2,91.0 L956.8,91.0 L955.4,91.1 L954.0,91.2 L952.6,91.3 L951.3,91.5 L950.0,91.6 L948.7,91.9 L947.5,92.1 L946.2,92.4 L945.0,92.7 L943.8,93.1 L942.6,93.4 L941.5,93.9 L940.3,94.3 L939.2,94.7 L938.0,95.2 L936.9,95.7 L935.8,96.3 L934.8,96.8 L933.7,97.4 L932.6,98.0 L931.6,98.7 L930.5,99.3 L929.5,100.0 L928.4,100.7 L927.4,101.5 L926.4,102.2 L925.4,103.0 L924.4,103.7 L923.4,104.5 L922.4,105.4 L921.4,106.2 L920.4,107.1 L919.4,107.9 L918.4,108.8 L917.4,109.7 L916.5,110.6 L915.5,111.6 L914.5,112.5 L913.5,113.5 L912.5,114.4 L911.6,115.4 L910.6,116.4 L909.6,117.4 L908.7,118.4 L907.7,119.5 L906.7,120.5 L905.7,121.6 L904.8,122.6 L903.8,123.7 L902.8,124.8 L901.9,125.8 L900.9,126.9 L899.9,128.0 L899.0,129.2 L898.0,130.3 L897.0,131.4 L896.1,132.5 L895.1,133.7 L894.1,134.8 L893.1,136.0 L892.2,137.1 L891.2,138.3 L890.2,139.5 L889.3,140.7 L888.3,141.9 L887.3,143.0 L886.3,144.2 L885.4,145.4 L884.4,146.6 L883.4,147.9 L882.5,149.1 L881.5,150.3 L880.5,151.5 L879.6,152.7 L878.6,154.0 L877.6,155.2 L876.7,156.5 L875.7,157.7 L874.7,158.9 L873.8,160.2 L872.8,161.5 L871.8,162.7 L870.9,164.0 L869.9,165.2 L868.9,166.5 L868.0,167.8 L867.0,169.0 L866.0,170.3 L865.1,171.6 L864.1,172.9 L863.2,174.2 L862.2,175.5 L861.3,176.7 L860.3,178.0 L859.4,179.3 L858.4,180.6 L857.5,181.9 L856.5,183.2 L855.6,184.5 L854.6,185.8 L853.7,187.1 L852.8,188.4 L851.8,189.8 L850.9,191.1 L850.0,192.4 L849.0,193.7 L848.1,195.0 L847.2,196.3 L846.3,197.7 L845.3,199.0 L844.4,200.3 L843.5,201.6 L842.6,203.0 L841.7,204.3 L840.8,205.6 L839.9,206.9 L839.0,208.3 L838.1,209.6 L837.2,210.9 L836.3,212.3 L835.4,213.6 L834.5,215.0 L833.6,216.3 L832.8,217.6 L831.9,219.0 L831.0,220.3 L830.1,221.7 L829.3,223.0 L828.4,224.4 L827.6,225.7 L826.7,227.0 L825.8,228.4 L825.0,229.7 L824.2,231.1 L823.3,232.4 L822.5,233.8 L821.7,235.2 L820.8,236.5 L820.0,237.9 L819.2,239.2 L818.4,240.6 L817.6,241.9 L816.8,243.3 L816.0,244.6 L815.2,246.0 L814.4,247.4 L813.6,248.7 L812.8,250.1 L812.0,251.4 L811.2,252.8 L810.5,254.2 L809.7,255.5 L808.9,256.9 L808.2,258.2 L807.4,259.6 L806.7,261.0 L806.0,262.3 L805.2,263.7 L804.5,265.1 L803.8,266.4 L803.1,267.8 L802.3,269.2 L801.6,270.5 L800.9,271.9 L800.2,273.3 L799.5,274.6 L798.8,276.0 L798.2,277.4 L797.5,278.7 L796.8,280.1 L796.2,281.5 L795.5,282.9 L794.8,284.2 L794.2,285.6" stroke="#ff2000" stroke-opacity="1.0" stroke-width="1.39" stroke-dasharray="1.39 2.29"/>
<path d="M1001.6,99.3 L1005.7,100.6 L1009.9,101.9 L1014.1,103.3 L1018.5,104.8 L1022.9,106.4 L1027.4,108.0 L1031.9,109.6 L1036.6,111.3 L1041.3,113.1 L1046.0,114.9" stroke="#ff2000" stroke-width="1.39" stroke-opacity="1.0"/>
<circle cx="1046.0" cy="114.9" r="1.2" fill="#ff6347" stroke="none"/>
<path d="M1077.3,108.0 L1073.4,106.4 L1069.6,104.8 L1065.7,103.3 L1061.9,101.7 L1058.0,100.1 L1054.1,98.6 L1050.3,97.0 L1046.4,95.5 L1042.6,94.0 L1038.7,92.4 L1034.9,90.9 L1031.1,89.4 L1027.3,87.9 L1023.5,86.4 L1019.7,85.0 L1015.9,83.5 L1012.2,82.0 L1008.5,80.6 L1004.8,79.2 L1001.1,77.8 L997.4,76.4 L993.8,75.0 L990.3,73.7 L986.7,72.4 L983.2,71.1 L979.8,69.8 L976.4,68.6 L973.1,67.4 L969.8,66.2 L966.6,65.1 L963.5,64.0 L960.4,63.0 L957.5,62.0 L954.6,61.1 L951.8,60.2 L949.1,59.5 L946.6,58.7 L944.1,58.1 L941.8,57.6 L939.5,57.1 L937.4,56.7 L935.4,56.4 L933.5,56.2 L931.7,56.2 L930.0,56.2 L928.4,56.3 L927.0,56.5 L925.5,56.8 L924.2,57.2 L922.9,57.7 L921.7,58.3 L920.6,59.0 L919.4,59.7 L918.4,60.5 L917.3,61.4 L916.3,62.4 L915.3,63.4 L914.3,64.4 L913.3,65.5 L912.4,66.6 L911.4,67.8 L910.5,69.0 L909.5,70.3 L908.6,71.5 L907.7,72.8 L906.8,74.2 L905.8,75.5 L904.9,76.9 L904.0,78.3 L903.1,79.7 L902.2,81.1 L901.3,82.6 L900.3,84.0 L899.4,85.5 L898.5,87.0 L897.6,88.5 L896.7,90.0 L895.7,91.5 L894.8,93.0 L893.9,94.5 L893.0,96.1 L892.1,97.6 L891.1,99.1 L890.2,100.7 L889.3,102.3 L888.4,103.8 L887.5,105.4 L886.5,107.0 L885.6,108.6 L884.7,110.2 L883.8,111.7 L882.8,113.3 L881.9,114.9 L881.0,116.5 L880.1,118.2 L879.2,119.8 L878.3,121.4 L877.3,123.0 L876.4,124.6 L875.5,126.2 L874.6,127.8 L873.7,129.5 L872.8,131.1 L871.9,132.7 L871.0,134.4 L870.1,136.0 L869.2,137.6 L868.3,139.3 L867.4,140.9 L866.5,142.5 L865.6,144.2 L864.7,145.8 L863.8,147.5 L862.9,149.1 L862.1,150.8 L861.2,152.4 L860.3,154.1 L859.4,155.7 L858.6,157.4 L857.7,159.0 L856.8,160.7 L856.0,162.3 L855.1,164.0 L854.3,165.6 L853.4,167.3 L852.6,168.9 L851.7,170.6 L850.9,172.3 L850.1,173.9 L849.2,175.6 L848.4,177.3 L847.6,178.9 L846.8,180.6 L845.9,182.2 L845.1,183.9 L844.3,185.6 L843.5,187.2 L842.7,188.9 L841.9,190.6 L841.2,192.2 L840.4,193.9 L839.6,195.6 L838.8,197.2 L838.1,198.9 L837.3,200.6 L836.5,202.2 L835.8,203.9 L835.0,205.6 L834.3,207.3 L833.6,208.9 L832.8,210.6 L832.1,212.3 L831.4,213.9 L830.7,215.6 L830.0,217.3 L829.3,219.0 L828.6,220.6 L827.9,222.3 L827.2,224.0 L826.5,225.7 L825.8,227.3 L825.2,229.0 L824.5,230.7 L823.9,232.4 L823.2,234.0 L822.6,235.7 L821.9,237.4 L821.3,239.1 L820.7,240.7 L820.1,242.4 L819.5,244.1 L818.9,245.8 L818.3,247.4 L817.7,249.1 L817.1,250.8 L816.5,252.5 L816.0,254.2 L815.4,255.8 L814.8,257.5 L814.3,259.2 L813.8,260.9 L813.2,262.5 L812.7,264.2 L812.2,265.9 L811.7,267.6 L811.2,269.3 L810.7,270.9 L810.2,272.6 L809.7,274.3 L809.2,276.0 L808.8,277.7 L808.3,279.3 L807.8,281.0 L807.4,282.7 L807.0,284.4 L806.5,286.1 L806.1,287.7 L805.7,289.4 L805.3,291.1" stroke="#ff2000" stroke-opacity="1.0" stroke-width="1.39" stroke-dasharray="1.39 2.29"/>
<path d="M1077.3,108.0 L1082.0,109.9 L1086.7,111.9 L1091.3,113.8 L1096.0,115.8 L1100.7,117.7 L1105.3,119.7" stroke="#ff2000" stroke-width="1.39" stroke-opacity="1.0"/>
<circle cx="1105.3" cy="119.7" r="1.2" fill="#ff6347" stroke="none"/>
<path d="M1059.3,112.0 L1056.1,110.8 L1052.9,109.5 L1049.7,108.3 L1046.6,107.1 L1043.5,105.9 L1040.3,104.8 L1037.3,103.6 L1034.2,102.5 L1031.1,101.3 L1028.1,100.2 L1025.1,99.2 L1022.2,98.1 L1019.2,97.1 L1016.3,96.0 L1013.5,95.0 L1010.6,94.1 L1007.8,93.1 L1005.1,92.2 L1002.3,91.3 L999.7,90.4 L997.0,89.6 L994.4,88.8 L991.9,88.0 L989.4,87.3 L986.9,86.5 L984.5,85.9 L982.1,85.2 L979.8,84.6 L977.6,84.1 L975.4,83.6 L973.2,83.1 L971.1,82.7 L969.1,82.3 L967.1,81.9 L965.1,81.6 L963.2,81.4 L961.4,81.2 L959.6,81.0 L957.9,80.9 L956.2,80.8 L954.5,80.8 L952.9,80.9 L951.4,80.9 L949.9,81.1 L948.4,81.2 L947.0,81.5 L945.6,81.8 L944.3,82.1 L942.9,82.4 L941.7,82.8 L940.4,83.3 L939.2,83.8 L938.0,84.3 L936.8,84.9 L935.6,85.5 L934.5,86.2 L933.4,86.9 L932.3,87.6 L931.2,88.3 L930.1,89.1 L929.1,90.0 L928.0,90.8 L927.0,91.7 L926.0,92.6 L925.0,93.5 L924.0,94.5 L923.0,95.5 L922.0,96.5 L921.0,97.5 L920.0,98.6 L919.0,99.7 L918.0,100.7 L917.1,101.9 L916.1,103.0 L915.1,104.1 L914.2,105.3 L913.2,106.5 L912.3,107.7 L911.3,108.9 L910.3,110.1 L909.4,111.3 L908.4,112.6 L907.5,113.8 L906.5,115.1 L905.6,116.4 L904.6,117.7 L903.7,119.0 L902.7,120.3 L901.7,121.6 L900.8,122.9 L899.8,124.3 L898.9,125.6 L897.9,127.0 L897.0,128.3 L896.0,129.7 L895.1,131.1 L894.1,132.4 L893.1,133.8 L892.2,135.2 L891.2,136.6 L890.3,138.0 L889.3,139.4 L888.4,140.8 L887.4,142.3 L886.5,143.7 L885.5,145.1 L884.6,146.5 L883.6,148.0 L882.6,149.4 L881.7,150.9 L880.7,152.3 L879.8,153.8 L878.8,155.2 L877.9,156.7 L877.0,158.1 L876.0,159.6 L875.1,161.1 L874.1,162.5 L873.2,164.0 L872.2,165.5 L871.3,167.0 L870.4,168.5 L869.4,169.9 L868.5,171.4 L867.5,172.9 L866.6,174.4 L865.7,175.9 L864.8,177.4 L863.8,178.9 L862.9,180.4 L862.0,181.9 L861.1,183.4 L860.2,184.9 L859.2,186.4 L858.3,187.9 L857.4,189.5 L856.5,191.0 L855.6,192.5 L854.7,194.0 L853.8,195.5 L852.9,197.0 L852.0,198.6 L851.1,200.1 L850.2,201.6 L849.4,203.1 L848.5,204.7 L847.6,206.2 L846.7,207.7 L845.9,209.3 L845.0,210.8 L844.1,212.3 L843.3,213.9 L842.4,215.4 L841.6,216.9 L840.7,218.5 L839.9,220.0 L839.0,221.5 L838.2,223.1 L837.4,224.6 L836.5,226.2 L835.7,227.7 L834.9,229.2 L834.1,230.8 L833.3,232.3 L832.5,233.9 L831.7,235.4 L830.9,237.0 L830.1,238.5 L829.3,240.1 L828.5,241.6 L827.7,243.2 L827.0,244.7 L826.2,246.3 L825.5,247.8 L824.7,249.4 L823.9,250.9 L823.2,252.5 L822.5,254.0 L821.7,255.6 L821.0,257.1 L820.3,258.7 L819.6,260.2 L818.9,261.8 L818.1,263.3 L817.5,264.9 L816.8,266.4 L816.1,268.0 L815.4,269.6 L814.7,271.1 L814.0,272.7 L813.4,274.2 L812.7,275.8 L812.1,277.3 L811.4,278.9 L810.8,280.5 L810.2,282.0 L809.5,283.6 L808.9,285.1 L808.3,286.7" stroke="#ff2000" stroke-opacity="1.0" stroke-width="1.39" stroke-dasharray="1.39 2.29"/>
<path d="M1059.3,112.0 L1063.7,113.7 L1068.1,115.4 L1072.5,117.1 L1077.0,118.8 L1081.4,120.6 L1085.9,122.4 L1090.4,124.2 L1094.9,126.0" stroke="#ff2000" stroke-width="1.39" stroke-opacity="1.0"/>
<circle cx="1094.9" cy="126.0" r="1.2" fill="#ff6347" stroke="none"/>
<path d="M885.1,92.1 L884.7,93.1 L884.3,94.1 L883.8,95.0 L883.4,96.0 L883.0,97.0 L882.6,98.0 L882.1,98.9 L881.7,99.9 L881.3,100.9 L880.9,101.9 L880.5,102.9 L880.0,103.8 L879.6,104.8 L879.2,105.8 L878.8,106.8 L878.4,107.8 L878.0,108.8 L877.5,109.7 L877.1,110.7 L876.7,111.7 L876.3,112.7 L875.9,113.7 L875.5,114.6 L875.1,115.6 L874.7,116.6 L874.2,117.6 L873.8,118.6 L873.4,119.6 L873.0,120.5 L872.6,121.5 L872.2,122.5 L871.8,123.5 L871.4,124.5 L871.0,125.5 L870.6,126.5 L870.2,127.4 L869.8,128.4 L869.4,129.4 L869.0,130.4 L868.6,131.4 L868.2,132.4 L867.8,133.4 L867.4,134.3 L867.0,135.3 L866.6,136.3 L866.2,137.3 L865.8,138.3 L865.4,139.3 L865.0,140.3 L864.7,141.2 L864.3,142.2 L863.9,143.2 L863.5,144.2 L863.1,145.2 L862.7,146.2 L862.3,147.2 L862.0,148.1 L861.6,149.1 L861.2,150.1 L860.8,151.1 L860.4,152.1 L860.1,153.1 L859.7,154.1 L859.3,155.1 L859.0,156.0 L858.6,157.0 L858.2,158.0 L857.8,159.0 L857.5,160.0 L857.1,161.0 L856.7,162.0 L856.4,163.0 L856.0,163.9 L855.7,164.9 L855.3,165.9 L854.9,166.9 L854.6,167.9 L854.2,168.9 L853.9,169.9 L853.5,170.9 L853.2,171.9 L852.8,172.8 L852.5,173.8 L852.1,174.8 L851.8,175.8 L851.4,176.8 L851.1,177.8 L850.7,178.8 L850.4,179.8 L850.1,180.7 L849.7,181.7 L849.4,182.7 L849.1,183.7 L848.7,184.7 L848.4,185.7 L848.1,186.7 L847.7,187.7 L847.4,188.7 L847.1,189.6 L846.8,190.6 L846.4,191.6 L846.1,192.6 L845.8,193.6 L845.5,194.6 L845.2,195.6 L844.8,196.6 L844.5,197.6 L844.2,198.5 L843.9,199.5 L843.6,200.5 L843.3,201.5 L843.0,202.5 L842.7,203.5 L842.4,204.5 L842.1,205.5 L841.8,206.5 L841.5,207.4 L841.2,208.4 L840.9,209.4 L840.6,210.4 L840.3,211.4 L840.0,212.4 L839.8,213.4 L839.5,214.4 L839.2,215.4 L838.9,216.3 L838.6,217.3 L838.4,218.3 L838.1,219.3 L837.8,220.3 L837.5,221.3 L837.3,222.3 L837.0,223.3 L836.7,224.3 L836.5,225.3 L836.2,226.2 L835.9,227.2 L835.7,228.2 L835.4,229.2 L835.2,230.2 L834.9,231.2 L834.7,232.2 L834.4,233.2 L834.2,234.2 L833.9,235.1 L833.7,236.1 L833.4,237.1 L833.2,238.1 L833.0,239.1 L832.7,240.1 L832.5,241.1 L832.3,242.1 L832.0,243.1 L831.8,244.1 L831.6,245.0 L831.4,246.0 L831.1,247.0 L830.9,248.0 L830.7,249.0 L830.5,250.0 L830.3,251.0 L830.1,252.0 L829.8,253.0 L829.6,254.0 L829.4,254.9 L829.2,255.9 L829.0,256.9 L828.8,257.9 L828.6,258.9 L828.4,259.9 L828.2,260.9 L828.1,261.9 L827.9,262.9 L827.7,263.9 L827.5,264.8 L827.3,265.8 L827.1,266.8 L826.9,267.8 L826.8,268.8 L826.6,269.8 L826.4,270.8 L826.3,271.8 L826.1,272.8 L825.9,273.8 L825.8,274.7 L825.6,275.7 L825.4,276.7 L825.3,277.7 L825.1,278.7 L825.0,279.7 L824.8,280.7 L824.7,281.7 L824.5,282.7 L824.4,283.7 L824.2,284.6 L824.1,285.6 L824.0,286.6 L823.8,287.6 L823.7,288.6" stroke="#ff2000" stroke-opacity="1.0" stroke-width="1.39" stroke-dasharray="1.39 2.29"/>
<path d="M885.1,92.1 L887.0,87.6 L888.9,83.2 L890.8,78.7 L892.7,74.3 L894.7,69.9 L896.6,65.5 L898.5,61.2 L900.4,56.9 L902.3,52.7 L904.2,48.7" stroke="#ff2000" stroke-width="1.39" stroke-opacity="1.0"/>
<circle cx="904.2" cy="48.7" r="1.2" fill="#ff6347" stroke="none"/>
<path d="M898.0,34.9 L897.5,36.2 L897.0,37.4 L896.6,38.7 L896.1,40.0 L895.6,41.3 L895.1,42.5 L894.6,43.8 L894.1,45.1 L893.7,46.4 L893.2,47.7 L892.7,49.0 L892.2,50.3 L891.7,51.5 L891.2,52.8 L890.7,54.1 L890.3,55.4 L889.8,56.7 L889.3,58.0 L888.8,59.3 L888.3,60.6 L887.9,61.8 L887.4,63.1 L886.9,64.4 L886.4,65.7 L885.9,67.0 L885.5,68.3 L885.0,69.6 L884.5,70.9 L884.0,72.2 L883.6,73.4 L883.1,74.7 L882.6,76.0 L882.1,77.3 L881.7,78.6 L881.2,79.9 L880.7,81.2 L880.3,82.5 L879.8,83.8 L879.3,85.1 L878.9,86.3 L878.4,87.6 L878.0,88.9 L877.5,90.2 L877.0,91.5 L876.6,92.8 L876.1,94.1 L875.7,95.4 L875.2,96.7 L874.8,97.9 L874.3,99.2 L873.9,100.5 L873.4,101.8 L873.0,103.1 L872.5,104.4 L872.1,105.7 L871.6,107.0 L871.2,108.3 L870.7,109.6 L870.3,110.8 L869.9,112.1 L869.4,113.4 L869.0,114.7 L868.6,116.0 L868.1,117.3 L867.7,118.6 L867.3,119.9 L866.9,121.2 L866.4,122.4 L866.0,123.7 L865.6,125.0 L865.2,126.3 L864.7,127.6 L864.3,128.9 L863.9,130.2 L863.5,131.5 L863.1,132.8 L862.7,134.1 L862.3,135.3 L861.9,136.6 L861.5,137.9 L861.1,139.2 L860.7,140.5 L860.3,141.8 L859.9,143.1 L859.5,144.4 L859.1,145.7 L858.7,146.9 L858.3,148.2 L857.9,149.5 L857.6,150.8 L857.2,152.1 L856.8,153.4 L856.4,154.7 L856.1,156.0 L855.7,157.3 L855.3,158.6 L854.9,159.8 L854.6,161.1 L854.2,162.4 L853.9,163.7 L853.5,165.0 L853.2,166.3 L852.8,167.6 L852.4,168.9 L852.1,170.2 L851.8,171.5 L851.4,172.7 L851.1,174.0 L850.7,175.3 L850.4,176.6 L850.1,177.9 L849.7,179.2 L849.4,180.5 L849.1,181.8 L848.8,183.1 L848.4,184.4 L848.1,185.6 L847.8,186.9 L847.5,188.2 L847.2,189.5 L846.9,190.8 L846.6,192.1 L846.3,193.4 L846.0,194.7 L845.7,196.0 L845.4,197.2 L845.1,198.5 L844.8,199.8 L844.5,201.1 L844.2,202.4 L843.9,203.7 L843.7,205.0 L843.4,206.3 L843.1,207.6 L842.8,208.9 L842.6,210.1 L842.3,211.4 L842.1,212.7 L841.8,214.0 L841.5,215.3 L841.3,216.6 L841.0,217.9 L840.8,219.2 L840.6,220.5 L840.3,221.8 L840.1,223.0 L839.8,224.3 L839.6,225.6 L839.4,226.9 L839.2,228.2 L838.9,229.5 L838.7,230.8 L838.5,232.1 L838.3,233.4 L838.1,234.7 L837.9,235.9 L837.7,237.2 L837.5,238.5 L837.3,239.8 L837.1,241.1 L836.9,242.4 L836.7,243.7 L836.5,245.0 L836.3,246.3 L836.1,247.5 L836.0,248.8 L835.8,250.1 L835.6,251.4 L835.5,252.7 L835.3,254.0 L835.1,255.3 L835.0,256.6 L834.8,257.9 L834.7,259.2 L834.5,260.4 L834.4,261.7 L834.3,263.0 L834.1,264.3 L834.0,265.6 L833.9,266.9 L833.7,268.2 L833.6,269.5 L833.5,270.8 L833.4,272.1 L833.2,273.3 L833.1,274.6 L833.0,275.9 L832.9,277.2 L832.8,278.5 L832.7,279.8 L832.6,281.1 L832.5,282.4 L832.5,283.7 L832.4,285.0 L832.3,286.2 L832.2,287.5 L832.1,288.8 L832.1,290.1 L832.0,291.4" stroke="#ff2000" stroke-opacity="1.0" stroke-width="1.39" stroke-dasharray="1.39 2.29"/>
<path d="M898.9,31.6 L900.7,29.3" stroke="#ff2000" stroke-width="1.39"/>
<path d="M916.7,31.8 L925.1,35.1" stroke="#ff2000" stroke-width="1.39"/>
<circle cx="925.1" cy="35.1" r="1.2" fill="#ff6347" stroke="none"/>
<path d="M876.0,97.3 L877.4,98.0 L878.8,98.8 L880.2,99.5 L881.6,100.4 L882.9,101.2 L884.3,102.1 L885.6,103.0 L887.0,104.0 L888.3,104.9 L889.7,105.9 L891.0,107.0 L892.3,108.0 L893.6,109.1 L895.0,110.2 L896.3,111.3 L897.6,112.5 L898.9,113.7 L900.3,114.8 L901.6,116.1 L902.9,117.3 L904.2,118.5 L905.5,119.8 L906.9,121.1 L908.2,122.4 L909.5,123.7 L910.8,125.0 L912.1,126.3 L913.5,127.7 L914.8,129.0 L916.1,130.4 L917.4,131.8 L918.8,133.2 L920.1,134.6 L921.4,136.0 L922.7,137.5 L924.1,138.9 L925.4,140.3 L926.7,141.8 L928.1,143.3 L929.4,144.7 L930.7,146.2 L932.0,147.7 L933.4,149.2 L934.7,150.7 L936.0,152.2 L937.4,153.7 L938.7,155.3 L940.0,156.8 L941.3,158.3 L942.6,159.9 L944.0,161.4 L945.3,163.0 L946.6,164.5 L947.9,166.1 L949.2,167.6 L950.5,169.2 L951.9,170.8 L953.2,172.4 L954.5,173.9 L955.8,175.5 L957.1,177.1 L958.4,178.7 L959.7,180.3 L960.9,181.9 L962.2,183.5 L963.5,185.1 L964.8,186.7 L966.1,188.4 L967.3,190.0 L968.6,191.6 L969.9,193.2 L971.1,194.8 L972.4,196.5 L973.6,198.1 L974.9,199.7 L976.1,201.4 L977.4,203.0 L978.6,204.6 L979.8,206.3 L981.0,207.9 L982.2,209.6 L983.4,211.2 L984.6,212.9 L985.8,214.5 L987.0,216.2 L988.2,217.8 L989.4,219.5 L990.6,221.1 L991.7,222.8 L992.9,224.5 L994.0,226.1 L995.2,227.8 L996.3,229.5 L997.5,231.1 L998.6,232.8 L999.7,234.5 L1000.8,236.1 L1001.9,237.8 L1003.0,239.5 L1004.1,241.2 L1005.2,242.8 L1006.2,244.5 L1007.3,246.2 L1008.3,247.9 L1009.4,249.5 L1010.4,251.2 L1011.4,252.9 L1012.5,254.6 L1013.5,256.3 L1014.5,258.0 L1015.5,259.6 L1016.4,261.3 L1017.4,263.0 L1018.4,264.7 L1019.3,266.4 L1020.3,268.1 L1021.2,269.8 L1022.1,271.5 L1023.1,273.1 L1024.0,274.8 L1024.9,276.5 L1025.7,278.2 L1026.6,279.9 L1027.5,281.6 L1028.3,283.3 L1029.2,285.0 L1030.0,286.7 L1030.8,288.4 L1031.7,290.1 L1032.5,291.8 L1033.3,293.5 L1034.0,295.2 L1034.8,296.8 L1035.6,298.5 L1036.3,300.2 L1037.1,301.9 L1037.8,303.6 L1038.5,305.3 L1039.2,307.0 L1039.9,308.7 L1040.6,310.4 L1041.2,312.1 L1041.9,313.8 L1042.5,315.5 L1043.2,317.2 L1043.8,318.9 L1044.4,320.6 L1045.0,322.3 L1045.6,324.0 L1046.2,325.7 L1046.7,327.4 L1047.3,329.1 L1047.8,330.8 L1048.4,332.5 L1048.9,334.2 L1049.4,335.9 L1049.9,337.6 L1050.4,339.3 L1050.8,341.0 L1051.3,342.7 L1051.7,344.4 L1052.2,346.1 L1052.6,347.7 L1053.0,349.4 L1053.4,351.1 L1053.8,352.8 L1054.1,354.5 L1054.5,356.2 L1054.8,357.9 L1055.1,359.6 L1055.5,361.3 L1055.8,363.0 L1056.1,364.7 L1056.3,366.4 L1056.6,368.1 L1056.9,369.7 L1057.1,371.4 L1057.3,373.1 L1057.6,374.8 L1057.8,376.5 L1058.0,378.2 L1058.1,379.9 L1058.3,381.6 L1058.5,383.2 L1058.6,384.9 L1058.7,386.6 L1058.9,388.3 L1059.0,390.0 L1059.1,391.7 L1059.1,393.3 L1059.2,395.0 L1059.3,396.7 L1059.3,398.4 L1059.3,400.0 L1059.3,401.7 L1059.4,403.4 L1059.3,405.1 L1059.3,406.7 L1059.3,408.4" stroke="#e020ff" stroke-opacity="1.0" stroke-width="1.39" stroke-dasharray="1.39 2.29"/>
<path d="M876.0,97.3 L870.4,94.9 L864.5,93.2 L858.2,92.1" stroke="#e020ff" stroke-width="1.39" stroke-opacity="1.0"/>
<circle cx="858.2" cy="92.1" r="1.2" fill="#ff6347" stroke="none"/>
<path d="M878.6,91.6 L880.2,92.0 L881.8,92.5 L883.3,93.0 L884.9,93.5 L886.4,94.1 L887.9,94.8 L889.5,95.4 L891.0,96.1 L892.5,96.9 L894.0,97.7 L895.5,98.5 L897.0,99.3 L898.5,100.2 L900.0,101.1 L901.4,102.1 L902.9,103.0 L904.4,104.0 L905.9,105.1 L907.4,106.1 L908.9,107.2 L910.4,108.3 L911.9,109.4 L913.4,110.5 L914.9,111.7 L916.4,112.9 L917.9,114.1 L919.4,115.3 L920.9,116.6 L922.5,117.8 L924.0,119.1 L925.5,120.4 L927.0,121.7 L928.5,123.0 L930.1,124.3 L931.6,125.7 L933.1,127.0 L934.6,128.4 L936.2,129.8 L937.7,131.1 L939.3,132.5 L940.8,133.9 L942.3,135.4 L943.9,136.8 L945.4,138.2 L946.9,139.7 L948.5,141.1 L950.0,142.6 L951.6,144.1 L953.1,145.6 L954.6,147.0 L956.2,148.5 L957.7,150.0 L959.2,151.5 L960.8,153.0 L962.3,154.6 L963.8,156.1 L965.4,157.6 L966.9,159.1 L968.4,160.7 L969.9,162.2 L971.5,163.8 L973.0,165.3 L974.5,166.9 L976.0,168.5 L977.5,170.0 L979.0,171.6 L980.5,173.2 L982.0,174.7 L983.5,176.3 L985.0,177.9 L986.5,179.5 L987.9,181.1 L989.4,182.7 L990.9,184.3 L992.3,185.9 L993.8,187.5 L995.3,189.1 L996.7,190.7 L998.1,192.3 L999.6,193.9 L1001.0,195.5 L1002.4,197.2 L1003.8,198.8 L1005.2,200.4 L1006.6,202.0 L1008.0,203.7 L1009.4,205.3 L1010.8,206.9 L1012.2,208.5 L1013.5,210.2 L1014.9,211.8 L1016.2,213.5 L1017.6,215.1 L1018.9,216.7 L1020.2,218.4 L1021.5,220.0 L1022.8,221.7 L1024.1,223.3 L1025.4,225.0 L1026.7,226.6 L1028.0,228.3 L1029.2,229.9 L1030.5,231.6 L1031.7,233.2 L1033.0,234.9 L1034.2,236.6 L1035.4,238.2 L1036.6,239.9 L1037.8,241.5 L1039.0,243.2 L1040.1,244.9 L1041.3,246.5 L1042.4,248.2 L1043.6,249.9 L1044.7,251.5 L1045.8,253.2 L1046.9,254.9 L1048.0,256.5 L1049.1,258.2 L1050.1,259.9 L1051.2,261.5 L1052.2,263.2 L1053.3,264.9 L1054.3,266.6 L1055.3,268.2 L1056.3,269.9 L1057.3,271.6 L1058.3,273.2 L1059.2,274.9 L1060.2,276.6 L1061.1,278.3 L1062.0,280.0 L1062.9,281.6 L1063.8,283.3 L1064.7,285.0 L1065.6,286.7 L1066.4,288.3 L1067.3,290.0 L1068.1,291.7 L1068.9,293.4 L1069.7,295.1 L1070.5,296.7 L1071.3,298.4 L1072.1,300.1 L1072.8,301.8 L1073.5,303.5 L1074.3,305.2 L1075.0,306.8 L1075.7,308.5 L1076.3,310.2 L1077.0,311.9 L1077.6,313.6 L1078.3,315.2 L1078.9,316.9 L1079.5,318.6 L1080.1,320.3 L1080.7,322.0 L1081.2,323.7 L1081.8,325.3 L1082.3,327.0 L1082.8,328.7 L1083.4,330.4 L1083.8,332.1 L1084.3,333.7 L1084.8,335.4 L1085.2,337.1 L1085.7,338.8 L1086.1,340.5 L1086.5,342.2 L1086.9,343.8 L1087.2,345.5 L1087.6,347.2 L1087.9,348.9 L1088.2,350.6 L1088.6,352.2 L1088.9,353.9 L1089.1,355.6 L1089.4,357.3 L1089.7,359.0 L1089.9,360.6 L1090.1,362.3 L1090.3,364.0 L1090.5,365.7 L1090.7,367.3 L1090.8,369.0 L1091.0,370.7 L1091.1,372.4 L1091.2,374.0 L1091.3,375.7 L1091.4,377.4 L1091.5,379.1 L1091.5,380.7 L1091.6,382.4 L1091.6,384.1 L1091.6,385.7 L1091.6,387.4 L1091.6,389.1 L1091.5,390.7 L1091.5,392.4" stroke="#e020ff" stroke-opacity="1.0" stroke-width="1.39" stroke-dasharray="1.39 2.29"/>
<path d="M878.6,91.6 L875.5,91.0 L872.3,90.5 L869.1,90.2" stroke="#e020ff" stroke-width="1.39" stroke-opacity="1.0"/>
<circle cx="869.1" cy="90.2" r="1.2" fill="#ff6347" stroke="none"/>
<path d="M841.1,63.8 L844.9,61.7 L848.7,59.7 L852.5,57.7 L856.2,55.6 L860.0,53.6 L863.8,51.6 L867.5,49.6 L871.3,47.6 L875.0,45.6 L878.6,43.6 L882.2,41.7 L885.8,39.9 L889.2,38.1 L892.4,36.5 L895.4,35.1 L898.1,34.0 L900.3,33.6 L902.4,33.9 L904.4,34.8 L906.5,36.2 L908.8,37.8 L911.1,39.5 L913.5,41.4 L916.0,43.3 L918.5,45.2 L921.0,47.2 L923.6,49.2 L926.1,51.2 L928.7,53.2 L931.3,55.2 L933.9,57.3 L936.4,59.3 L939.0,61.4 L941.6,63.4 L944.2,65.5 L946.8,67.5 L949.3,69.6 L951.9,71.6 L954.5,73.7 L957.0,75.8 L959.6,77.8 L962.1,79.9 L964.7,82.0 L967.2,84.0 L969.8,86.1 L972.3,88.2 L974.8,90.3 L977.3,92.3 L979.8,94.4 L982.3,96.5 L984.8,98.6 L987.2,100.6 L989.7,102.7 L992.2,104.8 L994.6,106.9 L997.0,108.9 L999.4,111.0 L1001.8,113.1 L1004.2,115.2 L1006.6,117.2 L1009.0,119.3 L1011.3,121.4 L1013.7,123.5 L1016.0,125.5 L1018.3,127.6 L1020.6,129.7 L1022.9,131.8 L1025.2,133.9 L1027.4,135.9 L1029.7,138.0 L1031.9,140.1 L1034.1,142.2 L1036.3,144.2 L1038.5,146.3 L1040.6,148.4 L1042.8,150.5 L1044.9,152.6 L1047.0,154.6 L1049.1,156.7 L1051.1,158.8 L1053.2,160.9 L1055.2,163.0 L1057.2,165.0 L1059.2,167.1 L1061.2,169.2 L1063.2,171.3 L1065.1,173.4 L1067.0,175.4 L1068.9,177.5 L1070.8,179.6 L1072.6,181.7 L1074.5,183.8 L1076.3,185.8 L1078.1,187.9 L1079.8,190.0 L1081.6,192.1 L1083.3,194.2 L1085.0,196.2 L1086.7,198.3 L1088.3,200.4 L1090.0,202.5 L1091.6,204.6 L1093.2,206.6 L1094.7,208.7 L1096.3,210.8 L1097.8,212.9 L1099.3,215.0 L1100.7,217.0 L1102.2,219.1 L1103.6,221.2 L1105.0,223.3 L1106.3,225.4 L1107.7,227.4 L1109.0,229.5 L1110.3,231.6 L1111.5,233.7 L1112.8,235.8 L1114.0,237.9 L1115.1,239.9 L1116.3,242.0 L1117.4,244.1 L1118.5,246.2 L1119.6,248.3 L1120.6,250.3 L1121.7,252.4 L1122.7,254.5 L1123.6,256.6 L1124.6,258.7 L1125.5,260.7 L1126.4,262.8 L1127.2,264.9 L1128.0,267.0 L1128.8,269.1 L1129.6,271.1 L1130.4,273.2 L1131.1,275.3 L1131.8,277.4 L1132.4,279.5 L1133.0,281.5 L1133.6,283.6 L1134.2,285.7 L1134.7,287.8 L1135.3,289.9 L1135.7,292.0 L1136.2,294.0 L1136.6,296.1 L1137.0,298.2 L1137.4,300.3 L1137.7,302.4 L1138.0,304.4 L1138.3,306.5 L1138.6,308.6 L1138.8,310.7 L1139.0,312.8 L1139.1,314.8 L1139.3,316.9 L1139.4,319.0 L1139.4,321.1 L1139.5,323.2 L1139.5,325.2 L1139.5,327.3 L1139.4,329.4 L1139.4,331.5 L1139.2,333.6 L1139.1,335.7 L1139.0,337.7 L1138.8,339.8 L1138.5,341.9 L1138.3,344.0 L1138.0,346.1 L1137.7,348.1 L1137.3,350.2 L1137.0,352.3 L1136.6,354.4 L1136.1,356.5 L1135.7,358.5 L1135.2,360.6 L1134.7,362.7 L1134.1,364.8 L1133.6,366.9 L1133.0,368.9 L1132.3,371.0 L1131.7,373.1 L1131.0,375.2 L1130.3,377.3 L1129.5,379.4 L1128.8,381.4 L1128.0,383.5 L1127.1,385.6 L1126.3,387.7 L1125.4,389.8 L1124.5,391.8 L1123.5,393.9 L1122.6,396.0 L1121.6,398.1 L1120.5,400.2 L1119.5,402.2 L1118.4,404.3 L1117.3,406.4" stroke="#e020ff" stroke-opacity="1.0" stroke-width="1.39" stroke-dasharray="1.39 2.29"/>
<path d="M841.1,63.8 L836.8,66.1 L832.5,68.4 L828.3,70.6 L824.0,72.9 L819.7,75.2 L815.5,77.5 L811.2,79.8" stroke="#e020ff" stroke-width="1.39" stroke-opacity="1.0"/>
<circle cx="811.2" cy="79.8" r="1.2" fill="#ff6347" stroke="none"/>
<path d="M840.0,54.7 L841.4,54.6 L842.6,54.6 L843.8,54.6 L844.8,54.6 L845.7,54.8 L846.6,54.9 L847.3,55.1 L847.9,55.4 L848.5,55.7 L848.9,56.0 L849.3,56.4 L849.6,56.9 L849.8,57.3 L850.0,57.9 L850.1,58.4 L850.1,59.0 L850.1,59.6 L850.1,60.2 L850.0,60.9 L849.8,61.6 L849.7,62.3 L849.4,63.1 L849.2,63.9 L848.9,64.6 L848.6,65.5 L848.3,66.3 L847.9,67.1 L847.6,68.0 L847.2,68.9 L846.8,69.8 L846.4,70.7 L845.9,71.6 L845.5,72.5 L845.0,73.4 L844.5,74.4 L844.1,75.4 L843.6,76.3 L843.1,77.3 L842.5,78.3 L842.0,79.3 L841.5,80.3 L841.0,81.3 L840.4,82.3 L839.9,83.3 L839.4,84.3 L838.8,85.4 L838.3,86.4 L837.7,87.4 L837.2,88.5 L836.6,89.5 L836.0,90.6 L835.5,91.6 L834.9,92.7 L834.3,93.8 L833.8,94.8 L833.2,95.9 L832.6,97.0 L832.1,98.1 L831.5,99.1 L830.9,100.2 L830.4,101.3 L829.8,102.4 L829.2,103.5 L828.7,104.6 L828.1,105.7 L827.5,106.8 L827.0,107.9 L826.4,109.0 L825.8,110.1 L825.3,111.2 L824.7,112.3 L824.1,113.4 L823.6,114.5 L823.0,115.6 L822.5,116.7 L821.9,117.8 L821.4,118.9 L820.8,120.1 L820.3,121.2 L819.7,122.3 L819.2,123.4 L818.6,124.5 L818.1,125.6 L817.6,126.8 L817.0,127.9 L816.5,129.0 L816.0,130.1 L815.4,131.3 L814.9,132.4 L814.4,133.5 L813.9,134.7 L813.3,135.8 L812.8,136.9 L812.3,138.0 L811.8,139.2 L811.3,140.3 L810.8,141.4 L810.3,142.6 L809.8,143.7 L809.3,144.8 L808.8,146.0 L808.3,147.1 L807.8,148.3 L807.3,149.4 L806.9,150.5 L806.4,151.7 L805.9,152.8 L805.4,153.9 L805.0,155.1 L804.5,156.2 L804.1,157.4 L803.6,158.5 L803.1,159.6 L802.7,160.8 L802.2,161.9 L801.8,163.1 L801.4,164.2 L800.9,165.4 L800.5,166.5 L800.1,167.6 L799.6,168.8 L799.2,169.9 L798.8,171.1 L798.4,172.2 L798.0,173.4 L797.6,174.5 L797.2,175.7 L796.8,176.8 L796.4,178.0 L796.0,179.1 L795.6,180.3 L795.2,181.4 L794.8,182.6 L794.5,183.7 L794.1,184.9 L793.7,186.0 L793.4,187.1 L793.0,188.3 L792.6,189.4 L792.3,190.6 L792.0,191.7 L791.6,192.9 L791.3,194.0 L790.9,195.2 L790.6,196.3 L790.3,197.5 L790.0,198.7 L789.6,199.8 L789.3,201.0 L789.0,202.1 L788.7,203.3 L788.4,204.4 L788.1,205.6 L787.8,206.7 L787.5,207.9 L787.2,209.0 L787.0,210.2 L786.7,211.3 L786.4,212.5 L786.2,213.6 L785.9,214.8 L785.6,215.9 L785.4,217.1 L785.1,218.2 L784.9,219.4 L784.7,220.6 L784.4,221.7 L784.2,222.9 L784.0,224.0 L783.7,225.2 L783.5,226.3 L783.3,227.5 L783.1,228.6 L782.9,229.8 L782.7,230.9 L782.5,232.1 L782.3,233.3 L782.1,234.4 L781.9,235.6 L781.8,236.7 L781.6,237.9 L781.4,239.0 L781.3,240.2 L781.1,241.4 L781.0,242.5 L780.8,243.7 L780.7,244.8 L780.5,246.0 L780.4,247.1 L780.3,248.3 L780.1,249.4 L780.0,250.6 L779.9,251.8 L779.8,252.9 L779.7,254.1 L779.6,255.2 L779.5,256.4 L779.4,257.5 L779.3,258.7" stroke="#e020ff" stroke-opacity="1.0" stroke-width="1.39" stroke-dasharray="1.39 2.29"/>
<path d="M840.0,54.7 L837.9,54.8 L835.4,55.0 L832.7,55.4" stroke="#e020ff" stroke-width="1.39" stroke-opacity="1.0"/>
<circle cx="832.7" cy="55.4" r="1.2" fill="#ff6347" stroke="none"/>
<path d="M874.1,83.6 L874.8,83.0 L875.5,82.4 L876.2,81.8 L876.8,81.2 L877.5,80.6 L878.2,80.0 L878.9,79.4 L879.6,78.8 L880.2,78.2 L880.9,77.6 L881.6,77.1 L882.3,76.5 L882.9,75.9 L883.6,75.4 L884.3,74.8 L884.9,74.2 L885.6,73.7 L886.3,73.1 L886.9,72.6 L887.6,72.1 L888.2,71.5 L888.9,71.0 L889.6,70.5 L890.2,70.0 L890.9,69.5 L891.5,69.0 L892.2,68.5 L892.8,68.0 L893.5,67.5 L894.1,67.0 L894.7,66.5 L895.4,66.1 L896.0,65.6 L896.7,65.2 L897.3,64.8 L897.9,64.3 L898.6,63.9 L899.2,63.5 L899.8,63.1 L900.5,62.7 L901.1,62.3 L901.7,62.0 L902.4,61.6 L903.0,61.3 L903.6,60.9 L904.3,60.6 L904.9,60.3 L905.5,60.0 L906.2,59.7 L906.8,59.5 L907.4,59.2 L908.1,59.0 L908.7,58.8 L909.4,58.6 L910.0,58.4 L910.7,58.2 L911.3,58.0 L912.0,57.9 L912.7,57.8 L913.4,57.7 L914.0,57.6 L914.7,57.5 L915.4,57.4 L916.1,57.4 L916.8,57.4 L917.6,57.4 L918.3,57.4 L919.0,57.4 L919.8,57.5 L920.5,57.5 L921.3,57.6 L922.1,57.7 L922.9,57.8 L923.7,57.9 L924.5,58.1 L925.3,58.3 L926.1,58.4 L927.0,58.6 L927.8,58.8 L928.7,59.1 L929.6,59.3 L930.5,59.6 L931.4,59.8 L932.3,60.1 L933.3,60.4 L934.2,60.7 L935.2,61.1 L936.1,61.4 L937.1,61.7 L938.1,62.1 L939.1,62.5 L940.1,62.8 L941.2,63.2 L942.2,63.6 L943.2,64.0 L944.3,64.5 L945.4,64.9 L946.5,65.3 L947.5,65.8 L948.6,66.2 L949.7,66.7 L950.9,67.2 L952.0,67.6 L953.1,68.1 L954.3,68.6 L955.4,69.1 L956.6,69.6 L957.7,70.1 L958.9,70.7 L960.1,71.2 L961.3,71.7 L962.5,72.2 L963.7,72.8 L964.9,73.3 L966.1,73.9 L967.3,74.4 L968.5,75.0 L969.7,75.6 L971.0,76.1 L972.2,76.7 L973.4,77.3 L974.7,77.8 L975.9,78.4 L977.2,79.0 L978.5,79.6 L979.7,80.2 L981.0,80.8 L982.3,81.4 L983.5,82.0 L984.8,82.6 L986.1,83.2 L987.4,83.8 L988.7,84.4 L989.9,85.0 L991.2,85.6 L992.5,86.3 L993.8,86.9 L995.1,87.5 L996.4,88.1 L997.7,88.8 L999.0,89.4 L1000.3,90.0 L1001.6,90.7 L1003.0,91.3 L1004.3,91.9 L1005.6,92.6 L1006.9,93.2 L1008.2,93.9 L1009.5,94.5 L1010.8,95.1 L1012.2,95.8 L1013.5,96.4 L1014.8,97.1 L1016.1,97.7 L1017.4,98.4 L1018.8,99.0 L1020.1,99.7 L1021.4,100.4 L1022.7,101.0 L1024.1,101.7 L1025.4,102.3 L1026.7,103.0 L1028.0,103.7 L1029.4,104.3 L1030.7,105.0 L1032.0,105.6 L1033.3,106.3 L1034.6,107.0 L1036.0,107.6 L1037.3,108.3 L1038.6,109.0 L1039.9,109.6 L1041.3,110.3 L1042.6,111.0 L1043.9,111.7 L1045.2,112.3 L1046.5,113.0 L1047.9,113.7 L1049.2,114.4 L1050.5,115.0 L1051.8,115.7 L1053.1,116.4 L1054.4,117.1 L1055.8,117.8 L1057.1,118.4 L1058.4,119.1 L1059.7,119.8 L1061.0,120.5 L1062.3,121.2 L1063.6,121.8 L1064.9,122.5 L1066.2,123.2 L1067.5,123.9 L1068.8,124.6 L1070.1,125.3 L1071.4,125.9 L1072.7,126.6 L1074.0,127.3 L1075.3,128.0" stroke="#ffee00" stroke-opacity="1.0" stroke-width="1.39" stroke-dasharray="1.39 2.29"/>
<path d="M874.1,83.6 L871.2,86.0 L868.2,88.4 L865.2,90.9" stroke="#ffee00" stroke-width="1.39" stroke-opacity="1.0"/>
<circle cx="865.2" cy="90.9" r="1.2" fill="#ff6347" stroke="none"/>
<path d="M810.0,75.0 L810.9,74.4 L811.7,73.7 L812.6,73.1 L813.4,72.5 L814.3,71.9 L815.1,71.2 L815.9,70.6 L816.8,70.0 L817.6,69.4 L818.4,68.8 L819.2,68.2 L820.0,67.6 L820.8,67.0 L821.6,66.4 L822.4,65.8 L823.1,65.3 L823.9,64.7 L824.6,64.1 L825.4,63.5 L826.1,63.0 L826.8,62.4 L827.5,61.9 L828.2,61.4 L828.8,60.8 L829.5,60.3 L830.1,59.8 L830.7,59.3 L831.3,58.8 L831.9,58.3 L832.5,57.8 L833.0,57.3 L833.5,56.9 L834.0,56.4 L834.5,56.0 L834.9,55.6 L835.3,55.1 L835.7,54.7 L836.0,54.4 L836.3,54.0 L836.6,53.6 L836.8,53.3 L837.0,53.0 L837.2,52.6 L837.3,52.4 L837.3,52.1 L837.3,51.8 L837.3,51.6 L837.2,51.4 L837.0,51.2 L836.8,51.0 L836.5,50.8 L836.2,50.7 L835.8,50.6 L835.3,50.5 L834.8,50.4 L834.2,50.4 L833.5,50.4 L832.8,50.4 L832.0,50.4 L831.1,50.5" stroke="#ffee00" stroke-opacity="1.0" stroke-width="1.39" stroke-dasharray="1.39 2.29"/>
<path d="M973.1,50.5 L972.7,50.6 L972.3,50.7 L972.0,50.9 L971.8,51.0 L971.6,51.2 L971.5,51.4 L971.5,51.7 L971.5,51.9 L971.6,52.2 L971.7,52.4 L971.8,52.7 L972.1,53.1 L972.3,53.4 L972.6,53.7 L973.0,54.1 L973.3,54.5 L973.8,54.9 L974.2,55.3 L974.7,55.7 L975.2,56.1 L975.8,56.6 L976.3,57.0 L976.9,57.5 L977.6,58.0 L978.2,58.4 L978.9,58.9 L979.6,59.4 L980.3,59.9 L981.0,60.5 L981.8,61.0 L982.5,61.5 L983.3,62.1 L984.1,62.6 L984.9,63.2 L985.7,63.7 L986.6,64.3 L987.4,64.9 L988.3,65.4 L989.2,66.0 L990.0,66.6 L990.9,67.2 L991.8,67.8 L992.7,68.4 L993.6,69.0 L994.6,69.6 L995.5,70.2 L996.4,70.8 L997.4,71.4 L998.3,72.1 L999.3,72.7 L1000.2,73.3 L1001.2,73.9 L1002.1,74.6 L1003.1,75.2 L1004.1,75.8 L1005.1,76.5 L1006.0,77.1 L1007.0,77.8 L1008.0,78.4 L1009.0,79.1 L1010.0,79.7 L1011.0,80.4 L1012.0,81.0 L1013.0,81.7 L1014.0,82.3 L1015.0,83.0 L1016.0,83.6 L1017.0,84.3 L1018.0,85.0 L1019.0,85.6 L1020.0,86.3 L1021.1,87.0 L1022.1,87.6 L1023.1,88.3 L1024.1,89.0 L1025.1,89.7 L1026.1,90.3 L1027.2,91.0 L1028.2,91.7 L1029.2,92.4 L1030.2,93.0 L1031.2,93.7 L1032.2,94.4 L1033.3,95.1 L1034.3,95.8 L1035.3,96.4 L1036.3,97.1 L1037.3,97.8 L1038.4,98.5 L1039.4,99.2 L1040.4,99.9 L1041.4,100.6 L1042.4,101.2 L1043.4,101.9 L1044.4,102.6 L1045.5,103.3 L1046.5,104.0 L1047.5,104.7 L1048.5,105.4 L1049.5,106.1 L1050.5,106.8 L1051.5,107.5 L1052.5,108.2 L1053.5,108.9 L1054.5,109.5 L1055.5,110.2 L1056.5,110.9 L1057.5,111.6 L1058.5,112.3 L1059.5,113.0 L1060.5,113.7 L1061.5,114.4 L1062.5,115.1 L1063.5,115.8 L1064.5,116.5 L1065.5,117.2 L1066.4,117.9 L1067.4,118.6 L1068.4,119.3 L1069.4,120.0 L1070.4,120.7 L1071.3,121.4 L1072.3,122.1 L1073.3,122.8 L1074.3,123.5 L1075.2,124.2 L1076.2,124.9 L1077.2,125.6 L1078.1,126.4 L1079.1,127.1 L1080.0,127.8 L1081.0,128.5 L1082.0,129.2 L1082.9,129.9 L1083.9,130.6 L1084.8,131.3 L1085.8,132.0 L1086.7,132.7" stroke="#ffee00" stroke-opacity="1.0" stroke-width="1.39" stroke-dasharray="1.39 2.29"/>
<path d="M810.0,75.0 L806.1,77.9 L802.1,80.9 L798.1,83.9 L794.1,86.9 L790.0,90.0" stroke="#ffee00" stroke-width="1.39" stroke-opacity="1.0"/>
<circle cx="790.0" cy="90.0" r="1.2" fill="#ff6347" stroke="none"/>
<path d="M656.7,154.2 L657.4,153.7 L658.2,153.2 L658.9,152.7 L659.6,152.2 L660.3,151.7 L661.1,151.2 L661.8,150.7 L662.6,150.2 L663.3,149.7 L664.0,149.2 L664.8,148.7 L665.5,148.2 L666.3,147.7 L667.0,147.2 L667.8,146.7 L668.5,146.2 L669.3,145.7 L670.0,145.2 L670.8,144.7 L671.5,144.2 L672.3,143.7 L673.1,143.2 L673.8,142.7 L674.6,142.2 L675.4,141.7 L676.1,141.2 L676.9,140.7 L677.7,140.2 L678.4,139.7 L679.2,139.2 L680.0,138.7 L680.7,138.2 L681.5,137.7 L682.3,137.2 L683.1,136.7 L683.9,136.2 L684.6,135.7 L685.4,135.2 L686.2,134.7 L687.0,134.2 L687.8,133.7 L688.6,133.2 L689.4,132.7 L690.2,132.3 L690.9,131.8 L691.7,131.3 L692.5,130.8 L693.3,130.3 L694.1,129.8 L694.9,129.3 L695.7,128.8 L696.5,128.3 L697.3,127.8 L698.1,127.3 L698.9,126.8 L699.8,126.3 L700.6,125.8 L701.4,125.3 L702.2,124.8 L703.0,124.3 L703.8,123.8 L704.6,123.3 L705.4,122.8 L706.3,122.3 L707.1,121.8 L707.9,121.3 L708.7,120.9 L709.5,120.4 L710.3,119.9 L711.2,119.4 L712.0,118.9 L712.8,118.4 L713.6,117.9 L714.5,117.4 L715.3,116.9 L716.1,116.4 L717.0,115.9 L717.8,115.4 L718.6,114.9 L719.5,114.4 L720.3,113.9 L721.1,113.5 L722.0,113.0 L722.8,112.5 L723.6,112.0 L724.5,111.5 L725.3,111.0 L726.2,110.5 L727.0,110.0 L727.8,109.5 L728.7,109.0 L729.5,108.5 L730.4,108.1 L731.2,107.6 L732.1,107.1 L732.9,106.6 L733.7,106.1 L734.6,105.6 L735.4,105.1 L736.3,104.6 L737.1,104.1 L738.0,103.7 L738.8,103.2 L739.7,102.7 L740.5,102.2 L741.4,101.7 L742.2,101.2 L743.1,100.7 L744.0,100.3 L744.8,99.8 L745.7,99.3 L746.5,98.8 L747.4,98.3 L748.2,97.8 L749.1,97.3 L749.9,96.9 L750.8,96.4 L751.7,95.9 L752.5,95.4 L753.4,94.9 L754.2,94.5 L755.1,94.0 L755.9,93.5 L756.8,93.0 L757.7,92.5 L758.5,92.1 L759.4,91.6 L760.2,91.1 L761.1,90.6 L761.9,90.1 L762.8,89.7 L763.7,89.2 L764.5,88.7 L765.4,88.2 L766.2,87.8 L767.1,87.3 L767.9,86.8 L768.8,86.3 L769.7,85.9 L770.5,85.4 L771.4,84.9 L772.2,84.4 L773.1,84.0 L773.9,83.5 L774.8,83.0 L775.6,82.6 L776.5,82.1 L777.3,81.6 L778.2,81.2 L779.0,80.7 L779.9,80.2 L780.7,79.8 L781.6,79.3 L782.4,78.8 L783.3,78.4 L784.1,77.9 L784.9,77.5 L785.8,77.0 L786.6,76.5 L787.4,76.1 L788.3,75.6 L789.1,75.2 L789.9,74.7 L790.8,74.3 L791.6,73.8 L792.4,73.4 L793.2,72.9 L794.1,72.5 L794.9,72.0 L795.7,71.6 L796.5,71.1 L797.3,70.7 L798.1,70.3 L798.9,69.8 L799.7,69.4 L800.5,68.9 L801.3,68.5 L802.1,68.1 L802.9,67.6 L803.7,67.2 L804.4,66.8 L805.2,66.4 L806.0,65.9 L806.8,65.5 L807.5,65.1 L808.3,64.7 L809.0,64.3 L809.8,63.9 L810.5,63.4 L811.2,63.0 L812.0,62.6 L812.7,62.2 L813.4,61.8 L814.1,61.4 L814.8,61.0 L815.5,60.7 L816.2,60.3 L816.8,59.9 L817.5,59.5" stroke="#ffa500" stroke-opacity="1.0" stroke-width="1.39" stroke-dasharray="1.39 2.29"/>
<path d="M656.7,154.2 L652.0,157.4 L647.4,160.5 L642.9,163.7" stroke="#ffa500" stroke-width="1.39" stroke-opacity="1.0"/>
<circle cx="642.9" cy="163.7" r="1.2" fill="#ff6347" stroke="none"/>
</g>
<g id="circ">
<path d="M1090.19,88.65 L1089.27,88.47 L1088.35,88.29 L1087.42,88.10 L1086.48,87.91 L1085.53,87.71 L1084.57,87.51 L1083.60,87.31 L1082.62,87.10 L1081.63,86.89 L1080.64,86.67 L1079.63,86.45 L1078.62,86.22 L1077.60,86.00 L1076.57,85.76 L1075.54,85.53 L1074.49,85.28 L1073.44,85.04 L1072.38,84.79 L1071.31,84.54 L1070.24,84.28 L1069.16,84.02 L1068.07,83.76 L1066.98,83.49 L1065.88,83.22 L1064.77,82.94 L1063.66,82.66 L1062.54,82.38 L1061.42,82.09 L1060.29,81.80 L1059.15,81.51 L1058.01,81.21 L1056.86,80.91 L1055.71,80.60 L1054.55,80.29 L1053.39,79.98 L1052.23,79.67 L1051.06,79.35 L1049.88,79.03 L1048.70,78.70 L1047.52,78.37 L1046.34,78.04 L1045.15,77.71 L1043.95,77.37 L1042.76,77.03 L1041.56,76.69 L1040.36,76.34 L1039.15,75.99 L1037.94,75.64 L1036.73,75.28 L1035.52,74.92 L1034.31,74.56 L1033.09,74.20 L1031.87,73.83 L1030.66,73.46 L1029.44,73.09 L1028.21,72.72 L1026.99,72.34 L1025.77,71.96 L1024.55,71.58 L1023.32,71.19 L1022.10,70.81 L1020.88,70.42 L1019.65,70.03 L1018.43,69.63 L1017.21,69.24 L1015.99,68.84 L1014.77,68.44 L1013.55,68.04 L1012.33,67.64 L1011.12,67.23 L1009.90,66.83 L1008.69,66.42 L1007.48,66.01 L1006.28,65.60 L1005.07,65.19 L1003.87,64.78 L1002.68,64.36 L1001.48,63.95 L1000.30,63.53 L999.11,63.11 L997.93,62.69 L996.76,62.27 L995.58,61.85 L994.42,61.43 L993.26,61.01 L992.11,60.59 L990.96,60.17 L989.82,59.75 L988.69,59.33 L987.56,58.91 L986.44,58.49 L985.33,58.07 L984.23,57.65 L983.14,57.23 L982.05,56.81 L980.98,56.39 L979.92,55.98 L978.87,55.56 L977.82,55.15 L976.79,54.74 L975.78,54.33 L974.77,53.93 L973.78,53.52 L972.81,53.12 L971.84,52.72 L970.90,52.33 L969.97,51.94 L969.06,51.55 L968.16,51.17 L967.29,50.79 L966.43,50.42 L965.60,50.05 L964.78,49.68 L963.99,49.33 L963.23,48.98 L962.48,48.63 L961.77,48.29 L961.08,47.97 L960.42,47.64 L959.80,47.33 L959.20,47.03 L958.64,46.74 L958.11,46.45 L957.62,46.18 L957.17,45.92 L956.76,45.67 L956.39,45.43 L956.06,45.21 L955.78,45.00 L955.55,44.81" stroke="#ffa500" stroke-width="2.08" stroke-linecap="round"/>
<path d="M849.36,44.63 L850.26,44.46 L851.12,44.31 L851.92,44.18 L852.68,44.06 L853.39,43.96 L854.05,43.88 L854.65,43.82 L855.21,43.77 L855.71,43.74 L856.15,43.73 L856.55,43.74 L856.89,43.77 L857.18,43.82 L857.42,43.88 L857.61,43.96 L857.75,44.06 L857.84,44.18 L857.88,44.31 L857.88,44.46 L857.83,44.63 L857.74,44.81 L857.61,45.00 L857.43,45.21 L857.22,45.43 L856.97,45.67 L856.69,45.92 L856.37,46.18 L856.01,46.45 L855.63,46.74 L855.22,47.03 L854.78,47.33 L854.31,47.64 L853.81,47.97 L853.29,48.29 L852.75,48.63 L852.18,48.98 L851.59,49.33 L850.98,49.68 L850.35,50.05 L849.70,50.42 L849.03,50.79 L848.35,51.17 L847.65,51.55 L846.93,51.94 L846.20,52.33 L845.45,52.72 L844.69,53.12 L843.92,53.52 L843.13,53.93 L842.33,54.33 L841.52,54.74 L840.70,55.15 L839.87,55.56 L839.02,55.98 L838.17,56.39 L837.31,56.81 L836.43,57.23 L835.55,57.65 L834.66,58.07 L833.76,58.49 L832.85,58.91 L831.94,59.33 L831.02,59.75 L830.09,60.17 L829.15,60.59 L828.21,61.01 L827.26,61.43 L826.31,61.85 L825.35,62.27 L824.38,62.69 L823.41,63.11 L822.44,63.53 L821.46,63.95 L820.47,64.36 L819.48,64.78 L818.49,65.19 L817.49,65.60 L816.49,66.01 L815.49,66.42 L814.48,66.83 L813.47,67.23 L812.45,67.64 L811.44,68.04 L810.42,68.44 L809.40,68.84 L808.37,69.24 L807.35,69.63 L806.32,70.03 L805.29,70.42 L804.26,70.81 L803.23,71.19 L802.19,71.58 L801.16,71.96 L800.13,72.34 L799.09,72.72 L798.05,73.09 L797.02,73.46 L795.98,73.83 L794.95,74.20 L793.91,74.56 L792.87,74.92 L791.84,75.28 L790.80,75.64 L789.77,75.99 L788.74,76.34 L787.71,76.69 L786.68,77.03 L785.65,77.37 L784.62,77.71 L783.60,78.04 L782.57,78.37 L781.55,78.70 L780.53,79.03 L779.51,79.35 L778.50,79.67 L777.49,79.98 L776.48,80.29 L775.47,80.60 L774.47,80.91 L773.47,81.21 L772.48,81.51 L771.48,81.80 L770.50,82.09 L769.51,82.38 L768.53,82.66 L767.55,82.94 L766.58,83.22 L765.61,83.49 L764.65,83.76 L763.69,84.02 L762.74,84.28 L761.79,84.54 L760.85,84.79 L759.91,85.04 L758.98,85.28 L758.05,85.53 L757.13,85.76 L756.21,86.00 L755.30,86.22 L754.40,86.45 L753.50,86.67 L752.61,86.89 L751.73,87.10 L750.85,87.31 L749.98,87.51 L749.12,87.71 L748.26,87.91 L747.41,88.10 L746.57,88.29 L745.74,88.47 L744.91,88.65 L744.09,88.82 L743.28,88.99 L742.48,89.16 L741.68,89.32 L740.90,89.48 L740.12,89.63 L739.35,89.78 L738.59,89.92 L737.84,90.06 L737.10,90.20 L736.36,90.33 L735.64,90.46 L734.92,90.58 L734.22,90.69 L733.52,90.81 L732.84,90.92 L732.16,91.02 L731.50,91.12 L730.84,91.21 L730.19,91.30 L729.56,91.39 L728.93,91.47 L728.32,91.55 L727.72,91.62 L727.13,91.68 L726.54,91.75 L725.97,91.81 L725.42,91.86 L724.87,91.91 L724.33,91.95 L723.81,91.99 L723.29,92.03 L722.79,92.06 L722.30,92.08 L721.83,92.10 L721.36,92.12 L720.91,92.13 L720.47,92.14 L720.04,92.14 L719.63,92.14 L719.23,92.13 L718.84,92.12 L718.46,92.10 L718.10,92.08 L717.75,92.06 L717.41,92.03 L717.09,91.99 L716.78,91.95 L716.48,91.91 L716.20,91.86 L715.93,91.81 L715.67,91.75 L715.43,91.68 L715.20,91.62 L714.99,91.55 L714.79,91.47 L714.61,91.39 L714.44,91.30 L714.28,91.21 L714.14,91.12 L714.02,91.02 L713.90,90.92 L713.81,90.81 L713.73,90.69 L713.66,90.58 L713.61,90.46 L713.57,90.33 L713.55,90.20 L713.54,90.06 L713.55,89.92 L713.58,89.78 L713.62,89.63 L713.68,89.48 L713.75,89.32 L713.84,89.16 L713.94,88.99 L714.06,88.82" stroke="#ffa500" stroke-width="2.08" stroke-linecap="round"/>
<path d="M1098.79,134.26 L1099.37,134.67 L1099.94,135.08 L1100.50,135.48 L1101.05,135.89 L1101.59,136.29 L1102.12,136.69 L1102.64,137.09 L1103.15,137.49 L1103.64,137.88 L1104.13,138.27 L1104.60,138.66 L1105.06,139.05 L1105.51,139.44 L1105.95,139.82 L1106.37,140.20 L1106.78,140.57 L1107.18,140.95 L1107.57,141.32 L1107.95,141.69 L1108.32,142.05 L1108.67,142.41 L1109.01,142.77 L1109.34,143.12 L1109.65,143.47 L1109.96,143.82 L1110.25,144.16 L1110.52,144.50 L1110.79,144.84 L1111.04,145.17 L1111.29,145.49 L1111.51,145.82 L1111.73,146.14 L1111.93,146.45 L1112.12,146.76 L1112.30,147.07 L1112.47,147.37 L1112.62,147.67 L1112.76,147.96 L1112.89,148.25 L1113.01,148.54 L1113.11,148.82 L1113.21,149.09 L1113.28,149.36 L1113.35,149.62 L1113.41,149.88 L1113.45,150.14 L1113.48,150.39 L1113.50,150.63 L1113.51,150.87 L1113.50,151.11 L1113.48,151.34 L1113.45,151.56 L1113.41,151.78 L1113.36,152.00 L1113.30,152.20 L1113.22,152.41 L1113.13,152.60 L1113.04,152.80 L1112.93,152.98 L1112.80,153.16 L1112.67,153.34 L1112.53,153.51 L1112.37,153.67 L1112.21,153.83 L1112.03,153.98 L1111.84,154.13 L1111.65,154.27 L1111.44,154.41 L1111.22,154.54 L1110.99,154.66 L1110.75,154.78 L1110.50,154.89 L1110.24,154.99 L1109.97,155.09 L1109.69,155.19 L1109.40,155.28 L1109.10,155.36 L1108.79,155.43 L1108.47,155.50 L1108.14,155.57 L1107.81,155.63 L1107.46,155.68 L1107.11,155.72 L1106.74,155.76 L1106.37,155.80 L1105.99,155.82 L1105.60,155.84 L1105.20,155.86 L1104.79,155.87 L1104.38,155.87 L1103.95,155.87 L1103.52,155.86 L1103.08,155.84 L1102.64,155.82 L1102.18,155.80 L1101.72,155.76 L1101.25,155.72 L1100.78,155.68 L1100.30,155.63 L1099.81,155.57 L1099.31,155.50 L1098.81,155.43 L1098.30,155.36 L1097.78,155.28 L1097.26,155.19 L1096.73,155.09 L1096.19,154.99 L1095.65,154.89 L1095.11,154.78 L1094.55,154.66 L1094.00,154.54 L1093.43,154.41 L1092.87,154.27 L1092.29,154.13 L1091.71,153.98 L1091.13,153.83 L1090.54,153.67 L1089.95,153.51 L1089.36,153.34 L1088.76,153.16 L1088.15,152.98 L1087.54,152.80 L1086.93,152.60 L1086.31,152.41 L1085.69,152.20 L1085.07,152.00 L1084.44,151.78 L1083.81,151.56 L1083.18,151.34 L1082.55,151.11 L1081.91,150.87 L1081.27,150.63 L1080.62,150.39 L1079.98,150.14 L1079.33,149.88 L1078.68,149.62 L1078.03,149.36 L1077.38,149.09 L1076.72,148.82 L1076.07,148.54 L1075.41,148.25 L1074.75,147.96 L1074.09,147.67 L1073.43,147.37 L1072.77,147.07 L1072.11,146.76 L1071.44,146.45 L1070.78,146.14 L1070.12,145.82 L1069.46,145.49 L1068.79,145.17 L1068.13,144.84 L1067.47,144.50 L1066.81,144.16 L1066.15,143.82 L1065.49,143.47 L1064.83,143.12 L1064.17,142.77 L1063.52,142.41 L1062.86,142.05 L1062.21,141.69 L1061.56,141.32 L1060.91,140.95 L1060.26,140.57 L1059.62,140.20 L1058.97,139.82 L1058.33,139.44 L1057.70,139.05 L1057.06,138.66 L1056.43,138.27 L1055.80,137.88 L1055.18,137.49 L1054.55,137.09 L1053.94,136.69 L1053.32,136.29 L1052.71,135.89 L1052.10,135.48 L1051.50,135.08 L1050.90,134.67 L1050.31,134.26 L1049.72,133.85 L1049.14,133.44 L1048.56,133.02 L1047.98,132.61 L1047.42,132.19 L1046.85,131.78 L1046.29,131.36 L1045.74,130.94 L1045.20,130.52 L1044.66,130.10 L1044.12,129.69 L1043.60,129.27 L1043.07,128.85 L1042.56,128.43 L1042.05,128.01 L1041.55,127.59 L1041.06,127.17 L1040.57,126.76 L1040.10,126.34 L1039.62,125.93 L1039.16,125.51 L1038.71,125.10 L1038.26,124.69 L1037.82,124.28 L1037.39,123.87 L1036.97,123.46 L1036.56,123.06 L1036.16,122.65 L1035.76,122.25 L1035.38,121.85 L1035.00,121.46 L1034.63,121.06 L1034.28,120.67 L1033.93,120.28 L1033.60,119.90 L1033.27,119.52 L1032.95,119.14 L1032.65,118.77 L1032.36,118.40 L1032.07,118.03 L1031.80,117.66 L1031.54,117.31 L1031.29,116.95 L1031.05,116.60 L1030.83,116.26 L1030.61,115.91 L1030.41,115.58 L1030.22,115.25 L1030.04,114.92 L1029.88,114.60 L1029.73,114.29 L1029.59,113.98 L1029.46,113.68 L1029.35,113.38 L1029.25,113.09 L1029.16,112.80 L1029.09,112.52 L1029.03,112.25 L1028.98,111.99 L1028.95,111.73 L1028.93,111.48 L1028.93,111.23 L1028.94,111.00 L1028.96,110.77 L1029.00,110.54 L1029.05,110.33 L1029.12,110.12 L1029.20,109.92 L1029.30,109.73 L1029.41,109.55 L1029.54,109.38 L1029.68,109.21 L1029.84,109.05 L1030.01,108.90 L1030.20,108.76 L1030.40,108.63 L1030.62,108.51 L1030.85,108.39 L1031.10,108.29 L1031.36,108.19 L1031.64,108.10 L1031.93,108.02 L1032.24,107.96 L1032.56,107.90 L1032.90,107.84 L1033.25,107.80 L1033.62,107.77 L1034.00,107.75 L1034.40,107.73 L1034.81,107.73 L1035.24,107.73 L1035.68,107.75 L1036.13,107.77 L1036.60,107.80 L1037.09,107.84 L1037.58,107.90 L1038.09,107.96 L1038.62,108.02 L1039.15,108.10 L1039.70,108.19 L1040.26,108.29 L1040.84,108.39 L1041.43,108.51 L1042.03,108.63 L1042.64,108.76 L1043.26,108.90 L1043.90,109.05 L1044.54,109.21 L1045.20,109.38 L1045.86,109.55 L1046.54,109.73 L1047.23,109.92 L1047.92,110.12 L1048.63,110.33 L1049.35,110.54 L1050.07,110.77 L1050.80,111.00 L1051.54,111.23 L1052.29,111.48 L1053.04,111.73 L1053.81,111.99 L1054.57,112.25 L1055.35,112.52 L1056.13,112.80 L1056.92,113.09 L1057.71,113.38 L1058.50,113.68 L1059.30,113.98 L1060.11,114.29 L1060.92,114.60 L1061.73,114.92 L1062.55,115.25 L1063.36,115.58 L1064.18,115.91 L1065.01,116.26 L1065.83,116.60 L1066.65,116.95 L1067.48,117.31 L1068.31,117.66 L1069.13,118.03 L1069.96,118.40 L1070.78,118.77 L1071.61,119.14 L1072.43,119.52 L1073.26,119.90 L1074.08,120.28 L1074.89,120.67 L1075.71,121.06 L1076.52,121.46 L1077.33,121.85 L1078.14,122.25 L1078.94,122.65 L1079.74,123.06 L1080.53,123.46 L1081.32,123.87 L1082.11,124.28 L1082.88,124.69 L1083.66,125.10 L1084.43,125.51 L1085.19,125.93 L1085.94,126.34 L1086.69,126.76 L1087.43,127.17 L1088.17,127.59 L1088.90,128.01 L1089.62,128.43 L1090.33,128.85 L1091.03,129.27 L1091.73,129.69 L1092.42,130.10 L1093.09,130.52 L1093.76,130.94 L1094.43,131.36 L1095.08,131.78 L1095.72,132.19 L1096.35,132.61 L1096.98,133.02 L1097.59,133.44 L1098.19,133.85 L1098.79,134.26 Z" stroke="#ffee00" stroke-width="2.08"/>
<path d="M820.27,256.16 L820.18,256.58 L820.08,257.00 L819.98,257.42 L819.87,257.83 L819.75,258.25 L819.63,258.66 L819.50,259.08 L819.36,259.49 L819.22,259.90 L819.07,260.31 L818.92,260.72 L818.76,261.13 L818.59,261.53 L818.41,261.93 L818.23,262.33 L818.05,262.73 L817.85,263.13 L817.65,263.52 L817.45,263.91 L817.24,264.30 L817.02,264.69 L816.80,265.07 L816.57,265.45 L816.33,265.83 L816.09,266.20 L815.85,266.58 L815.60,266.94 L815.34,267.31 L815.08,267.67 L814.81,268.03 L814.54,268.38 L814.26,268.73 L813.97,269.07 L813.68,269.41 L813.39,269.75 L813.09,270.08 L812.79,270.41 L812.48,270.74 L812.17,271.06 L811.85,271.37 L811.53,271.68 L811.20,271.99 L810.87,272.29 L810.53,272.58 L810.19,272.87 L809.85,273.16 L809.50,273.44 L809.15,273.71 L808.80,273.98 L808.44,274.25 L808.07,274.50 L807.71,274.76 L807.34,275.00 L806.96,275.25 L806.59,275.48 L806.21,275.71 L805.83,275.93 L805.44,276.15 L805.05,276.36 L804.66,276.57 L804.27,276.77 L803.87,276.96 L803.47,277.15 L803.07,277.33 L802.67,277.50 L802.27,277.67 L801.86,277.83 L801.45,277.99 L801.04,278.14 L800.63,278.28 L800.21,278.41 L799.80,278.54 L799.38,278.66 L798.96,278.78 L798.55,278.88 L798.13,278.99 L797.71,279.08 L797.29,279.17 L796.86,279.25 L796.44,279.32 L796.02,279.39 L795.60,279.45 L795.18,279.50 L794.75,279.55 L794.33,279.58 L793.91,279.62 L793.49,279.64 L793.07,279.66 L792.65,279.67 L792.23,279.67 L791.81,279.67 L791.39,279.66 L790.97,279.64 L790.56,279.62 L790.15,279.58 L789.73,279.55 L789.32,279.50 L788.92,279.45 L788.51,279.39 L788.10,279.32 L787.70,279.25 L787.30,279.17 L786.90,279.08 L786.51,278.99 L786.12,278.88 L785.73,278.78 L785.34,278.66 L784.96,278.54 L784.58,278.41 L784.20,278.28 L783.83,278.14 L783.46,277.99 L783.09,277.83 L782.73,277.67 L782.37,277.50 L782.01,277.33 L781.66,277.15 L781.32,276.96 L780.98,276.77 L780.64,276.57 L780.31,276.36 L779.98,276.15 L779.66,275.93 L779.34,275.71 L779.02,275.48 L778.72,275.25 L778.41,275.00 L778.12,274.76 L777.82,274.50 L777.54,274.25 L777.26,273.98 L776.98,273.71 L776.71,273.44 L776.45,273.16 L776.19,272.87 L775.94,272.58 L775.70,272.29 L775.46,271.99 L775.23,271.68 L775.01,271.37 L774.79,271.06 L774.58,270.74 L774.37,270.41 L774.17,270.08 L773.98,269.75 L773.80,269.41 L773.62,269.07 L773.45,268.73 L773.29,268.38 L773.14,268.03 L772.99,267.67 L772.85,267.31 L772.72,266.94 L772.59,266.58 L772.47,266.20 L772.36,265.83 L772.26,265.45 L772.17,265.07 L772.08,264.69 L772.00,264.30 L771.93,263.91 L771.87,263.52 L771.81,263.13 L771.76,262.73 L771.73,262.33 L771.69,261.93 L771.67,261.53 L771.66,261.13 L771.65,260.72 L771.65,260.31 L771.66,259.90 L771.68,259.49 L771.70,259.08 L771.73,258.66 L771.78,258.25 L771.83,257.83 L771.88,257.42 L771.95,257.00 L772.02,256.58 L772.10,256.16 L772.19,255.74 L772.29,255.33 L772.40,254.91 L772.51,254.49 L772.63,254.07 L772.76,253.65 L772.90,253.23 L773.04,252.81 L773.19,252.40 L773.35,251.98 L773.52,251.57 L773.70,251.15 L773.88,250.74 L774.07,250.33 L774.26,249.92 L774.47,249.51 L774.68,249.10 L774.90,248.70 L775.13,248.29 L775.36,247.89 L775.60,247.49 L775.85,247.10 L776.10,246.70 L776.36,246.31 L776.62,245.92 L776.90,245.54 L777.18,245.15 L777.46,244.77 L777.75,244.40 L778.05,244.02 L778.36,243.65 L778.67,243.29 L778.98,242.92 L779.30,242.56 L779.63,242.21 L779.96,241.86 L780.30,241.51 L780.64,241.17 L780.99,240.83 L781.34,240.49 L781.69,240.17 L782.06,239.84 L782.42,239.52 L782.79,239.21 L783.17,238.90 L783.55,238.59 L783.93,238.29 L784.31,238.00 L784.70,237.71 L785.10,237.42 L785.50,237.15 L785.90,236.87 L786.30,236.61 L786.71,236.35 L787.12,236.09 L787.53,235.85 L787.94,235.60 L788.36,235.37 L788.78,235.14 L789.20,234.92 L789.62,234.70 L790.05,234.49 L790.48,234.29 L790.91,234.09 L791.34,233.90 L791.77,233.72 L792.20,233.54 L792.63,233.37 L793.07,233.21 L793.50,233.06 L793.94,232.91 L794.38,232.77 L794.81,232.64 L795.25,232.51 L795.68,232.39 L796.12,232.28 L796.56,232.18 L796.99,232.08 L797.43,231.99 L797.86,231.91 L798.30,231.84 L798.73,231.77 L799.16,231.72 L799.59,231.67 L800.02,231.62 L800.45,231.59 L800.87,231.56 L801.30,231.54 L801.72,231.53 L802.14,231.53 L802.56,231.53 L802.97,231.54 L803.39,231.56 L803.80,231.59 L804.20,231.62 L804.61,231.67 L805.01,231.72 L805.41,231.77 L805.81,231.84 L806.20,231.91 L806.59,231.99 L806.98,232.08 L807.36,232.18 L807.74,232.28 L808.11,232.39 L808.49,232.51 L808.85,232.64 L809.22,232.77 L809.58,232.91 L809.93,233.06 L810.28,233.21 L810.63,233.37 L810.97,233.54 L811.31,233.72 L811.64,233.90 L811.97,234.09 L812.29,234.29 L812.61,234.49 L812.92,234.70 L813.23,234.92 L813.53,235.14 L813.83,235.37 L814.12,235.60 L814.40,235.85 L814.68,236.09 L814.96,236.35 L815.23,236.61 L815.49,236.87 L815.75,237.15 L816.00,237.42 L816.25,237.71 L816.49,238.00 L816.72,238.29 L816.95,238.59 L817.17,238.90 L817.39,239.21 L817.60,239.52 L817.80,239.84 L818.00,240.17 L818.19,240.49 L818.37,240.83 L818.55,241.17 L818.72,241.51 L818.89,241.86 L819.04,242.21 L819.20,242.56 L819.34,242.92 L819.48,243.29 L819.61,243.65 L819.73,244.02 L819.85,244.40 L819.96,244.77 L820.07,245.15 L820.16,245.54 L820.25,245.92 L820.34,246.31 L820.41,246.70 L820.48,247.10 L820.55,247.49 L820.60,247.89 L820.65,248.29 L820.69,248.70 L820.73,249.10 L820.76,249.51 L820.78,249.92 L820.79,250.33 L820.80,250.74 L820.80,251.15 L820.79,251.57 L820.78,251.98 L820.76,252.40 L820.73,252.81 L820.70,253.23 L820.66,253.65 L820.61,254.07 L820.55,254.49 L820.49,254.91 L820.42,255.33 L820.35,255.74 L820.27,256.16 Z" stroke="#e020ff" stroke-width="2.08"/>
<path d="M828.45,291.55 L828.42,291.96 L828.37,292.38 L828.32,292.80 L828.26,293.22 L828.20,293.64 L828.12,294.05 L828.04,294.47 L827.96,294.88 L827.87,295.29 L827.77,295.71 L827.66,296.12 L827.55,296.53 L827.43,296.93 L827.30,297.34 L827.17,297.74 L827.03,298.14 L826.89,298.54 L826.74,298.94 L826.58,299.34 L826.41,299.73 L826.24,300.12 L826.07,300.51 L825.88,300.89 L825.69,301.27 L825.50,301.65 L825.30,302.03 L825.09,302.40 L824.88,302.77 L824.66,303.13 L824.43,303.49 L824.20,303.85 L823.96,304.21 L823.72,304.56 L823.47,304.90 L823.22,305.24 L822.96,305.58 L822.70,305.92 L822.43,306.25 L822.15,306.57 L821.87,306.89 L821.58,307.21 L821.29,307.52 L821.00,307.82 L820.70,308.12 L820.39,308.42 L820.08,308.71 L819.77,309.00 L819.45,309.28 L819.12,309.55 L818.80,309.82 L818.46,310.08 L818.13,310.34 L817.79,310.59 L817.44,310.84 L817.09,311.08 L816.74,311.32 L816.39,311.54 L816.03,311.77 L815.66,311.98 L815.30,312.19 L814.93,312.40 L814.55,312.60 L814.18,312.79 L813.80,312.97 L813.41,313.15 L813.03,313.32 L812.64,313.49 L812.25,313.64 L811.86,313.80 L811.46,313.94 L811.06,314.08 L810.66,314.21 L810.26,314.34 L809.86,314.45 L809.45,314.56 L809.04,314.67 L808.63,314.76 L808.22,314.85 L807.81,314.94 L807.40,315.01 L806.98,315.08 L806.57,315.14 L806.15,315.20 L805.73,315.24 L805.32,315.28 L804.90,315.31 L804.48,315.34 L804.06,315.36 L803.64,315.37 L803.22,315.37 L802.80,315.37 L802.39,315.36 L801.97,315.34 L801.55,315.31 L801.13,315.28 L800.72,315.24 L800.30,315.20 L799.89,315.14 L799.47,315.08 L799.06,315.01 L798.65,314.94 L798.24,314.85 L797.83,314.76 L797.43,314.67 L797.02,314.56 L796.62,314.45 L796.22,314.34 L795.82,314.21 L795.43,314.08 L795.03,313.94 L794.64,313.80 L794.26,313.64 L793.87,313.49 L793.49,313.32 L793.11,313.15 L792.74,312.97 L792.37,312.79 L792.00,312.60 L791.63,312.40 L791.27,312.19 L790.92,311.98 L790.56,311.77 L790.22,311.54 L789.87,311.32 L789.53,311.08 L789.20,310.84 L788.86,310.59 L788.54,310.34 L788.22,310.08 L787.90,309.82 L787.59,309.55 L787.28,309.28 L786.98,309.00 L786.69,308.71 L786.40,308.42 L786.11,308.12 L785.83,307.82 L785.56,307.52 L785.29,307.21 L785.03,306.89 L784.78,306.57 L784.53,306.25 L784.28,305.92 L784.05,305.58 L783.82,305.24 L783.59,304.90 L783.38,304.56 L783.17,304.21 L782.96,303.85 L782.77,303.49 L782.58,303.13 L782.39,302.77 L782.22,302.40 L782.05,302.03 L781.89,301.65 L781.73,301.27 L781.58,300.89 L781.44,300.51 L781.31,300.12 L781.19,299.73 L781.07,299.34 L780.96,298.94 L780.86,298.54 L780.76,298.14 L780.68,297.74 L780.60,297.34 L780.52,296.93 L780.46,296.53 L780.40,296.12 L780.36,295.71 L780.32,295.29 L780.28,294.88 L780.26,294.47 L780.24,294.05 L780.23,293.64 L780.23,293.22 L780.24,292.80 L780.25,292.38 L780.28,291.96 L780.31,291.55 L780.34,291.13 L780.39,290.71 L780.44,290.29 L780.51,289.87 L780.58,289.45 L780.65,289.03 L780.74,288.62 L780.83,288.20 L780.93,287.78 L781.04,287.37 L781.16,286.96 L781.28,286.54 L781.41,286.13 L781.55,285.72 L781.70,285.32 L781.85,284.91 L782.01,284.51 L782.18,284.10 L782.36,283.70 L782.54,283.31 L782.73,282.91 L782.92,282.52 L783.13,282.13 L783.34,281.74 L783.56,281.35 L783.78,280.97 L784.01,280.59 L784.25,280.22 L784.49,279.84 L784.74,279.48 L785.00,279.11 L785.26,278.75 L785.53,278.39 L785.81,278.04 L786.09,277.69 L786.37,277.34 L786.67,277.00 L786.96,276.66 L787.27,276.33 L787.58,276.00 L787.89,275.67 L788.21,275.36 L788.54,275.04 L788.87,274.73 L789.20,274.43 L789.54,274.13 L789.88,273.83 L790.23,273.55 L790.58,273.26 L790.94,272.98 L791.30,272.71 L791.67,272.45 L792.04,272.19 L792.41,271.93 L792.78,271.68 L793.16,271.44 L793.55,271.20 L793.93,270.97 L794.32,270.75 L794.72,270.53 L795.11,270.32 L795.51,270.11 L795.91,269.92 L796.31,269.72 L796.72,269.54 L797.12,269.36 L797.53,269.19 L797.95,269.02 L798.36,268.87 L798.77,268.72 L799.19,268.57 L799.61,268.44 L800.03,268.31 L800.45,268.18 L800.87,268.07 L801.29,267.96 L801.71,267.86 L802.13,267.77 L802.56,267.68 L802.98,267.60 L803.41,267.53 L803.83,267.47 L804.25,267.41 L804.68,267.36 L805.10,267.32 L805.52,267.29 L805.95,267.26 L806.37,267.24 L806.79,267.23 L807.21,267.23 L807.63,267.23 L808.04,267.24 L808.46,267.26 L808.87,267.29 L809.29,267.32 L809.70,267.36 L810.11,267.41 L810.51,267.47 L810.92,267.53 L811.32,267.60 L811.72,267.68 L812.12,267.77 L812.51,267.86 L812.91,267.96 L813.30,268.07 L813.68,268.18 L814.07,268.31 L814.45,268.44 L814.83,268.57 L815.20,268.72 L815.57,268.87 L815.94,269.02 L816.30,269.19 L816.66,269.36 L817.02,269.54 L817.37,269.72 L817.72,269.92 L818.06,270.11 L818.40,270.32 L818.74,270.53 L819.07,270.75 L819.40,270.97 L819.72,271.20 L820.04,271.44 L820.35,271.68 L820.66,271.93 L820.96,272.19 L821.26,272.45 L821.55,272.71 L821.84,272.98 L822.12,273.26 L822.40,273.55 L822.67,273.83 L822.94,274.13 L823.20,274.43 L823.45,274.73 L823.70,275.04 L823.95,275.36 L824.19,275.67 L824.42,276.00 L824.65,276.33 L824.87,276.66 L825.08,277.00 L825.29,277.34 L825.49,277.69 L825.69,278.04 L825.88,278.39 L826.06,278.75 L826.24,279.11 L826.41,279.48 L826.58,279.84 L826.74,280.22 L826.89,280.59 L827.03,280.97 L827.17,281.35 L827.30,281.74 L827.43,282.13 L827.55,282.52 L827.66,282.91 L827.77,283.31 L827.87,283.70 L827.96,284.10 L828.05,284.51 L828.12,284.91 L828.20,285.32 L828.26,285.72 L828.32,286.13 L828.37,286.54 L828.42,286.96 L828.45,287.37 L828.49,287.78 L828.51,288.20 L828.53,288.62 L828.54,289.03 L828.54,289.45 L828.54,289.87 L828.53,290.29 L828.51,290.71 L828.48,291.13 L828.45,291.55 Z" stroke="#ff2000" stroke-width="2.08"/>
</g>
<g id="mk" stroke="#ff0000" stroke-width="1.1">
<path d="M803.2,283.6 H809.0 M806.1,280.7 V286.5"/>
<path d="M791.3,285.6 H797.1 M794.2,282.7 V288.5"/>
<path d="M802.4,291.1 H808.2 M805.3,288.2 V294.0"/>
<path d="M805.4,286.7 H811.2 M808.3,283.8 V289.6"/>
<path d="M820.8,288.6 H826.6 M823.7,285.7 V291.5"/>
<path d="M829.1,291.4 H834.9 M832.0,288.5 V294.3"/>
<path d="M1056.4,408.4 H1062.2 M1059.3,405.5 V411.3"/>
<path d="M1088.6,392.4 H1094.4 M1091.5,389.5 V395.3"/>
<path d="M1114.4,406.4 H1120.2 M1117.3,403.5 V409.3"/>
<path d="M776.4,258.7 H782.2 M779.3,255.8 V261.6"/>
<path d="M1072.4,128.0 H1078.2 M1075.3,125.1 V130.9"/>
<path d="M1083.8,132.7 H1089.6 M1086.7,129.8 V135.6"/>
<path d="M814.6,59.5 H820.4 M817.5,56.6 V62.4"/>
</g>
</g>
<g font-family="'DejaVu Sans','Liberation Sans',sans-serif" font-size="10.5" fill="#ffffff" text-anchor="middle">
<text x="805.0" y="293.9">STA</text>
<text x="795.2" y="258.9">ARD</text>
<text x="1070.2" y="134.7">DRA</text>
<text x="786.1" y="70.8">OCT</text>
</g>
<g font-family="'DejaVu Sans','Liberation Sans',sans-serif" font-size="9.72" fill="#9c9c9c" text-anchor="middle">
<text x="902.0" y="329.8">+0<tspan font-size="6.8" dy="-3.6" dx="1.2">°</tspan></text>
<text x="804.4" y="329.8">+30<tspan font-size="6.8" dy="-3.6" dx="1.2">°</tspan></text>
<text x="706.8" y="329.8">+60<tspan font-size="6.8" dy="-3.6" dx="1.2">°</tspan></text>
<text x="609.2" y="329.8">+90<tspan font-size="6.8" dy="-3.6" dx="1.2">°</tspan></text>
<text x="511.6" y="329.8">+120<tspan font-size="6.8" dy="-3.6" dx="1.2">°</tspan></text>
<text x="414.0" y="329.8">+150<tspan font-size="6.8" dy="-3.6" dx="1.2">°</tspan></text>
<text x="316.5" y="329.8">+180<tspan font-size="6.8" dy="-3.6" dx="1.2">°</tspan></text>
<text x="1487.5" y="329.8">+180<tspan font-size="6.8" dy="-3.6" dx="1.2">°</tspan></text>
<text x="1390.0" y="329.8">+210<tspan font-size="6.8" dy="-3.6" dx="1.2">°</tspan></text>
<text x="1292.4" y="329.8">+240<tspan font-size="6.8" dy="-3.6" dx="1.2">°</tspan></text>
<text x="1194.8" y="329.8">+270<tspan font-size="6.8" dy="-3.6" dx="1.2">°</tspan></text>
<text x="1097.2" y="329.8">+300<tspan font-size="6.8" dy="-3.6" dx="1.2">°</tspan></text>
<text x="999.6" y="329.8">+330<tspan font-size="6.8" dy="-3.6" dx="1.2">°</tspan></text>
<text x="902.0" y="25.4">+90<tspan font-size="6.8" dy="-3.6" dx="1.2">°</tspan></text>
<text x="902.0" y="123.0">+60<tspan font-size="6.8" dy="-3.6" dx="1.2">°</tspan></text>
<text x="902.0" y="220.6">+30<tspan font-size="6.8" dy="-3.6" dx="1.2">°</tspan></text>
<text x="902.0" y="428.5">−30<tspan font-size="6.8" dy="-3.6" dx="1.2">°</tspan></text>
<text x="902.0" y="526.1">−60<tspan font-size="6.8" dy="-3.6" dx="1.2">°</tspan></text>
<text x="902.0" y="623.7">−90<tspan font-size="6.8" dy="-3.6" dx="1.2">°</tspan></text>
</g>
<g font-family="'DejaVu Sans Mono','Liberation Mono',monospace" font-size="13.89" fill="#ffffff" style="white-space:pre">
<text x="316" y="29.5">UK007Y</text>
<text x="316" y="42.8">Beg: 20251006 18:35:26 (sol = 193.41°)</text>
<text x="316" y="56.9">End: 20251007 05:00:54 (sol = 193.84°)</text>
<text x="316" y="69.0">--------------------------------------</text>
<text x="316" y="81.5">...: 28</text>
<text x="316" y="94.8">STA: 6</text>
<text x="316" y="108.1">ARD: 4</text>
<text x="316" y="121.4">DRA: 2</text>
<text x="316" y="134.7">OCT: 1</text>
</g>
<g id="low">
<g stroke="#585858" stroke-width="2.08" stroke-dasharray="2.08 3.44">
<path d="M74.7,641.5 V842.5"/>
<path d="M219,641.5 V842.5"/>
<path d="M365,641.5 V842.5"/>
<path d="M506.25,641.5 V842.5"/>
<path d="M651,641.5 V842.5"/>
<path d="M797,641.5 V842.5"/>
<path d="M940,641.5 V842.5"/>
<path d="M1091,641.5 V842.5"/>
<path d="M1239,641.5 V842.5"/>
<path d="M1394,641.5 V842.5"/>
<path d="M1548,641.5 V842.5"/>
<path d="M1687,641.5 V842.5"/>
</g>
<g font-family="'DejaVu Sans','Liberation Sans',sans-serif" font-size="27.3" fill="#555555" text-anchor="end">
<text transform="translate(148.7,643.5) rotate(-90)">APR</text>
<text transform="translate(294.6,644.6) rotate(-90)">MAY</text>
<text transform="translate(435.4,642.7) rotate(-90)">JUN</text>
<text transform="translate(576.5,641.3) rotate(-90)">JUL</text>
<text transform="translate(723.5,644.1) rotate(-90)">AUG</text>
<text transform="translate(871.8,644.6) rotate(-90)">SEP</text>
<text transform="translate(1016.8,643.5) rotate(-90)">OCT</text>
<text transform="translate(1169.6,644.6) rotate(-90)">NOV</text>
<text transform="translate(1318.7,645.2) rotate(-90)">DEC</text>
<text transform="translate(1468.5,642.4) rotate(-90)">JAN</text>
<text transform="translate(1627.7,647.2) rotate(-90)">FEB</text>
<text transform="translate(1765.7,645.0) rotate(-90)">MAR</text>
</g>
<rect x="106" y="832.00" width="24" height="4" fill="#ee82ee"/>
<rect x="165" y="832.00" width="180" height="4" fill="#ee82ee"/>
<rect x="366" y="832.00" width="259" height="4" fill="#ee82ee"/>
<rect x="636" y="832.00" width="151" height="4" fill="#ee82ee"/>
<rect x="807" y="832.00" width="93" height="4" fill="#ee82ee"/>
<rect x="920" y="832.00" width="53" height="4" fill="#ee82ee"/>
<rect x="984" y="832.00" width="82" height="4" fill="#ee82ee"/>
<rect x="1082" y="832.00" width="122" height="4" fill="#ee82ee"/>
<rect x="1244" y="832.00" width="82" height="4" fill="#ee82ee"/>
<rect x="1337" y="832.00" width="19" height="4" fill="#ee82ee"/>
<rect x="1381" y="832.00" width="63" height="4" fill="#ee82ee"/>
<rect x="1459" y="832.00" width="53" height="4" fill="#ee82ee"/>
<rect x="1523" y="832.00" width="24" height="4" fill="#ee82ee"/>
<rect x="1724" y="832.00" width="24" height="4" fill="#ee82ee"/>
<rect x="1758" y="832.00" width="24" height="4" fill="#ee82ee"/>
<rect x="165" y="815.67" width="24" height="4" fill="#e010f0"/>
<rect x="224" y="815.67" width="63" height="4" fill="#e010f0"/>
<rect x="312" y="815.67" width="29" height="4" fill="#e010f0"/>
<rect x="366" y="815.67" width="127" height="4" fill="#e010f0"/>
<rect x="508" y="815.67" width="146" height="4" fill="#e010f0"/>
<rect x="704" y="815.67" width="34" height="4" fill="#e010f0"/>
<rect x="773" y="815.67" width="73" height="4" fill="#e010f0"/>
<rect x="871" y="815.67" width="117" height="4" fill="#e010f0"/>
<rect x="1003" y="815.67" width="14" height="4" fill="#e010f0"/>
<rect x="1062" y="815.67" width="151" height="4" fill="#e010f0"/>
<rect x="1244" y="815.67" width="23" height="4" fill="#e010f0"/>
<rect x="1293" y="815.67" width="23" height="4" fill="#e010f0"/>
<rect x="1342" y="815.67" width="23" height="4" fill="#e010f0"/>
<rect x="1386" y="815.67" width="43" height="4" fill="#e010f0"/>
<rect x="1459" y="815.67" width="24" height="4" fill="#e010f0"/>
<rect x="1548" y="815.67" width="23" height="4" fill="#e010f0"/>
<rect x="165" y="799.33" width="24" height="4" fill="#ff2000"/>
<rect x="258" y="799.33" width="230" height="4" fill="#ff2000"/>
<rect x="508" y="799.33" width="107" height="4" fill="#ff2000"/>
<rect x="626" y="799.33" width="92" height="4" fill="#ff2000"/>
<rect x="729" y="799.33" width="97" height="4" fill="#ff2000"/>
<rect x="949" y="799.33" width="201" height="4" fill="#ff2000"/>
<rect x="1160" y="799.33" width="88" height="4" fill="#ff2000"/>
<rect x="1258" y="799.33" width="186" height="4" fill="#ff2000"/>
<rect x="1459" y="799.33" width="24" height="4" fill="#ff2000"/>
<rect x="1553" y="799.33" width="23" height="4" fill="#ff2000"/>
<rect x="194" y="783.00" width="24" height="4" fill="#ffa500"/>
<rect x="322" y="783.00" width="185" height="4" fill="#ffa500"/>
<rect x="518" y="783.00" width="24" height="4" fill="#ffa500"/>
<rect x="557" y="783.00" width="127" height="4" fill="#ffa500"/>
<rect x="807" y="783.00" width="24" height="4" fill="#ffa500"/>
<rect x="954" y="783.00" width="19" height="4" fill="#ffa500"/>
<rect x="989" y="783.00" width="136" height="4" fill="#ffa500"/>
<rect x="1155" y="783.00" width="63" height="4" fill="#ffa500"/>
<rect x="1244" y="783.00" width="23" height="4" fill="#ffa500"/>
<rect x="1317" y="783.00" width="24" height="4" fill="#ffa500"/>
<rect x="1396" y="783.00" width="23" height="4" fill="#ffa500"/>
<rect x="1464" y="783.00" width="186" height="4" fill="#ffa500"/>
<rect x="341" y="766.67" width="29" height="4" fill="#ffee00"/>
<rect x="410" y="766.67" width="38" height="4" fill="#ffee00"/>
<rect x="469" y="766.67" width="24" height="4" fill="#ffee00"/>
<rect x="528" y="766.67" width="18" height="4" fill="#ffee00"/>
<rect x="562" y="766.67" width="29" height="4" fill="#ffee00"/>
<rect x="616" y="766.67" width="33" height="4" fill="#ffee00"/>
<rect x="959" y="766.67" width="29" height="4" fill="#ffee00"/>
<rect x="1062" y="766.67" width="24" height="4" fill="#ffee00"/>
<rect x="1101" y="766.67" width="24" height="4" fill="#ffee00"/>
<rect x="1160" y="766.67" width="34" height="4" fill="#ffee00"/>
<rect x="1249" y="766.67" width="23" height="4" fill="#ffee00"/>
<rect x="1425" y="766.67" width="87" height="4" fill="#ffee00"/>
<rect x="420" y="750.34" width="24" height="4" fill="#adff2f"/>
<rect x="533" y="750.34" width="23" height="4" fill="#adff2f"/>
<rect x="567" y="750.34" width="24" height="4" fill="#adff2f"/>
<rect x="621" y="750.34" width="122" height="4" fill="#adff2f"/>
<rect x="969" y="750.34" width="166" height="4" fill="#adff2f"/>
<rect x="1185" y="750.34" width="161" height="4" fill="#adff2f"/>
<rect x="1469" y="750.34" width="24" height="4" fill="#adff2f"/>
<rect x="430" y="734.00" width="23" height="4" fill="#55cc10"/>
<rect x="577" y="734.00" width="156" height="4" fill="#55cc10"/>
<rect x="994" y="734.00" width="111" height="4" fill="#55cc10"/>
<rect x="1116" y="734.00" width="107" height="4" fill="#55cc10"/>
<rect x="1263" y="734.00" width="29" height="4" fill="#55cc10"/>
<rect x="1489" y="734.00" width="23" height="4" fill="#55cc10"/>
<rect x="592" y="717.67" width="23" height="4" fill="#00f080"/>
<rect x="655" y="717.67" width="117" height="4" fill="#00f080"/>
<rect x="1072" y="717.67" width="171" height="4" fill="#00f080"/>
<rect x="1263" y="717.67" width="24" height="4" fill="#00f080"/>
<rect x="596" y="701.34" width="137" height="4" fill="#00d8f8"/>
<rect x="1092" y="701.34" width="28" height="4" fill="#00d8f8"/>
<rect x="1200" y="701.34" width="23" height="4" fill="#00d8f8"/>
<rect x="1273" y="701.34" width="53" height="4" fill="#00d8f8"/>
<rect x="1111" y="685.00" width="24" height="4" fill="#0000cc"/>
<g stroke="#ff0000" stroke-width="1.39" stroke-dasharray="5.14 2.22">
<path d="M968.4,641.5 V842.5"/>
<path d="M970.4,641.5 V842.5"/>
</g>
<g stroke="#ffffff" stroke-width="2.08">
<path d="M113.7,834.00 H121.8 M117.8,829.90 V838.10"/>
<path d="M240.4,834.00 H248.6 M244.5,829.90 V838.10"/>
<path d="M510.9,834.00 H519.1 M515.0,829.90 V838.10"/>
<path d="M706.9,834.00 H715.1 M711.0,829.90 V838.10"/>
<path d="M833.9,834.00 H842.1 M838.0,829.90 V838.10"/>
<path d="M961.9,834.00 H970.1 M966.0,829.90 V838.10"/>
<path d="M986.4,834.00 H994.6 M990.5,829.90 V838.10"/>
<path d="M1116.9,834.00 H1125.1 M1121.0,829.90 V838.10"/>
<path d="M1295.9,834.00 H1304.1 M1300.0,829.90 V838.10"/>
<path d="M1341.9,834.00 H1350.1 M1346.0,829.90 V838.10"/>
<path d="M1412.9,834.00 H1421.1 M1417.0,829.90 V838.10"/>
<path d="M1481.9,834.00 H1490.1 M1486.0,829.90 V838.10"/>
<path d="M1530.9,834.00 H1539.1 M1535.0,829.90 V838.10"/>
<path d="M1731.9,834.00 H1740.1 M1736.0,829.90 V838.10"/>
<path d="M1765.9,834.00 H1774.1 M1770.0,829.90 V838.10"/>
<path d="M172.7,817.67 H180.8 M176.8,813.57 V821.77"/>
<path d="M255.9,817.67 H264.1 M260.0,813.57 V821.77"/>
<path d="M323.6,817.67 H331.9 M327.8,813.57 V821.77"/>
<path d="M437.6,817.67 H445.9 M441.8,813.57 V821.77"/>
<path d="M598.9,817.67 H607.1 M603.0,813.57 V821.77"/>
<path d="M716.4,817.67 H724.6 M720.5,813.57 V821.77"/>
<path d="M793.4,817.67 H801.6 M797.5,813.57 V821.77"/>
<path d="M939.9,817.67 H948.1 M944.0,813.57 V821.77"/>
<path d="M1005.9,817.67 H1014.1 M1010.0,813.57 V821.77"/>
<path d="M1152.9,817.67 H1161.1 M1157.0,813.57 V821.77"/>
<path d="M1250.9,817.67 H1259.1 M1255.0,813.57 V821.77"/>
<path d="M1299.9,817.67 H1308.1 M1304.0,813.57 V821.77"/>
<path d="M1349.9,817.67 H1358.1 M1354.0,813.57 V821.77"/>
<path d="M1402.9,817.67 H1411.1 M1407.0,813.57 V821.77"/>
<path d="M1466.9,817.67 H1475.1 M1471.0,813.57 V821.77"/>
<path d="M1554.9,817.67 H1563.1 M1559.0,813.57 V821.77"/>
<path d="M174.4,801.33 H182.6 M178.5,797.23 V805.43"/>
<path d="M378.9,801.33 H387.1 M383.0,797.23 V805.43"/>
<path d="M544.9,801.33 H553.1 M549.0,797.23 V805.43"/>
<path d="M682.9,801.33 H691.1 M687.0,797.23 V805.43"/>
<path d="M741.9,801.33 H750.1 M746.0,797.23 V805.43"/>
<path d="M1074.9,801.33 H1083.1 M1079.0,797.23 V805.43"/>
<path d="M1216.9,801.33 H1225.1 M1221.0,797.23 V805.43"/>
<path d="M1304.9,801.33 H1313.1 M1309.0,797.23 V805.43"/>
<path d="M1466.9,801.33 H1475.1 M1471.0,797.23 V805.43"/>
<path d="M1559.9,801.33 H1568.1 M1564.0,797.23 V805.43"/>
<path d="M201.7,785.00 H209.8 M205.8,780.90 V789.10"/>
<path d="M400.9,785.00 H409.1 M405.0,780.90 V789.10"/>
<path d="M525.9,785.00 H534.1 M530.0,780.90 V789.10"/>
<path d="M638.9,785.00 H647.1 M643.0,780.90 V789.10"/>
<path d="M814.9,785.00 H823.1 M819.0,780.90 V789.10"/>
<path d="M959.9,785.00 H968.1 M964.0,780.90 V789.10"/>
<path d="M1040.9,785.00 H1049.1 M1045.0,780.90 V789.10"/>
<path d="M1187.9,785.00 H1196.1 M1192.0,780.90 V789.10"/>
<path d="M1250.9,785.00 H1259.1 M1255.0,780.90 V789.10"/>
<path d="M1324.9,785.00 H1333.1 M1329.0,780.90 V789.10"/>
<path d="M1402.9,785.00 H1411.1 M1407.0,780.90 V789.10"/>
<path d="M1545.4,785.00 H1553.6 M1549.5,780.90 V789.10"/>
<path d="M355.9,768.67 H364.1 M360.0,764.57 V772.77"/>
<path d="M426.4,768.67 H434.6 M430.5,764.57 V772.77"/>
<path d="M476.9,768.67 H485.1 M481.0,764.57 V772.77"/>
<path d="M535.9,768.67 H544.1 M540.0,764.57 V772.77"/>
<path d="M570.9,768.67 H579.1 M575.0,764.57 V772.77"/>
<path d="M630.9,768.67 H639.1 M635.0,764.57 V772.77"/>
<path d="M973.9,768.67 H982.1 M978.0,764.57 V772.77"/>
<path d="M1069.9,768.67 H1078.1 M1074.0,764.57 V772.77"/>
<path d="M1108.9,768.67 H1117.1 M1113.0,764.57 V772.77"/>
<path d="M1177.9,768.67 H1186.1 M1182.0,764.57 V772.77"/>
<path d="M1255.9,768.67 H1264.1 M1260.0,764.57 V772.77"/>
<path d="M1466.9,768.67 H1475.1 M1471.0,764.57 V772.77"/>
<path d="M427.9,752.34 H436.1 M432.0,748.24 V756.44"/>
<path d="M539.9,752.34 H548.1 M544.0,748.24 V756.44"/>
<path d="M574.9,752.34 H583.1 M579.0,748.24 V756.44"/>
<path d="M703.9,752.34 H712.1 M708.0,748.24 V756.44"/>
<path d="M1094.9,752.34 H1103.1 M1099.0,748.24 V756.44"/>
<path d="M1270.9,752.34 H1279.1 M1275.0,748.24 V756.44"/>
<path d="M1476.9,752.34 H1485.1 M1481.0,748.24 V756.44"/>
<path d="M437.9,736.00 H446.1 M442.0,731.90 V740.10"/>
<path d="M630.9,736.00 H639.1 M635.0,731.90 V740.10"/>
<path d="M1038.9,736.00 H1047.1 M1043.0,731.90 V740.10"/>
<path d="M1167.9,736.00 H1176.1 M1172.0,731.90 V740.10"/>
<path d="M1274.9,736.00 H1283.1 M1279.0,731.90 V740.10"/>
<path d="M1496.9,736.00 H1505.1 M1501.0,731.90 V740.10"/>
<path d="M598.9,719.67 H607.1 M603.0,715.57 V723.77"/>
<path d="M726.9,719.67 H735.1 M731.0,715.57 V723.77"/>
<path d="M1187.9,719.67 H1196.1 M1192.0,715.57 V723.77"/>
<path d="M1270.9,719.67 H1279.1 M1275.0,715.57 V723.77"/>
<path d="M687.9,703.34 H696.1 M692.0,699.24 V707.44"/>
<path d="M1101.9,703.34 H1110.1 M1106.0,699.24 V707.44"/>
<path d="M1206.9,703.34 H1215.1 M1211.0,699.24 V707.44"/>
<path d="M1299.9,703.34 H1308.1 M1304.0,699.24 V707.44"/>
<path d="M1118.9,687.00 H1127.1 M1123.0,682.90 V691.10"/>
</g>
<g font-family="'DejaVu Sans','Liberation Sans',sans-serif" font-size="10.5" fill="#ffffff" text-anchor="middle">
<text x="117.0" y="831.4">KSE</text>
<text x="255.0" y="831.4">ETA</text>
<text x="495.5" y="831.4">NZC</text>
<text x="711.5" y="831.4">NDA</text>
<text x="853.5" y="831.4">SPE</text>
<text x="946.5" y="831.4">ARD</text>
<text x="1025.0" y="831.4">EGE</text>
<text x="1143.0" y="831.4">NTA</text>
<text x="1285.0" y="831.4">MON</text>
<text x="1343.3" y="831.4">URS</text>
<text x="1412.5" y="831.4">AHY</text>
<text x="1485.5" y="831.4">GUM</text>
<text x="1535.0" y="831.4">OHY</text>
<text x="1736.0" y="831.4">XHE</text>
<text x="1770.0" y="831.4">EVI</text>
<text x="176.2" y="815.1">AVB</text>
<text x="255.5" y="815.1">ELY</text>
<text x="323.8" y="815.1">CAM</text>
<text x="431.8" y="815.1">SSG</text>
<text x="578.8" y="815.1">PCA</text>
<text x="721.0" y="815.1">AUD</text>
<text x="809.5" y="815.1">AUR</text>
<text x="929.5" y="815.1">DSX</text>
<text x="1010.0" y="815.1">OCU</text>
<text x="1137.5" y="815.1">OER</text>
<text x="1255.5" y="815.1">DKD</text>
<text x="1304.5" y="815.1">DSV</text>
<text x="1353.5" y="815.1">ALY</text>
<text x="1407.5" y="815.1">JLE</text>
<text x="1471.0" y="815.1">SCC</text>
<text x="1559.5" y="815.1">FEV</text>
<text x="175.8" y="798.7">LYR</text>
<text x="373.0" y="798.7">JMC</text>
<text x="558.8" y="798.7">JPE</text>
<text x="672.0" y="798.7">PAU</text>
<text x="774.2" y="798.7">NIA</text>
<text x="1049.5" y="798.7">STA</text>
<text x="1206.2" y="798.7">NOO</text>
<text x="1353.3" y="798.7">COM</text>
<text x="1471.0" y="798.7">NCC</text>
<text x="1564.5" y="798.7">FED</text>
<text x="206.0" y="782.4">HVI</text>
<text x="412.5" y="782.4">ARI</text>
<text x="530.0" y="782.4">SZC</text>
<text x="620.5" y="782.4">CAP</text>
<text x="819.0" y="782.4">NUE</text>
<text x="961.2" y="782.4">OCT</text>
<text x="1059.2" y="782.4">ORI</text>
<text x="1186.5" y="782.4">AMO</text>
<text x="1255.5" y="782.4">DPC</text>
<text x="1329.0" y="782.4">XVI</text>
<text x="1407.5" y="782.4">QUA</text>
<text x="1559.5" y="782.4">AAN</text>
<text x="352.5" y="766.1">TAH</text>
<text x="431.2" y="766.1">JEA</text>
<text x="481.0" y="766.1">JIP</text>
<text x="537.0" y="766.1">PPS</text>
<text x="578.8" y="766.1">ZCS</text>
<text x="632.5" y="766.1">GDR</text>
<text x="971.0" y="766.1">DRA</text>
<text x="1074.0" y="766.1">LUM</text>
<text x="1113.0" y="766.1">RPU</text>
<text x="1177.0" y="766.1">THA</text>
<text x="1260.5" y="766.1">PSU</text>
<text x="1470.5" y="766.1">XCB</text>
<text x="432.0" y="749.7">JRC</text>
<text x="544.5" y="749.7">CAN</text>
<text x="579.0" y="749.7">FAN</text>
<text x="682.0" y="749.7">PER</text>
<text x="1050.0" y="749.7">CTA</text>
<text x="1265.5" y="749.7">HYD</text>
<text x="1481.0" y="749.7">XUM</text>
<text x="441.5" y="733.4">COR</text>
<text x="658.0" y="733.4">SDA</text>
<text x="1049.5" y="733.4">LMI</text>
<text x="1166.5" y="733.4">LEO</text>
<text x="1274.5" y="733.4">EHY</text>
<text x="1500.5" y="733.4">ECV</text>
<text x="603.5" y="717.1">JXA</text>
<text x="715.8" y="717.1">KCG</text>
<text x="1157.5" y="717.1">AND</text>
<text x="1275.0" y="717.1">DAD</text>
<text x="664.5" y="700.7">ERI</text>
<text x="1108.2" y="700.7">SLD</text>
<text x="1211.5" y="700.7">ORS</text>
<text x="1299.5" y="700.7">GEM</text>
<text x="1123.0" y="684.4">KUM</text>
</g>
<rect x="20.5" y="641.5" width="1765.0" height="201.0" fill="none" stroke="#ffffff" stroke-width="1.1"/>
<g stroke="#ffffff" stroke-width="1.1">
<path d="M20.50,842.5 v4.9"/>
<path d="M265.64,842.5 v4.9"/>
<path d="M510.78,842.5 v4.9"/>
<path d="M755.92,842.5 v4.9"/>
<path d="M1001.06,842.5 v4.9"/>
<path d="M1246.19,842.5 v4.9"/>
<path d="M1491.33,842.5 v4.9"/>
<path d="M1736.47,842.5 v4.9"/>
</g>
<g font-family="'DejaVu Sans','Liberation Sans',sans-serif" font-size="13.89" fill="#ffffff" text-anchor="middle">
<text x="20.00" y="861.6">0</text>
<text x="265.14" y="861.6">50</text>
<text x="510.28" y="861.6">100</text>
<text x="755.42" y="861.6">150</text>
<text x="1000.56" y="861.6">200</text>
<text x="1245.69" y="861.6">250</text>
<text x="1490.83" y="861.6">300</text>
<text x="1735.97" y="861.6">350</text>
<text x="902.5" y="881.7">Solar longitude (deg)</text>
</g>
</g>
</svg></body></html>
